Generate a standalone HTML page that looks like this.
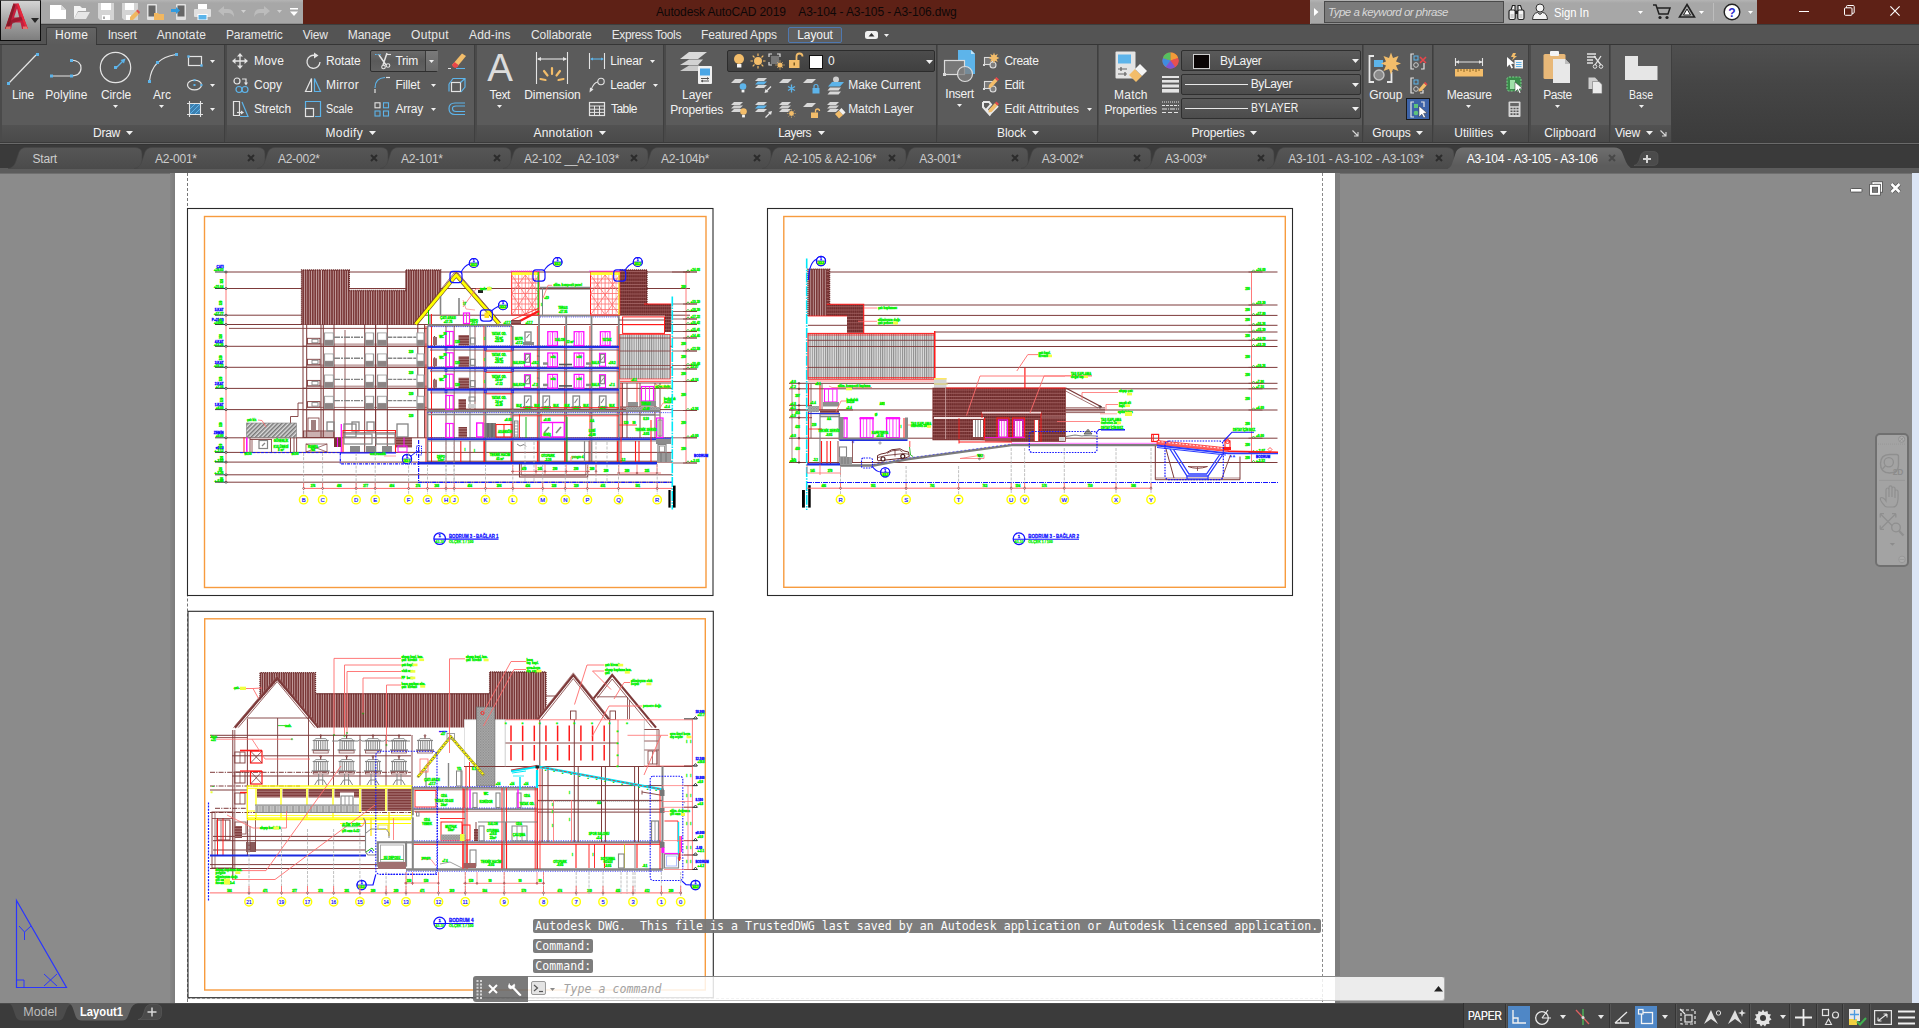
<!DOCTYPE html>
<html><head><meta charset="utf-8"><title>Autodesk AutoCAD 2019 - A3-104 - A3-105 - A3-106.dwg</title>
<style>
html,body{margin:0;padding:0;background:#8b8b8b;}
body{width:1919px;height:1028px;overflow:hidden;position:relative;font-family:"Liberation Sans",sans-serif;}
#app{position:absolute;left:0;top:0;width:1919px;height:1028px;overflow:hidden;}
#app div,#app span,#app svg{position:absolute;white-space:nowrap;}
#app svg{overflow:visible;}
#app svg text{white-space:pre;}
</style></head><body><div id="app">
<div style="left:0px;top:173px;width:1919px;height:831px;background:#8b8b8b;"></div>
<div style="left:0px;top:173px;width:1919px;height:1px;background:#6f6f6f;"></div>
<div style="left:1912px;top:173px;width:7px;height:830px;background:#dbe5f5;"></div>
<div style="left:175px;top:173px;width:1160px;height:830px;background:#ffffff;"></div>
<div style="left:1335px;top:173px;width:5px;height:830px;background:#7e7e7e;"></div>
<div style="left:170px;top:173px;width:5px;height:830px;background:linear-gradient(90deg,#868686,#7c7c7c);"></div>
<div style="left:187px;top:173px;width:0;height:829px;border-left:1px dashed #777;"></div>
<div style="left:1322px;top:173px;width:0;height:829px;border-left:1px dashed #8a8a8a;"></div>
<div style="left:187px;top:998px;width:1136px;height:0;border-top:1px dashed #b0b0b0;"></div>
<svg style="left:1848px;top:181px;" width="56" height="15" viewBox="0 0 56 15"><rect x="2.5" y="7.5" width="11.5" height="3.6" rx=".8" fill="#fff" stroke="#5a5a5a" stroke-width="1"/><rect x="25.2" y="2" width="8" height="8" fill="none" stroke="#5a5a5a" stroke-width="3.4"/><rect x="25.2" y="2" width="8" height="8" fill="none" stroke="#fff" stroke-width="1.6"/><rect x="23" y="4.8" width="8" height="8" fill="#777" stroke="#5a5a5a" stroke-width="3.6"/><rect x="23" y="4.8" width="8" height="8" fill="none" stroke="#fff" stroke-width="2"/><path d="M43.500 3L51.500 11M51.500 3L43.500 11" stroke="#5a5a5a" stroke-width="4.2"/><path d="M43.500 3L51.500 11M51.500 3L43.500 11" stroke="#fff" stroke-width="2.5"/></svg>
<div style="left:1875px;top:433px;width:34px;height:134px;background:#a3a3a3;border:2px solid #707070;box-sizing:border-box;border-radius:5px;"></div>
<svg style="left:1876px;top:434px;" width="31" height="132" viewBox="0 0 31 132"><circle cx="25.700" cy="5.200" r="3.100" fill="#acacac" stroke="#8f8f8f" stroke-width=".9"/><path d="M24 3.500L27.400 6.900M27.400 3.500L24 6.900" stroke="#8f8f8f" stroke-width=".9"/><path d="M2 10.100H30" stroke="#969696" stroke-width=".8" stroke-dasharray="1 1"/><path d="M3 46.400H29" stroke="#969696" stroke-width=".8"/><path d="M13.500 20.500H20.500Q22.500 20.500 22.500 22.500V31Q22.500 39 13.500 39Q4.500 39 4.500 29.800Q4.500 20.500 13.500 20.500Z" fill="none" stroke="#8f8f8f" stroke-width="1.400"/><circle cx="12.800" cy="28.200" r="4.600" fill="none" stroke="#8f8f8f" stroke-width="1.300"/><path d="M9.500 31.500L6.500 35" stroke="#8f8f8f" stroke-width="1.200"/><path d="M8 71Q3.500 66 4.500 64Q6 62.500 9 65.500L10 67V56Q10 54 11.500 54Q13 54 13 56V63V53.500Q13 51.800 14.500 51.800Q16 51.800 16 53.500V63V54.500Q16 53 17.500 53Q19 53 19 54.500V64V57.500Q19 56 20.500 56Q22 56 22 57.500Q22.500 66 21 70Q20 73 17 73H11Q9 73 8 71Z" fill="none" stroke="#8f8f8f" stroke-width="1.200"/><path d="M4.500 80L19.500 95M19.500 80L4.500 95" stroke="#8f8f8f" stroke-width="1.200"/><path d="M4.200 79.700H8M4.200 79.700V83.500M19.800 79.700H16M19.800 79.700V83.500M4.200 95.300H8M4.200 95.300V91.500" stroke="#8f8f8f" stroke-width="1.300" fill="none"/><circle cx="20" cy="93.500" r="4.300" fill="#a3a3a3" stroke="#8f8f8f" stroke-width="1.300"/><path d="M23 96.800L27.500 101.500" stroke="#8f8f8f" stroke-width="2.200"/><path d="M13.800 109H19L16.400 111.800Z" fill="#8c8c8c"/><circle cx="26" cy="125.400" r="3.300" fill="#aaa" stroke="#959595" stroke-width=".9"/><path d="M23.500 125.400H28.500" stroke="#959595" stroke-width=".8"/></svg>
<span style="left:1892.70px;top:468.10px;font:bold 8.5px/8.5px 'Liberation Sans',sans-serif;color:#8c8c8c;letter-spacing:-0.133px;">2D</span>
<svg style="left:12px;top:896px;" width="60" height="96" viewBox="0 0 60 96"><path d="M4.5 4.5V91.500H54.500Z" fill="none" stroke="#2a36ff" stroke-width="1.2"/><path d="M4.500 84H12V91.500" fill="none" stroke="#2a36ff" stroke-width="1"/><path d="M7 30L12.500 36L19 30M12.500 36V44" fill="none" stroke="#2a36ff" stroke-width="1"/><path d="M32 78L45 90M45 78L32 90" fill="none" stroke="#2a36ff" stroke-width="1"/></svg>
<svg style="left:0;top:0;" width="1919" height="1028" viewBox="0 0 1919 1028" font-family="'Liberation Sans',sans-serif" fill="none"><defs>
<pattern id="hv" width="2.4" height="4" patternUnits="userSpaceOnUse"><rect width="2.4" height="4" fill="#cfadad"/><rect width="1.65" height="4" fill="#7a3838"/></pattern>
<pattern id="hd" width="1.9" height="3.2" patternUnits="userSpaceOnUse"><rect width="1.9" height="3.2" fill="#8a4545"/><rect width="1.3" height="3.2" fill="#6e2c2c"/><rect y="2.5" width="1.9" height=".7" fill="#a86a6a"/></pattern>
<pattern id="hg" width="2.2" height="4" patternUnits="userSpaceOnUse"><rect width="2.2" height="4" fill="#dedede"/><rect width="1" height="4" fill="#8c8c8c"/></pattern>
<pattern id="hx" width="3" height="3" patternUnits="userSpaceOnUse" patternTransform="rotate(-45)"><rect width="3" height="3" fill="#dcdcdc"/><rect width="3" height="1.5" fill="#777"/></pattern>
<pattern id="hh" width="4" height="1.6" patternUnits="userSpaceOnUse"><rect width="4" height="1.6" fill="#b78a8a"/><rect width="4" height="1" fill="#7a3434"/></pattern>
<pattern id="hs" width="1.6" height="1.6" patternUnits="userSpaceOnUse"><rect width="1.6" height="1.6" fill="#b0b0b0"/><rect width=".8" height=".8" fill="#868686"/><rect x=".8" y=".8" width=".8" height=".8" fill="#929292"/></pattern>
</defs><rect x="187.5" y="208.5" width="525.5" height="387" fill="#fff" stroke="#2a2a2a" stroke-width="1.1"/>
<rect x="204.5" y="216.5" width="501.5" height="371" fill="none" stroke="#f79b3e" stroke-width="1.4"/>
<path d="M226 272L690 272" stroke="#7d3a3a" stroke-width="1"/>
<path d="M226 288.5L690 288.5" stroke="#7d3a3a" stroke-width="1"/>
<path d="M226 315.2L690 315.2" stroke="#7d3a3a" stroke-width="1"/>
<path d="M226 324.5L690 324.5" stroke="#7d3a3a" stroke-width="1"/>
<path d="M226 346.3L672 346.3" stroke="#7d3a3a" stroke-width="1"/>
<path d="M226 367.3L672 367.3" stroke="#7d3a3a" stroke-width="1"/>
<path d="M226 388.4L672 388.4" stroke="#7d3a3a" stroke-width="1"/>
<path d="M226 409.6L672 409.6" stroke="#7d3a3a" stroke-width="1"/>
<path d="M226 437.8L672 437.8" stroke="#7d3a3a" stroke-width="1"/>
<path d="M226 452.4L672 452.4" stroke="#7d3a3a" stroke-width="1"/>
<path d="M226 462.1L672 462.1" stroke="#7d3a3a" stroke-width="1"/>
<path d="M226 474.8L672 474.8" stroke="#7d3a3a" stroke-width="1"/>
<path d="M226 482.2L672 482.2" stroke="#7d3a3a" stroke-width="1"/>
<path d="M229 328.4L303 328.4" stroke="#7d3a3a" stroke-width="0.9"/>
<path d="M226 272L226 482.2" stroke="#ff6b6b" stroke-width="0.9"/>
<text x="223.5" y="271.4" font-size="3.12" fill="#00f000" font-weight="bold" text-anchor="end"  stroke="#00f000" stroke-width=".35">+24.03</text>
<text x="223.5" y="268.2" font-size="3.12" fill="#1414ff" font-weight="bold" text-anchor="end"  stroke="#1414ff" stroke-width=".35">ÇATI</text>
<path d="M215 272L226 272" stroke="#111" stroke-width="0.8"/>
<circle cx="226" cy="272" r="1" fill="#fff" stroke="#111" stroke-width="0.7"/>
<text x="223.5" y="287.9" font-size="3.12" fill="#00f000" font-weight="bold" text-anchor="end"  stroke="#00f000" stroke-width=".35">+21.64</text>
<path d="M215 288.5L226 288.5" stroke="#111" stroke-width="0.8"/>
<circle cx="226" cy="288.5" r="1" fill="#fff" stroke="#111" stroke-width="0.7"/>
<text x="223.5" y="314.6" font-size="3.12" fill="#00f000" font-weight="bold" text-anchor="end"  stroke="#00f000" stroke-width=".35">+17.77</text>
<text x="223.5" y="311.4" font-size="3.12" fill="#1414ff" font-weight="bold" text-anchor="end"  stroke="#1414ff" stroke-width=".35">5.KAT</text>
<path d="M215 315.2L226 315.2" stroke="#111" stroke-width="0.8"/>
<circle cx="226" cy="315.2" r="1" fill="#fff" stroke="#111" stroke-width="0.7"/>
<text x="223.5" y="323.9" font-size="3.12" fill="#00f000" font-weight="bold" text-anchor="end"  stroke="#00f000" stroke-width=".35">+16.42</text>
<text x="223.5" y="320.7" font-size="3.12" fill="#1414ff" font-weight="bold" text-anchor="end"  stroke="#1414ff" stroke-width=".35">P+21.90</text>
<path d="M215 324.5L226 324.5" stroke="#111" stroke-width="0.8"/>
<circle cx="226" cy="324.5" r="1" fill="#fff" stroke="#111" stroke-width="0.7"/>
<text x="223.5" y="345.7" font-size="3.12" fill="#00f000" font-weight="bold" text-anchor="end"  stroke="#00f000" stroke-width=".35">+13.26</text>
<text x="223.5" y="342.5" font-size="3.12" fill="#1414ff" font-weight="bold" text-anchor="end"  stroke="#1414ff" stroke-width=".35">4.KAT</text>
<path d="M215 346.3L226 346.3" stroke="#111" stroke-width="0.8"/>
<circle cx="226" cy="346.3" r="1" fill="#fff" stroke="#111" stroke-width="0.7"/>
<text x="223.5" y="366.7" font-size="3.12" fill="#00f000" font-weight="bold" text-anchor="end"  stroke="#00f000" stroke-width=".35">+10.22</text>
<text x="223.5" y="363.5" font-size="3.12" fill="#1414ff" font-weight="bold" text-anchor="end"  stroke="#1414ff" stroke-width=".35">3.KAT</text>
<path d="M215 367.3L226 367.3" stroke="#111" stroke-width="0.8"/>
<circle cx="226" cy="367.3" r="1" fill="#fff" stroke="#111" stroke-width="0.7"/>
<text x="223.5" y="387.8" font-size="3.12" fill="#00f000" font-weight="bold" text-anchor="end"  stroke="#00f000" stroke-width=".35">+7.16</text>
<text x="223.5" y="384.6" font-size="3.12" fill="#1414ff" font-weight="bold" text-anchor="end"  stroke="#1414ff" stroke-width=".35">2.KAT</text>
<path d="M215 388.4L226 388.4" stroke="#111" stroke-width="0.8"/>
<circle cx="226" cy="388.4" r="1" fill="#fff" stroke="#111" stroke-width="0.7"/>
<text x="223.5" y="409" font-size="3.12" fill="#00f000" font-weight="bold" text-anchor="end"  stroke="#00f000" stroke-width=".35">+4.09</text>
<text x="223.5" y="405.8" font-size="3.12" fill="#1414ff" font-weight="bold" text-anchor="end"  stroke="#1414ff" stroke-width=".35">1.KAT</text>
<path d="M215 409.6L226 409.6" stroke="#111" stroke-width="0.8"/>
<circle cx="226" cy="409.6" r="1" fill="#fff" stroke="#111" stroke-width="0.7"/>
<text x="223.5" y="437.2" font-size="3.12" fill="#00f000" font-weight="bold" text-anchor="end"  stroke="#00f000" stroke-width=".35">+0.00</text>
<text x="223.5" y="434" font-size="3.12" fill="#1414ff" font-weight="bold" text-anchor="end"  stroke="#1414ff" stroke-width=".35">ZEMİN</text>
<path d="M215 437.8L226 437.8" stroke="#111" stroke-width="0.8"/>
<circle cx="226" cy="437.8" r="1" fill="#fff" stroke="#111" stroke-width="0.7"/>
<text x="223.5" y="451.8" font-size="3.12" fill="#00f000" font-weight="bold" text-anchor="end"  stroke="#00f000" stroke-width=".35">+-2.12</text>
<text x="223.5" y="448.6" font-size="3.12" fill="#1414ff" font-weight="bold" text-anchor="end"  stroke="#1414ff" stroke-width=".35">±0.00</text>
<path d="M215 452.4L226 452.4" stroke="#111" stroke-width="0.8"/>
<circle cx="226" cy="452.4" r="1" fill="#fff" stroke="#111" stroke-width="0.7"/>
<text x="223.5" y="461.5" font-size="3.12" fill="#00f000" font-weight="bold" text-anchor="end"  stroke="#00f000" stroke-width=".35">+-3.52</text>
<path d="M215 462.1L226 462.1" stroke="#111" stroke-width="0.8"/>
<circle cx="226" cy="462.1" r="1" fill="#fff" stroke="#111" stroke-width="0.7"/>
<text x="223.5" y="474.2" font-size="3.12" fill="#00f000" font-weight="bold" text-anchor="end"  stroke="#00f000" stroke-width=".35">+-5.36</text>
<path d="M215 474.8L226 474.8" stroke="#111" stroke-width="0.8"/>
<circle cx="226" cy="474.8" r="1" fill="#fff" stroke="#111" stroke-width="0.7"/>
<text x="223.5" y="481.6" font-size="3.12" fill="#00f000" font-weight="bold" text-anchor="end"  stroke="#00f000" stroke-width=".35">+-6.43</text>
<path d="M215 482.2L226 482.2" stroke="#111" stroke-width="0.8"/>
<circle cx="226" cy="482.2" r="1" fill="#fff" stroke="#111" stroke-width="0.7"/>
<text x="222.5" y="281.25" font-size="2.81" fill="#00f000" font-weight="bold" text-anchor="middle" transform="rotate(-90 222.5 281.2)" stroke="#00f000" stroke-width=".35">320</text>
<text x="222.5" y="302.85" font-size="2.81" fill="#00f000" font-weight="bold" text-anchor="middle" transform="rotate(-90 222.5 302.9)" stroke="#00f000" stroke-width=".35">320</text>
<text x="222.5" y="320.85" font-size="2.81" fill="#00f000" font-weight="bold" text-anchor="middle" transform="rotate(-90 222.5 320.9)" stroke="#00f000" stroke-width=".35">320</text>
<text x="222.5" y="336.4" font-size="2.81" fill="#00f000" font-weight="bold" text-anchor="middle" transform="rotate(-90 222.5 336.4)" stroke="#00f000" stroke-width=".35">320</text>
<text x="222.5" y="357.8" font-size="2.81" fill="#00f000" font-weight="bold" text-anchor="middle" transform="rotate(-90 222.5 357.8)" stroke="#00f000" stroke-width=".35">320</text>
<text x="222.5" y="378.85" font-size="2.81" fill="#00f000" font-weight="bold" text-anchor="middle" transform="rotate(-90 222.5 378.9)" stroke="#00f000" stroke-width=".35">320</text>
<text x="222.5" y="400" font-size="2.81" fill="#00f000" font-weight="bold" text-anchor="middle" transform="rotate(-90 222.5 400.0)" stroke="#00f000" stroke-width=".35">320</text>
<text x="222.5" y="424.7" font-size="2.81" fill="#00f000" font-weight="bold" text-anchor="middle" transform="rotate(-90 222.5 424.7)" stroke="#00f000" stroke-width=".35">320</text>
<text x="222.5" y="446.1" font-size="2.81" fill="#00f000" font-weight="bold" text-anchor="middle" transform="rotate(-90 222.5 446.1)" stroke="#00f000" stroke-width=".35">320</text>
<text x="222.5" y="458.25" font-size="2.81" fill="#00f000" font-weight="bold" text-anchor="middle" transform="rotate(-90 222.5 458.2)" stroke="#00f000" stroke-width=".35">320</text>
<text x="222.5" y="469.45" font-size="2.81" fill="#00f000" font-weight="bold" text-anchor="middle" transform="rotate(-90 222.5 469.5)" stroke="#00f000" stroke-width=".35">320</text>
<text x="222.5" y="479.5" font-size="2.81" fill="#00f000" font-weight="bold" text-anchor="middle" transform="rotate(-90 222.5 479.5)" stroke="#00f000" stroke-width=".35">320</text>
<path d="M686 272L686 463" stroke="#ff6b6b" stroke-width="0.9"/>
<path d="M686 272L688 269.8L690 272" fill="none" stroke="#0a0" stroke-width="0.7" />
<text x="690.5" y="271.2" font-size="3.12" fill="#00f000" font-weight="bold"  stroke="#00f000" stroke-width=".35">+24.03</text>
<path d="M683 272L697 272" stroke="#7d3a3a" stroke-width="0.8"/>
<path d="M672 272L697 272" stroke="#7d3a3a" stroke-width="0.8"/>
<path d="M686 304L688 301.8L690 304" fill="none" stroke="#0a0" stroke-width="0.7" />
<text x="690.5" y="303.2" font-size="3.12" fill="#00f000" font-weight="bold"  stroke="#00f000" stroke-width=".35">+19.39</text>
<path d="M683 304L697 304" stroke="#7d3a3a" stroke-width="0.8"/>
<path d="M672 304L697 304" stroke="#7d3a3a" stroke-width="0.8"/>
<path d="M686 311.5L688 309.3L690 311.5" fill="none" stroke="#0a0" stroke-width="0.7" />
<text x="690.5" y="310.7" font-size="3.12" fill="#00f000" font-weight="bold"  stroke="#00f000" stroke-width=".35">+18.30</text>
<path d="M683 311.5L697 311.5" stroke="#7d3a3a" stroke-width="0.8"/>
<path d="M672 311.5L697 311.5" stroke="#7d3a3a" stroke-width="0.8"/>
<path d="M686 319L688 316.8L690 319" fill="none" stroke="#0a0" stroke-width="0.7" />
<text x="690.5" y="318.2" font-size="3.12" fill="#00f000" font-weight="bold"  stroke="#00f000" stroke-width=".35">+17.22</text>
<path d="M683 319L697 319" stroke="#7d3a3a" stroke-width="0.8"/>
<path d="M672 319L697 319" stroke="#7d3a3a" stroke-width="0.8"/>
<path d="M686 324.5L688 322.3L690 324.5" fill="none" stroke="#0a0" stroke-width="0.7" />
<text x="690.5" y="323.7" font-size="3.12" fill="#00f000" font-weight="bold"  stroke="#00f000" stroke-width=".35">+16.42</text>
<path d="M683 324.5L697 324.5" stroke="#7d3a3a" stroke-width="0.8"/>
<path d="M672 324.5L697 324.5" stroke="#7d3a3a" stroke-width="0.8"/>
<path d="M686 331.5L688 329.3L690 331.5" fill="none" stroke="#0a0" stroke-width="0.7" />
<text x="690.5" y="330.7" font-size="3.12" fill="#00f000" font-weight="bold"  stroke="#00f000" stroke-width=".35">+15.41</text>
<path d="M683 331.5L697 331.5" stroke="#7d3a3a" stroke-width="0.8"/>
<path d="M672 331.5L697 331.5" stroke="#7d3a3a" stroke-width="0.8"/>
<path d="M686 338L688 335.8L690 338" fill="none" stroke="#0a0" stroke-width="0.7" />
<text x="690.5" y="337.2" font-size="3.12" fill="#00f000" font-weight="bold"  stroke="#00f000" stroke-width=".35">+14.46</text>
<path d="M683 338L697 338" stroke="#7d3a3a" stroke-width="0.8"/>
<path d="M672 338L697 338" stroke="#7d3a3a" stroke-width="0.8"/>
<path d="M686 351L688 348.8L690 351" fill="none" stroke="#0a0" stroke-width="0.7" />
<text x="690.5" y="350.2" font-size="3.12" fill="#00f000" font-weight="bold"  stroke="#00f000" stroke-width=".35">+12.58</text>
<path d="M683 351L697 351" stroke="#7d3a3a" stroke-width="0.8"/>
<path d="M672 351L697 351" stroke="#7d3a3a" stroke-width="0.8"/>
<path d="M686 365.5L688 363.3L690 365.5" fill="none" stroke="#0a0" stroke-width="0.7" />
<text x="690.5" y="364.7" font-size="3.12" fill="#00f000" font-weight="bold"  stroke="#00f000" stroke-width=".35">+10.48</text>
<path d="M683 365.5L697 365.5" stroke="#7d3a3a" stroke-width="0.8"/>
<path d="M672 365.5L697 365.5" stroke="#7d3a3a" stroke-width="0.8"/>
<path d="M686 369L688 366.8L690 369" fill="none" stroke="#0a0" stroke-width="0.7" />
<text x="690.5" y="368.2" font-size="3.12" fill="#00f000" font-weight="bold"  stroke="#00f000" stroke-width=".35">+9.97</text>
<path d="M683 369L697 369" stroke="#7d3a3a" stroke-width="0.8"/>
<path d="M672 369L697 369" stroke="#7d3a3a" stroke-width="0.8"/>
<path d="M686 381.5L688 379.3L690 381.5" fill="none" stroke="#0a0" stroke-width="0.7" />
<text x="690.5" y="380.7" font-size="3.12" fill="#00f000" font-weight="bold"  stroke="#00f000" stroke-width=".35">+8.16</text>
<path d="M683 381.5L697 381.5" stroke="#7d3a3a" stroke-width="0.8"/>
<path d="M672 381.5L697 381.5" stroke="#7d3a3a" stroke-width="0.8"/>
<path d="M686 410.5L688 408.3L690 410.5" fill="none" stroke="#0a0" stroke-width="0.7" />
<text x="690.5" y="409.7" font-size="3.12" fill="#00f000" font-weight="bold"  stroke="#00f000" stroke-width=".35">+3.96</text>
<path d="M683 410.5L697 410.5" stroke="#7d3a3a" stroke-width="0.8"/>
<path d="M672 410.5L697 410.5" stroke="#7d3a3a" stroke-width="0.8"/>
<path d="M686 437.8L688 435.6L690 437.8" fill="none" stroke="#0a0" stroke-width="0.7" />
<text x="690.5" y="437" font-size="3.12" fill="#00f000" font-weight="bold"  stroke="#00f000" stroke-width=".35">+0.00</text>
<path d="M683 437.8L697 437.8" stroke="#7d3a3a" stroke-width="0.8"/>
<path d="M672 437.8L697 437.8" stroke="#7d3a3a" stroke-width="0.8"/>
<path d="M686 463L688 460.8L690 463" fill="none" stroke="#0a0" stroke-width="0.7" />
<text x="690.5" y="462.2" font-size="3.12" fill="#00f000" font-weight="bold"  stroke="#00f000" stroke-width=".35">+-3.65</text>
<path d="M683 463L697 463" stroke="#7d3a3a" stroke-width="0.8"/>
<path d="M672 463L697 463" stroke="#7d3a3a" stroke-width="0.8"/>
<text x="683.5" y="288" font-size="2.81" fill="#00f000" font-weight="bold" text-anchor="middle"  stroke="#00f000" stroke-width=".35">290</text>
<text x="683.5" y="344.5" font-size="2.81" fill="#00f000" font-weight="bold" text-anchor="middle"  stroke="#00f000" stroke-width=".35">290</text>
<text x="683.5" y="358.25" font-size="2.81" fill="#00f000" font-weight="bold" text-anchor="middle"  stroke="#00f000" stroke-width=".35">290</text>
<text x="683.5" y="375.25" font-size="2.81" fill="#00f000" font-weight="bold" text-anchor="middle"  stroke="#00f000" stroke-width=".35">290</text>
<text x="683.5" y="396" font-size="2.81" fill="#00f000" font-weight="bold" text-anchor="middle"  stroke="#00f000" stroke-width=".35">290</text>
<text x="683.5" y="424.15" font-size="2.81" fill="#00f000" font-weight="bold" text-anchor="middle"  stroke="#00f000" stroke-width=".35">290</text>
<text x="683.5" y="450.4" font-size="2.81" fill="#00f000" font-weight="bold" text-anchor="middle"  stroke="#00f000" stroke-width=".35">290</text>
<text x="694" y="456.5" font-size="3.12" fill="#1414ff" font-weight="bold"  stroke="#1414ff" stroke-width=".35">BODRUM</text>
<path d="M301.6 270L349.3 270L349.3 290.5L405.7 290.5L405.7 270L440.7 270L440.7 293.7L415.5 324.5L301.6 324.5Z" fill="url(#hv)" />
<path d="M301.6 324.5L301.6 270L349.3 270L349.3 290.5L405.7 290.5L405.7 270L440.7 270L440.7 293" fill="none" stroke="#6a2a2a" stroke-width="1.4" stroke-dasharray="1.2 .8" />
<path d="M321.5 270L321.5 324.5" stroke="#e8d0d0" stroke-width="0.8"/>
<path d="M322.8 270L322.8 324.5" stroke="#6a2a2a" stroke-width="0.8"/>
<path d="M303 324.5L303 438" stroke="#7d3a3a" stroke-width="1"/>
<path d="M306.7 324.5L306.7 438" stroke="#7d3a3a" stroke-width="1"/>
<path d="M321 324.5L321 438" stroke="#7d3a3a" stroke-width="1"/>
<path d="M323.3 324.5L323.3 438" stroke="#7d3a3a" stroke-width="1"/>
<path d="M334 324.5L334 438" stroke="#7d3a3a" stroke-width="1"/>
<path d="M364.7 324.5L364.7 452" stroke="#7d3a3a" stroke-width="1"/>
<path d="M375.6 324.5L375.6 452" stroke="#7d3a3a" stroke-width="1"/>
<path d="M387.3 324.5L387.3 452" stroke="#7d3a3a" stroke-width="1"/>
<path d="M417.8 324.5L417.8 438" stroke="#7d3a3a" stroke-width="1"/>
<path d="M424.6 324.5L424.6 438" stroke="#7d3a3a" stroke-width="1"/>
<path d="M375.6 324.5L375.6 452" stroke="#7d3a3a" stroke-width="1"/>
<path d="M345 330L345 438" stroke="#7d3a3a" stroke-width="0.8"/>
<path d="M303 346.3L427 346.3" stroke="#7d3a3a" stroke-width="1.1"/>
<path d="M306.7 344.1L427 344.1" stroke="#7d3a3a" stroke-width="0.7"/>
<path d="M303 367.3L427 367.3" stroke="#7d3a3a" stroke-width="1.1"/>
<path d="M306.7 365.1L427 365.1" stroke="#7d3a3a" stroke-width="0.7"/>
<path d="M303 388.4L427 388.4" stroke="#7d3a3a" stroke-width="1.1"/>
<path d="M306.7 386.2L427 386.2" stroke="#7d3a3a" stroke-width="0.7"/>
<path d="M303 409.6L427 409.6" stroke="#7d3a3a" stroke-width="1.1"/>
<path d="M306.7 407.4L427 407.4" stroke="#7d3a3a" stroke-width="0.7"/>
<path d="M303 328.4L427 328.4" stroke="#7d3a3a" stroke-width="0.9"/>
<rect x="323.9" y="332.5" width="10.1" height="13.3" fill="#9a9a9a"/>
<rect x="325.5" y="333.8" width="6.9" height="5.5" fill="#fff" stroke="#fff" stroke-width="0.8"/>
<rect x="324.9" y="340.3" width="8.1" height="5" fill="#8c8484"/>
<rect x="364.7" y="332.5" width="9.5" height="13.3" fill="#9a9a9a"/>
<rect x="366.3" y="333.8" width="6.3" height="5.5" fill="#fff" stroke="#fff" stroke-width="0.8"/>
<rect x="365.7" y="340.3" width="7.5" height="5" fill="#8c8484"/>
<rect x="377" y="332.5" width="10.3" height="13.3" fill="#9a9a9a"/>
<rect x="378.6" y="333.8" width="7.1" height="5.5" fill="#fff" stroke="#fff" stroke-width="0.8"/>
<rect x="378" y="340.3" width="8.3" height="5" fill="#8c8484"/>
<rect x="416.4" y="332.5" width="8.2" height="13.3" fill="#9a9a9a"/>
<rect x="418" y="333.8" width="5" height="5.5" fill="#fff" stroke="#fff" stroke-width="0.8"/>
<rect x="417.4" y="340.3" width="6.2" height="5" fill="#8c8484"/>
<path d="M334 337.3L364.7 337.3" stroke="#858585" stroke-width="1.4" stroke-dasharray="6 1 2 1"/>
<path d="M387.3 337.3L416.4 337.3" stroke="#858585" stroke-width="1.4" stroke-dasharray="5 1 3 1"/>
<rect x="307.5" y="338.3" width="12.5" height="5.5" fill="none" stroke="#7d3a3a" stroke-width="0.9"/>
<rect x="312" y="339.3" width="6" height="3.5" fill="none" stroke="#858585" stroke-width="0.9"/>
<text x="411" y="353.3" font-size="2.81" fill="#00f000" font-weight="bold" text-anchor="middle"  stroke="#00f000" stroke-width=".35">320</text>
<rect x="407.5" y="349.8" width="7" height="4.5" fill="none"/>
<rect x="323.9" y="353.5" width="10.1" height="13.3" fill="#9a9a9a"/>
<rect x="325.5" y="354.8" width="6.9" height="5.5" fill="#fff" stroke="#fff" stroke-width="0.8"/>
<rect x="324.9" y="361.3" width="8.1" height="5" fill="#8c8484"/>
<rect x="364.7" y="353.5" width="9.5" height="13.3" fill="#9a9a9a"/>
<rect x="366.3" y="354.8" width="6.3" height="5.5" fill="#fff" stroke="#fff" stroke-width="0.8"/>
<rect x="365.7" y="361.3" width="7.5" height="5" fill="#8c8484"/>
<rect x="377" y="353.5" width="10.3" height="13.3" fill="#9a9a9a"/>
<rect x="378.6" y="354.8" width="7.1" height="5.5" fill="#fff" stroke="#fff" stroke-width="0.8"/>
<rect x="378" y="361.3" width="8.3" height="5" fill="#8c8484"/>
<rect x="416.4" y="353.5" width="8.2" height="13.3" fill="#9a9a9a"/>
<rect x="418" y="354.8" width="5" height="5.5" fill="#fff" stroke="#fff" stroke-width="0.8"/>
<rect x="417.4" y="361.3" width="6.2" height="5" fill="#8c8484"/>
<path d="M334 358.3L364.7 358.3" stroke="#858585" stroke-width="1.4" stroke-dasharray="6 1 2 1"/>
<path d="M387.3 358.3L416.4 358.3" stroke="#858585" stroke-width="1.4" stroke-dasharray="5 1 3 1"/>
<rect x="307.5" y="359.3" width="12.5" height="5.5" fill="none" stroke="#7d3a3a" stroke-width="0.9"/>
<rect x="312" y="360.3" width="6" height="3.5" fill="none" stroke="#858585" stroke-width="0.9"/>
<text x="411" y="374.3" font-size="2.81" fill="#00f000" font-weight="bold" text-anchor="middle"  stroke="#00f000" stroke-width=".35">320</text>
<rect x="407.5" y="370.8" width="7" height="4.5" fill="none"/>
<rect x="323.9" y="374.6" width="10.1" height="13.3" fill="#9a9a9a"/>
<rect x="325.5" y="375.9" width="6.9" height="5.5" fill="#fff" stroke="#fff" stroke-width="0.8"/>
<rect x="324.9" y="382.4" width="8.1" height="5" fill="#8c8484"/>
<rect x="364.7" y="374.6" width="9.5" height="13.3" fill="#9a9a9a"/>
<rect x="366.3" y="375.9" width="6.3" height="5.5" fill="#fff" stroke="#fff" stroke-width="0.8"/>
<rect x="365.7" y="382.4" width="7.5" height="5" fill="#8c8484"/>
<rect x="377" y="374.6" width="10.3" height="13.3" fill="#9a9a9a"/>
<rect x="378.6" y="375.9" width="7.1" height="5.5" fill="#fff" stroke="#fff" stroke-width="0.8"/>
<rect x="378" y="382.4" width="8.3" height="5" fill="#8c8484"/>
<rect x="416.4" y="374.6" width="8.2" height="13.3" fill="#9a9a9a"/>
<rect x="418" y="375.9" width="5" height="5.5" fill="#fff" stroke="#fff" stroke-width="0.8"/>
<rect x="417.4" y="382.4" width="6.2" height="5" fill="#8c8484"/>
<path d="M334 379.4L364.7 379.4" stroke="#858585" stroke-width="1.4" stroke-dasharray="6 1 2 1"/>
<path d="M387.3 379.4L416.4 379.4" stroke="#858585" stroke-width="1.4" stroke-dasharray="5 1 3 1"/>
<rect x="307.5" y="380.4" width="12.5" height="5.5" fill="none" stroke="#7d3a3a" stroke-width="0.9"/>
<rect x="312" y="381.4" width="6" height="3.5" fill="none" stroke="#858585" stroke-width="0.9"/>
<text x="411" y="395.4" font-size="2.81" fill="#00f000" font-weight="bold" text-anchor="middle"  stroke="#00f000" stroke-width=".35">320</text>
<rect x="407.5" y="391.9" width="7" height="4.5" fill="none"/>
<rect x="323.9" y="395.8" width="10.1" height="13.3" fill="#9a9a9a"/>
<rect x="325.5" y="397.1" width="6.9" height="5.5" fill="#fff" stroke="#fff" stroke-width="0.8"/>
<rect x="324.9" y="403.6" width="8.1" height="5" fill="#8c8484"/>
<rect x="364.7" y="395.8" width="9.5" height="13.3" fill="#9a9a9a"/>
<rect x="366.3" y="397.1" width="6.3" height="5.5" fill="#fff" stroke="#fff" stroke-width="0.8"/>
<rect x="365.7" y="403.6" width="7.5" height="5" fill="#8c8484"/>
<rect x="377" y="395.8" width="10.3" height="13.3" fill="#9a9a9a"/>
<rect x="378.6" y="397.1" width="7.1" height="5.5" fill="#fff" stroke="#fff" stroke-width="0.8"/>
<rect x="378" y="403.6" width="8.3" height="5" fill="#8c8484"/>
<rect x="416.4" y="395.8" width="8.2" height="13.3" fill="#9a9a9a"/>
<rect x="418" y="397.1" width="5" height="5.5" fill="#fff" stroke="#fff" stroke-width="0.8"/>
<rect x="417.4" y="403.6" width="6.2" height="5" fill="#8c8484"/>
<path d="M334 400.6L364.7 400.6" stroke="#858585" stroke-width="1.4" stroke-dasharray="6 1 2 1"/>
<path d="M387.3 400.6L416.4 400.6" stroke="#858585" stroke-width="1.4" stroke-dasharray="5 1 3 1"/>
<rect x="307.5" y="401.6" width="12.5" height="5.5" fill="none" stroke="#7d3a3a" stroke-width="0.9"/>
<rect x="312" y="402.6" width="6" height="3.5" fill="none" stroke="#858585" stroke-width="0.9"/>
<text x="411" y="416.6" font-size="2.81" fill="#00f000" font-weight="bold" text-anchor="middle"  stroke="#00f000" stroke-width=".35">320</text>
<rect x="407.5" y="413.1" width="7" height="4.5" fill="none"/>
<path d="M290.5 452L290.5 416.5L298 416.5L298 403L303 403" fill="none" stroke="#7d3a3a" stroke-width="0.9" />
<rect x="303.5" y="431" width="30.5" height="6.5" fill="none" stroke="#7d3a3a" stroke-width="0.9"/>
<path d="M305 431.5L305 437.5" stroke="#7d3a3a" stroke-width="0.8"/>
<path d="M307 431.5L307 437.5" stroke="#7d3a3a" stroke-width="0.8"/>
<path d="M309 431.5L309 437.5" stroke="#7d3a3a" stroke-width="0.8"/>
<path d="M311 431.5L311 437.5" stroke="#7d3a3a" stroke-width="0.8"/>
<path d="M313 431.5L313 437.5" stroke="#7d3a3a" stroke-width="0.8"/>
<path d="M315 431.5L315 437.5" stroke="#7d3a3a" stroke-width="0.8"/>
<path d="M317 431.5L317 437.5" stroke="#7d3a3a" stroke-width="0.8"/>
<path d="M319 431.5L319 437.5" stroke="#7d3a3a" stroke-width="0.8"/>
<path d="M321 431.5L321 437.5" stroke="#7d3a3a" stroke-width="0.8"/>
<path d="M323 431.5L323 437.5" stroke="#7d3a3a" stroke-width="0.8"/>
<path d="M325 431.5L325 437.5" stroke="#7d3a3a" stroke-width="0.8"/>
<path d="M327 431.5L327 437.5" stroke="#7d3a3a" stroke-width="0.8"/>
<path d="M329 431.5L329 437.5" stroke="#7d3a3a" stroke-width="0.8"/>
<path d="M331 431.5L331 437.5" stroke="#7d3a3a" stroke-width="0.8"/>
<path d="M333 431.5L333 437.5" stroke="#7d3a3a" stroke-width="0.8"/>
<rect x="308" y="418" width="11" height="13" fill="none" stroke="#7d3a3a" stroke-width="0.8"/>
<rect x="311" y="420" width="5" height="11" fill="#a08080"/>
<rect x="327" y="422" width="7" height="9" fill="none" stroke="#858585" stroke-width="1.3"/>
<rect x="352" y="422" width="7" height="9" fill="none" stroke="#858585" stroke-width="1.3"/>
<rect x="367" y="422" width="7" height="9" fill="none" stroke="#858585" stroke-width="1.3"/>
<rect x="344" y="424" width="12" height="13" fill="none" stroke="#858585" stroke-width="1.3"/>
<rect x="397" y="424" width="11" height="13" fill="none" stroke="#858585" stroke-width="1.3"/>
<path d="M341.3 424L341.3 452" stroke="#ff10ff" stroke-width="1.3"/>
<path d="M343 452L343 430.5L395.5 430.5L395.5 452" fill="none" stroke="#ff1a1a" stroke-width="1.1" />
<path d="M343 432.8L395.5 432.8" stroke="#7d3a3a" stroke-width="0.8"/>
<rect x="344" y="434" width="28" height="10" fill="none" stroke="#858585" stroke-width="1.2"/>
<rect x="376" y="434" width="19" height="10" fill="none" stroke="#858585" stroke-width="1.2"/>
<rect x="350" y="446" width="10" height="6" fill="#8a8a8a"/>
<rect x="366" y="446" width="10" height="6" fill="#8a8a8a"/>
<rect x="382" y="446" width="10" height="6" fill="#8a8a8a"/>
<rect x="334" y="437.5" width="7" height="9.5" fill="#7a3434"/>
<path d="M337.5 437.5L337.5 447" stroke="#ff10ff" stroke-width="1"/>
<rect x="396" y="437.5" width="16" height="10" fill="url(#hh)"/>
<path d="M404 437.5L404 447" stroke="#ff10ff" stroke-width="1"/>
<rect x="398" y="446" width="9" height="6" fill="none" stroke="#ff10ff" stroke-width="1"/>
<path d="M306 444L327 452" fill="none" stroke="#7d3a3a" stroke-width="0.7" />
<path d="M306 452L327 444" fill="none" stroke="#7d3a3a" stroke-width="0.7" />
<rect x="306" y="444" width="21" height="8" fill="none" stroke="#7d3a3a" stroke-width="0.7"/>
<text x="313" y="448" font-size="2.81" fill="#00f000" font-weight="bold" text-anchor="middle"  stroke="#00f000" stroke-width=".35">RAMPA</text>
<text x="313" y="451" font-size="2.81" fill="#00f000" font-weight="bold" text-anchor="middle"  stroke="#00f000" stroke-width=".35">%8</text>
<rect x="246.3" y="423" width="50.3" height="14.4" fill="url(#hx)"/>
<rect x="246.3" y="423" width="50.3" height="14.4" fill="none" stroke="#858585" stroke-width="0.6"/>
<path d="M244 437.4L244 452" stroke="#ff1a1a" stroke-width="1"/>
<path d="M246.8 437.4L246.8 452" stroke="#ff10ff" stroke-width="1.6"/>
<path d="M250 437.4L250 452" stroke="#7d3a3a" stroke-width="0.9"/>
<path d="M294 437.4L294 452" stroke="#7d3a3a" stroke-width="0.9"/>
<path d="M296.6 437.4L296.6 452" stroke="#7d3a3a" stroke-width="0.9"/>
<path d="M250 439.5L272 439.5" stroke="#7d3a3a" stroke-width="0.9"/>
<path d="M252 439.5L252 452" fill="none" stroke="#7d3a3a" stroke-width="0.8" />
<path d="M271.5 439.5L271.5 452" fill="none" stroke="#7d3a3a" stroke-width="0.8" />
<rect x="259" y="440.5" width="8.5" height="8" fill="none" stroke="#858585" stroke-width="1.2"/>
<path d="M262 446L265 443" fill="none" stroke="#858585" stroke-width="1.2" />
<text x="281" y="442" font-size="2.81" fill="#00f000" font-weight="bold" text-anchor="middle"  stroke="#00f000" stroke-width=".35">GÜVENLİK</text>
<text x="281" y="447.5" font-size="2.91" fill="#00f000" font-weight="bold" text-anchor="middle"  stroke="#00f000" stroke-width=".35">KULÜBESİ</text>
<text x="281" y="451" font-size="2.81" fill="#00f000" font-weight="bold" text-anchor="middle"  stroke="#00f000" stroke-width=".35">8 m²</text>
<text x="247" y="421" font-size="2.81" fill="#00f000" font-weight="bold"  stroke="#00f000" stroke-width=".35">çatı kir.</text>
<path d="M258 420L262 420.5L266 427" fill="none" stroke="#ff6b6b" stroke-width="0.8" />
<path d="M240 452.6L340 452.6" stroke="#1414ff" stroke-width="1" stroke-dasharray="3 1.2"/>
<text x="248" y="455" font-size="2.81" fill="#00f000" font-weight="bold" text-anchor="middle"  stroke="#00f000" stroke-width=".35">±0.00</text>
<text x="295" y="455" font-size="2.81" fill="#00f000" font-weight="bold" text-anchor="middle"  stroke="#00f000" stroke-width=".35">±0.00</text>
<path d="M340.3 452.6L340.3 463.8L418 463.8" fill="none" stroke="#1414ff" stroke-width="1.2" stroke-dasharray="3 1 1 1" />
<path d="M340 452.8L396 452.8" stroke="#1414ff" stroke-width="1.3"/>
<path d="M418.6 440L418.6 482.4L672 482.4" fill="none" stroke="#1414ff" stroke-width="1.2" stroke-dasharray="4 1 1 1" />
<circle cx="407" cy="459" r="4.6" fill="#ffffff" stroke="#1414ff" stroke-width="1.1"/>
<path d="M402.4 459A4.6 4.6 0 0 0 411.6 459Z" fill="#d8ff40"/>
<path d="M402.4 459L411.6 459" stroke="#1414ff" stroke-width="0.8"/>
<circle cx="407" cy="459" r="4.6" fill="none" stroke="#1414ff" stroke-width="1.1"/>
<text x="407" y="458.2" font-size="3.33" fill="#1414ff" font-weight="bold" text-anchor="middle"  stroke="#1414ff" stroke-width=".35">1</text>
<text x="407" y="462.2" font-size="2.81" fill="#00f000" font-weight="bold" text-anchor="middle"  stroke="#00f000" stroke-width=".35">A3-1</text>
<path d="M411 456L416 452L420 451" fill="none" stroke="#1414ff" stroke-width="1" />
<rect x="416.5" y="446" width="5" height="9" fill="none" stroke="#1414ff" stroke-width="1" stroke-dasharray="1.3 1"/>
<text x="378" y="455" font-size="2.81" fill="#00f000" font-weight="bold" text-anchor="middle"  stroke="#00f000" stroke-width=".35">sızdırmazlık</text>
<path d="M384 456L396 456" stroke="#ff6b6b" stroke-width="0.6"/>
<path d="M415.5 324.2L456.3 275L499 323.7" fill="none" stroke="#7a5a20" stroke-width="4.2" />
<path d="M415.5 324.2L456.3 275L499 323.7" fill="none" stroke="#ffff00" stroke-width="2.8" />
<path d="M413 324.5L454 273L458 273L501 323" fill="none" stroke="#7d3a3a" stroke-width="0.7" />
<rect x="478" y="290" width="5" height="3" fill="#222"/>
<path d="M440.5 296L440.5 315" stroke="#858585" stroke-width="1.6"/>
<path d="M459 298L459 315" stroke="#858585" stroke-width="1.6"/>
<path d="M430 316L430 326" stroke="#858585" stroke-width="1.3"/>
<path d="M428.5 310L428.5 324" stroke="#0c0" stroke-width="1"/>
<path d="M431.5 314L431.5 462" stroke="#ff1a1a" stroke-width="1"/>
<rect x="463.5" y="313" width="6" height="10.5" fill="none" stroke="#ff10ff" stroke-width="1.2"/>
<path d="M466.5 313L466.5 323.5" stroke="#ff10ff" stroke-width="0.8"/>
<path d="M427.5 325.3L512 325.3" stroke="#858585" stroke-width="2.2"/>
<path d="M427.5 326.6L512 326.6" stroke="#1414ff" stroke-width="0.8" stroke-dasharray="1 1.2"/>
<path d="M540 315.8L619 315.8" stroke="#858585" stroke-width="1.6"/>
<path d="M540 317L619 317" stroke="#1414ff" stroke-width="0.7" stroke-dasharray="1 1.2"/>
<path d="M427.5 326L427.5 463" stroke="#858585" stroke-width="1.8"/>
<path d="M425.9 326L425.9 463" stroke="#ff1a1a" stroke-width="0.8"/>
<path d="M485.5 326L485.5 463" stroke="#858585" stroke-width="1.8"/>
<path d="M483.9 326L483.9 463" stroke="#ff1a1a" stroke-width="0.8"/>
<path d="M512.7 326L512.7 463" stroke="#858585" stroke-width="1.8"/>
<path d="M511.1 326L511.1 463" stroke="#ff1a1a" stroke-width="0.8"/>
<path d="M539 316L539 463" stroke="#858585" stroke-width="1.8"/>
<path d="M537.4 326L537.4 463" stroke="#ff1a1a" stroke-width="0.8"/>
<path d="M566.2 316L566.2 463" stroke="#858585" stroke-width="1.8"/>
<path d="M564.6 326L564.6 463" stroke="#ff1a1a" stroke-width="0.8"/>
<path d="M591.5 316L591.5 463" stroke="#858585" stroke-width="1.8"/>
<path d="M589.9 326L589.9 463" stroke="#ff1a1a" stroke-width="0.8"/>
<path d="M618.8 316L618.8 463" stroke="#858585" stroke-width="1.8"/>
<path d="M617.2 326L617.2 463" stroke="#ff1a1a" stroke-width="0.8"/>
<path d="M446 326L446 463" stroke="#7d3a3a" stroke-width="0.8"/>
<path d="M454.2 326L454.2 463" stroke="#7d3a3a" stroke-width="0.8"/>
<path d="M475 326L475 411" stroke="#7d3a3a" stroke-width="0.8"/>
<path d="M470 326L470 438" stroke="#858585" stroke-width="1"/>
<path d="M427.5 347L619 347" stroke="#2030e0" stroke-width="1.9"/>
<path d="M427.5 345.7L619 345.7" stroke="#1414ff" stroke-width="0.6" stroke-dasharray="1.2 1"/>
<path d="M430 349.2L619 349.2" stroke="#6a70c0" stroke-width="0.8"/>
<path d="M430 350.3L619 350.3" stroke="#7d3a3a" stroke-width="0.6"/>
<rect x="445" y="347.9" width="2" height="2.2" fill="none" stroke="#1414ff" stroke-width="0.6"/>
<rect x="484.5" y="347.9" width="2" height="2.2" fill="none" stroke="#1414ff" stroke-width="0.6"/>
<rect x="511.7" y="347.9" width="2" height="2.2" fill="none" stroke="#1414ff" stroke-width="0.6"/>
<path d="M486 351.1L512 351.1" stroke="#ff1a1a" stroke-width="0.9"/>
<path d="M427.5 368.3L619 368.3" stroke="#2030e0" stroke-width="1.9"/>
<path d="M427.5 367L619 367" stroke="#1414ff" stroke-width="0.6" stroke-dasharray="1.2 1"/>
<path d="M430 370.5L619 370.5" stroke="#6a70c0" stroke-width="0.8"/>
<path d="M430 371.6L619 371.6" stroke="#7d3a3a" stroke-width="0.6"/>
<rect x="445" y="369.2" width="2" height="2.2" fill="none" stroke="#1414ff" stroke-width="0.6"/>
<rect x="484.5" y="369.2" width="2" height="2.2" fill="none" stroke="#1414ff" stroke-width="0.6"/>
<rect x="511.7" y="369.2" width="2" height="2.2" fill="none" stroke="#1414ff" stroke-width="0.6"/>
<path d="M486 372.4L512 372.4" stroke="#ff1a1a" stroke-width="0.9"/>
<path d="M427.5 389.7L619 389.7" stroke="#2030e0" stroke-width="1.9"/>
<path d="M427.5 388.4L619 388.4" stroke="#1414ff" stroke-width="0.6" stroke-dasharray="1.2 1"/>
<path d="M430 391.9L619 391.9" stroke="#6a70c0" stroke-width="0.8"/>
<path d="M430 393L619 393" stroke="#7d3a3a" stroke-width="0.6"/>
<rect x="445" y="390.6" width="2" height="2.2" fill="none" stroke="#1414ff" stroke-width="0.6"/>
<rect x="484.5" y="390.6" width="2" height="2.2" fill="none" stroke="#1414ff" stroke-width="0.6"/>
<rect x="511.7" y="390.6" width="2" height="2.2" fill="none" stroke="#1414ff" stroke-width="0.6"/>
<path d="M486 393.8L512 393.8" stroke="#ff1a1a" stroke-width="0.9"/>
<path d="M427.5 411L619 411" stroke="#858585" stroke-width="2.6"/>
<path d="M427.5 412.6L672 412.6" stroke="#1414ff" stroke-width="0.7" stroke-dasharray="1.2 1"/>
<path d="M427.5 414.5L655 414.5" stroke="#858585" stroke-width="1.6"/>
<path d="M427.5 409L619 409" stroke="#7d3a3a" stroke-width="0.8"/>
<path d="M427.5 439.3L671 439.3" stroke="#2030e0" stroke-width="1.9"/>
<path d="M427.5 437.7L671 437.7" stroke="#1414ff" stroke-width="0.6" stroke-dasharray="1.2 1"/>
<path d="M427.5 441L660 441" stroke="#858585" stroke-width="1.2"/>
<path d="M419 463.3L657 463.3" stroke="#1a2ae0" stroke-width="2.6"/>
<path d="M427 461.2L672 461.2" stroke="#7d3a3a" stroke-width="0.9"/>
<rect x="445.8" y="331.5" width="7.4" height="14" fill="none" stroke="#ff10ff" stroke-width="1.2"/>
<path d="M449.5 331.5L449.5 345.5" stroke="#ff10ff" stroke-width="0.9"/>
<rect x="458.5" y="335" width="10.5" height="10.5" fill="url(#hh)"/>
<rect x="470.5" y="338" width="4.5" height="6" fill="none" stroke="#858585" stroke-width="1.2"/>
<path d="M434.5 336L434.5 346" stroke="#7d3a3a" stroke-width="1.2"/>
<rect x="433" y="337" width="4" height="8" fill="#9a6a6a"/>
<text x="441.5" y="338" font-size="2.81" fill="#00f000" font-weight="bold" text-anchor="middle"  stroke="#00f000" stroke-width=".35">WC</text>
<text x="455" y="343" font-size="2.81" fill="#00f000" font-weight="bold"  stroke="#00f000" stroke-width=".35">120</text>
<text x="443.5" y="335" font-size="2.81" fill="#00f000" font-weight="bold"  stroke="#00f000" stroke-width=".35">90</text>
<text x="499" y="335" font-size="2.81" fill="#00f000" font-weight="bold" text-anchor="middle"  stroke="#00f000" stroke-width=".35">YATAK OD.</text>
<text x="499" y="338.5" font-size="2.81" fill="#00f000" font-weight="bold" text-anchor="middle"  stroke="#00f000" stroke-width=".35">24 m²</text>
<text x="499" y="342" font-size="2.81" fill="#00f000" font-weight="bold" text-anchor="middle"  stroke="#00f000" stroke-width=".35">+13.30</text>
<text x="484" y="340" font-size="3.12" fill="#00f000" font-weight="bold"  stroke="#00f000" stroke-width=".35">I</text>
<rect x="445.8" y="352.8" width="7.4" height="14" fill="none" stroke="#ff10ff" stroke-width="1.2"/>
<path d="M449.5 352.8L449.5 366.8" stroke="#ff10ff" stroke-width="0.9"/>
<rect x="458.5" y="356.3" width="10.5" height="10.5" fill="url(#hh)"/>
<rect x="470.5" y="359.3" width="4.5" height="6" fill="none" stroke="#858585" stroke-width="1.2"/>
<path d="M434.5 357.3L434.5 367.3" stroke="#7d3a3a" stroke-width="1.2"/>
<rect x="433" y="358.3" width="4" height="8" fill="#9a6a6a"/>
<text x="441.5" y="359.3" font-size="2.81" fill="#00f000" font-weight="bold" text-anchor="middle"  stroke="#00f000" stroke-width=".35">WC</text>
<text x="455" y="364.3" font-size="2.81" fill="#00f000" font-weight="bold"  stroke="#00f000" stroke-width=".35">120</text>
<text x="443.5" y="356.3" font-size="2.81" fill="#00f000" font-weight="bold"  stroke="#00f000" stroke-width=".35">90</text>
<text x="499" y="356.3" font-size="2.81" fill="#00f000" font-weight="bold" text-anchor="middle"  stroke="#00f000" stroke-width=".35">YATAK OD.</text>
<text x="499" y="359.8" font-size="2.81" fill="#00f000" font-weight="bold" text-anchor="middle"  stroke="#00f000" stroke-width=".35">24 m²</text>
<text x="499" y="363.3" font-size="2.81" fill="#00f000" font-weight="bold" text-anchor="middle"  stroke="#00f000" stroke-width=".35">+10.22</text>
<text x="484" y="361.3" font-size="3.12" fill="#00f000" font-weight="bold"  stroke="#00f000" stroke-width=".35">I</text>
<rect x="445.8" y="374.2" width="7.4" height="14" fill="none" stroke="#ff10ff" stroke-width="1.2"/>
<path d="M449.5 374.2L449.5 388.2" stroke="#ff10ff" stroke-width="0.9"/>
<rect x="458.5" y="377.7" width="10.5" height="10.5" fill="url(#hh)"/>
<rect x="470.5" y="380.7" width="4.5" height="6" fill="none" stroke="#858585" stroke-width="1.2"/>
<path d="M434.5 378.7L434.5 388.7" stroke="#7d3a3a" stroke-width="1.2"/>
<rect x="433" y="379.7" width="4" height="8" fill="#9a6a6a"/>
<text x="441.5" y="380.7" font-size="2.81" fill="#00f000" font-weight="bold" text-anchor="middle"  stroke="#00f000" stroke-width=".35">WC</text>
<text x="455" y="385.7" font-size="2.81" fill="#00f000" font-weight="bold"  stroke="#00f000" stroke-width=".35">120</text>
<text x="443.5" y="377.7" font-size="2.81" fill="#00f000" font-weight="bold"  stroke="#00f000" stroke-width=".35">90</text>
<text x="499" y="377.7" font-size="2.81" fill="#00f000" font-weight="bold" text-anchor="middle"  stroke="#00f000" stroke-width=".35">YATAK OD.</text>
<text x="499" y="381.2" font-size="2.81" fill="#00f000" font-weight="bold" text-anchor="middle"  stroke="#00f000" stroke-width=".35">24 m²</text>
<text x="499" y="384.7" font-size="2.81" fill="#00f000" font-weight="bold" text-anchor="middle"  stroke="#00f000" stroke-width=".35">+7.12</text>
<text x="484" y="382.7" font-size="3.12" fill="#00f000" font-weight="bold"  stroke="#00f000" stroke-width=".35">I</text>
<rect x="547.8" y="331.7" width="9.6" height="13.8" fill="none" stroke="#ff10ff" stroke-width="1.3"/>
<path d="M552.6 331.7L552.6 345.5" stroke="#ff10ff" stroke-width="0.9"/>
<path d="M550.2 333L550.2 344.5" stroke="#ff10ff" stroke-width="0.6"/>
<path d="M555 333L555 344.5" stroke="#ff10ff" stroke-width="0.6"/>
<rect x="574.2" y="331.7" width="9.6" height="13.8" fill="none" stroke="#ff10ff" stroke-width="1.3"/>
<path d="M579 331.7L579 345.5" stroke="#ff10ff" stroke-width="0.9"/>
<path d="M576.6 333L576.6 344.5" stroke="#ff10ff" stroke-width="0.6"/>
<path d="M581.4 333L581.4 344.5" stroke="#ff10ff" stroke-width="0.6"/>
<rect x="600.4" y="331.7" width="9.6" height="13.8" fill="none" stroke="#ff10ff" stroke-width="1.3"/>
<path d="M605.2 331.7L605.2 345.5" stroke="#ff10ff" stroke-width="0.9"/>
<path d="M602.8 333L602.8 344.5" stroke="#ff10ff" stroke-width="0.6"/>
<path d="M607.6 333L607.6 344.5" stroke="#ff10ff" stroke-width="0.6"/>
<rect x="525" y="332" width="6" height="10" fill="none" stroke="#858585" stroke-width="1.3"/>
<path d="M526.5 338L529.5 334" fill="none" stroke="#858585" stroke-width="1.1" />
<rect x="523" y="342" width="11" height="3" fill="#8a8a8a"/>
<text x="519" y="340" font-size="2.81" fill="#00f000" font-weight="bold" text-anchor="middle"  stroke="#00f000" stroke-width=".35">MUTF.</text>
<text x="519" y="343.5" font-size="2.81" fill="#00f000" font-weight="bold" text-anchor="middle"  stroke="#00f000" stroke-width=".35">+17.3</text>
<text x="560" y="340.5" font-size="2.81" fill="#00f000" font-weight="bold" text-anchor="middle"  stroke="#00f000" stroke-width=".35">SALON</text>
<text x="607" y="340.5" font-size="2.81" fill="#00f000" font-weight="bold" text-anchor="middle"  stroke="#00f000" stroke-width=".35">YATAK</text>
<text x="570" y="343" font-size="2.81" fill="#00f000" font-weight="bold" text-anchor="middle"  stroke="#00f000" stroke-width=".35">22 m²</text>
<rect x="547.8" y="353" width="9.6" height="13.8" fill="none" stroke="#ff10ff" stroke-width="1.3"/>
<path d="M552.6 353L552.6 366.8" stroke="#ff10ff" stroke-width="0.9"/>
<path d="M550.2 354.3L550.2 365.8" stroke="#ff10ff" stroke-width="0.6"/>
<path d="M555 354.3L555 365.8" stroke="#ff10ff" stroke-width="0.6"/>
<rect x="574.2" y="353" width="9.6" height="13.8" fill="none" stroke="#ff10ff" stroke-width="1.3"/>
<path d="M579 353L579 366.8" stroke="#ff10ff" stroke-width="0.9"/>
<path d="M576.6 354.3L576.6 365.8" stroke="#ff10ff" stroke-width="0.6"/>
<path d="M581.4 354.3L581.4 365.8" stroke="#ff10ff" stroke-width="0.6"/>
<rect x="524.5" y="353.3" width="6" height="13" fill="none" stroke="#ff10ff" stroke-width="1.1"/>
<rect x="525.5" y="354.3" width="4" height="8" fill="none" stroke="#858585" stroke-width="1.2"/>
<path d="M526.1 360.3L528.9 356.3" fill="none" stroke="#858585" stroke-width="1" />
<rect x="599.5" y="353.3" width="6" height="13" fill="none" stroke="#ff10ff" stroke-width="1.1"/>
<rect x="600.5" y="354.3" width="4" height="8" fill="none" stroke="#858585" stroke-width="1.2"/>
<path d="M601.1 360.3L603.9 356.3" fill="none" stroke="#858585" stroke-width="1" />
<rect x="543" y="362.3" width="5" height="2.5" fill="#8a8a8a"/>
<text x="537" y="357.3" font-size="3.12" fill="#555" >o-</text>
<rect x="586" y="362.3" width="5" height="2.5" fill="#8a8a8a"/>
<text x="580" y="357.3" font-size="3.12" fill="#555" >o-</text>
<rect x="559" y="363.7" width="13" height="1.6" fill="#555"/>
<text x="519" y="364.3" font-size="2.81" fill="#00f000" font-weight="bold" text-anchor="middle"  stroke="#00f000" stroke-width=".35">BALKON</text>
<text x="535" y="364.3" font-size="2.81" fill="#00f000" font-weight="bold" text-anchor="middle"  stroke="#00f000" stroke-width=".35">+10.2</text>
<text x="596" y="364.3" font-size="2.81" fill="#00f000" font-weight="bold" text-anchor="middle"  stroke="#00f000" stroke-width=".35">BALK.</text>
<text x="612" y="364.3" font-size="2.81" fill="#00f000" font-weight="bold" text-anchor="middle"  stroke="#00f000" stroke-width=".35">+10.2</text>
<text x="553" y="358.3" font-size="2.81" fill="#00f000" font-weight="bold" text-anchor="middle"  stroke="#00f000" stroke-width=".35">oda</text>
<text x="579" y="358.3" font-size="2.81" fill="#00f000" font-weight="bold" text-anchor="middle"  stroke="#00f000" stroke-width=".35">oda</text>
<rect x="547.8" y="374.4" width="9.6" height="13.8" fill="none" stroke="#ff10ff" stroke-width="1.3"/>
<path d="M552.6 374.4L552.6 388.2" stroke="#ff10ff" stroke-width="0.9"/>
<path d="M550.2 375.7L550.2 387.2" stroke="#ff10ff" stroke-width="0.6"/>
<path d="M555 375.7L555 387.2" stroke="#ff10ff" stroke-width="0.6"/>
<rect x="574.2" y="374.4" width="9.6" height="13.8" fill="none" stroke="#ff10ff" stroke-width="1.3"/>
<path d="M579 374.4L579 388.2" stroke="#ff10ff" stroke-width="0.9"/>
<path d="M576.6 375.7L576.6 387.2" stroke="#ff10ff" stroke-width="0.6"/>
<path d="M581.4 375.7L581.4 387.2" stroke="#ff10ff" stroke-width="0.6"/>
<rect x="524.5" y="374.7" width="6" height="13" fill="none" stroke="#ff10ff" stroke-width="1.1"/>
<rect x="525.5" y="375.7" width="4" height="8" fill="none" stroke="#858585" stroke-width="1.2"/>
<path d="M526.1 381.7L528.9 377.7" fill="none" stroke="#858585" stroke-width="1" />
<rect x="599.5" y="374.7" width="6" height="13" fill="none" stroke="#ff10ff" stroke-width="1.1"/>
<rect x="600.5" y="375.7" width="4" height="8" fill="none" stroke="#858585" stroke-width="1.2"/>
<path d="M601.1 381.7L603.9 377.7" fill="none" stroke="#858585" stroke-width="1" />
<rect x="543" y="383.7" width="5" height="2.5" fill="#8a8a8a"/>
<text x="537" y="378.7" font-size="3.12" fill="#555" >o-</text>
<rect x="586" y="383.7" width="5" height="2.5" fill="#8a8a8a"/>
<text x="580" y="378.7" font-size="3.12" fill="#555" >o-</text>
<rect x="559" y="385.1" width="13" height="1.6" fill="#555"/>
<text x="519" y="385.7" font-size="2.81" fill="#00f000" font-weight="bold" text-anchor="middle"  stroke="#00f000" stroke-width=".35">BALKON</text>
<text x="535" y="385.7" font-size="2.81" fill="#00f000" font-weight="bold" text-anchor="middle"  stroke="#00f000" stroke-width=".35">+7.1</text>
<text x="596" y="385.7" font-size="2.81" fill="#00f000" font-weight="bold" text-anchor="middle"  stroke="#00f000" stroke-width=".35">BALK.</text>
<text x="612" y="385.7" font-size="2.81" fill="#00f000" font-weight="bold" text-anchor="middle"  stroke="#00f000" stroke-width=".35">+7.1</text>
<text x="553" y="379.7" font-size="2.81" fill="#00f000" font-weight="bold" text-anchor="middle"  stroke="#00f000" stroke-width=".35">oda</text>
<text x="579" y="379.7" font-size="2.81" fill="#00f000" font-weight="bold" text-anchor="middle"  stroke="#00f000" stroke-width=".35">oda</text>
<rect x="524.5" y="396" width="6.5" height="12" fill="none" stroke="#858585" stroke-width="1.3"/>
<path d="M526.1 403L529.1 398.5" fill="none" stroke="#858585" stroke-width="1.1" />
<rect x="523" y="406" width="9.5" height="2.5" fill="#8f8f8f"/>
<text x="527.5" y="409" font-size="2.81" fill="#00f000" font-weight="bold" text-anchor="middle"  stroke="#00f000" stroke-width=".35">+3.4</text>
<rect x="543" y="396" width="6.5" height="12" fill="none" stroke="#858585" stroke-width="1.3"/>
<path d="M544.6 403L547.6 398.5" fill="none" stroke="#858585" stroke-width="1.1" />
<rect x="541.5" y="406" width="9.5" height="2.5" fill="#8f8f8f"/>
<text x="546" y="409" font-size="2.81" fill="#00f000" font-weight="bold" text-anchor="middle"  stroke="#00f000" stroke-width=".35">+3.4</text>
<rect x="573" y="396" width="6.5" height="12" fill="none" stroke="#858585" stroke-width="1.3"/>
<path d="M574.6 403L577.6 398.5" fill="none" stroke="#858585" stroke-width="1.1" />
<rect x="571.5" y="406" width="9.5" height="2.5" fill="#8f8f8f"/>
<text x="576" y="409" font-size="2.81" fill="#00f000" font-weight="bold" text-anchor="middle"  stroke="#00f000" stroke-width=".35">+3.4</text>
<rect x="599.5" y="396" width="6.5" height="12" fill="none" stroke="#858585" stroke-width="1.3"/>
<path d="M601.1 403L604.1 398.5" fill="none" stroke="#858585" stroke-width="1.1" />
<rect x="598" y="406" width="9.5" height="2.5" fill="#8f8f8f"/>
<text x="602.5" y="409" font-size="2.81" fill="#00f000" font-weight="bold" text-anchor="middle"  stroke="#00f000" stroke-width=".35">+3.4</text>
<text x="519" y="406.5" font-size="2.81" fill="#00f000" font-weight="bold" text-anchor="middle"  stroke="#00f000" stroke-width=".35">BLK</text>
<text x="537" y="406.5" font-size="2.81" fill="#00f000" font-weight="bold" text-anchor="middle"  stroke="#00f000" stroke-width=".35">BLK</text>
<text x="556" y="406.5" font-size="2.81" fill="#00f000" font-weight="bold" text-anchor="middle"  stroke="#00f000" stroke-width=".35">BLK</text>
<text x="567" y="406.5" font-size="2.81" fill="#00f000" font-weight="bold" text-anchor="middle"  stroke="#00f000" stroke-width=".35">BLK</text>
<text x="586" y="406.5" font-size="2.81" fill="#00f000" font-weight="bold" text-anchor="middle"  stroke="#00f000" stroke-width=".35">BLK</text>
<text x="612" y="406.5" font-size="2.81" fill="#00f000" font-weight="bold" text-anchor="middle"  stroke="#00f000" stroke-width=".35">BLK</text>
<rect x="445.8" y="395.5" width="7.4" height="14" fill="none" stroke="#ff10ff" stroke-width="1.2"/>
<path d="M449.5 395.5L449.5 409.5" stroke="#ff10ff" stroke-width="0.9"/>
<rect x="458.5" y="399" width="7.5" height="10" fill="url(#hh)"/>
<rect x="469" y="397" width="6" height="4" fill="none" stroke="#858585" stroke-width="1"/>
<rect x="468" y="404" width="8" height="4" fill="#cfcfcf"/>
<text x="499" y="399" font-size="2.81" fill="#00f000" font-weight="bold" text-anchor="middle"  stroke="#00f000" stroke-width=".35">YATAK OD.</text>
<text x="499" y="402.5" font-size="2.81" fill="#00f000" font-weight="bold" text-anchor="middle"  stroke="#00f000" stroke-width=".35">24 m²</text>
<text x="499" y="406" font-size="2.81" fill="#00f000" font-weight="bold" text-anchor="middle"  stroke="#00f000" stroke-width=".35">+3.40</text>
<path d="M520 407.5L619 407.5" stroke="#ff1a1a" stroke-width="0.8"/>
<rect x="445.8" y="423.5" width="7.4" height="14" fill="none" stroke="#ff10ff" stroke-width="1.2"/>
<path d="M449.5 423.5L449.5 437.5" stroke="#ff10ff" stroke-width="0.9"/>
<rect x="458.5" y="427" width="8.5" height="10.5" fill="url(#hh)"/>
<rect x="476.7" y="423" width="6.3" height="14" fill="none" stroke="#ff10ff" stroke-width="1.4"/>
<rect x="484.5" y="423" width="11.5" height="14" fill="#7c7c7c"/>
<path d="M488 423L488 437" stroke="#555" stroke-width="0.8"/>
<path d="M492 423L492 437" stroke="#555" stroke-width="0.8"/>
<rect x="496" y="424.5" width="16" height="12.5" fill="none" stroke="#ff1a1a" stroke-width="1.1"/>
<path d="M504 424.5L504 437" stroke="#ff1a1a" stroke-width="1"/>
<text x="505" y="433" font-size="2.81" fill="#00f000" font-weight="bold" text-anchor="middle"  stroke="#00f000" stroke-width=".35">ASANSÖR</text>
<rect x="514.5" y="421" width="3.5" height="16" fill="none" stroke="#858585" stroke-width="1"/>
<path d="M514.5 435L518 435" stroke="#858585" stroke-width="0.7"/>
<path d="M514.5 432L518 432" stroke="#858585" stroke-width="0.7"/>
<path d="M514.5 429L518 429" stroke="#858585" stroke-width="0.7"/>
<path d="M514.5 426L518 426" stroke="#858585" stroke-width="0.7"/>
<path d="M514.5 423L518 423" stroke="#858585" stroke-width="0.7"/>
<rect x="541" y="422.5" width="23.3" height="14.5" fill="none" stroke="#ff10ff" stroke-width="1.4"/>
<path d="M552.6 422.5L552.6 437" stroke="#ff10ff" stroke-width="1"/>
<path d="M544 433L549 427" fill="none" stroke="#858585" stroke-width="1.6" />
<path d="M556 433L561 427" fill="none" stroke="#858585" stroke-width="1.6" />
<text x="547" y="435.5" font-size="2.81" fill="#00f000" font-weight="bold" text-anchor="middle"  stroke="#00f000" stroke-width=".35">GİRİŞ</text>
<text x="508" y="421" font-size="2.81" fill="#00f000" font-weight="bold" text-anchor="middle"  stroke="#00f000" stroke-width=".35">+0.05</text>
<text x="547" y="421" font-size="2.81" fill="#00f000" font-weight="bold" text-anchor="middle"  stroke="#00f000" stroke-width=".35">+0.05</text>
<text x="592" y="422" font-size="3.12" fill="#00f000" font-weight="bold" text-anchor="middle"  stroke="#00f000" stroke-width=".35">AA</text>
<text x="592" y="432" font-size="2.81" fill="#00f000" font-weight="bold" text-anchor="middle"  stroke="#00f000" stroke-width=".35">LOBİ</text>
<text x="592" y="435.5" font-size="2.81" fill="#00f000" font-weight="bold" text-anchor="middle"  stroke="#00f000" stroke-width=".35">+0.00</text>
<path d="M526 417L526 438" stroke="#0a0" stroke-width="0.9"/>
<path d="M567 417L567 462" stroke="#0a0" stroke-width="0.9"/>
<path d="M513 415.8L619 415.8" stroke="#ff1a1a" stroke-width="0.8"/>
<path d="M519.5 414L519.5 438" stroke="#ff1a1a" stroke-width="0.9"/>
<path d="M541 414L541 422" stroke="#ff1a1a" stroke-width="0.9"/>
<path d="M460.8 441L460.8 462" stroke="#ff1a1a" stroke-width="1.1"/>
<path d="M484.3 441L484.3 462" stroke="#ff1a1a" stroke-width="1.1"/>
<path d="M511.5 441L511.5 462" stroke="#ff1a1a" stroke-width="1.1"/>
<path d="M537.8 441L537.8 462" stroke="#ff1a1a" stroke-width="1.1"/>
<path d="M565 441L565 462" stroke="#ff1a1a" stroke-width="1.1"/>
<path d="M617.6 441L617.6 462" stroke="#ff1a1a" stroke-width="1.1"/>
<path d="M470 441L470 462" stroke="#7d3a3a" stroke-width="0.9"/>
<path d="M584.5 441L584.5 462" stroke="#858585" stroke-width="1.2"/>
<path d="M589 441L589 462" stroke="#7d3a3a" stroke-width="0.8"/>
<path d="M446 442L446 482" stroke="#aaa" stroke-width="0.7" stroke-dasharray="3 1.5"/>
<path d="M454 442L454 482" stroke="#aaa" stroke-width="0.7" stroke-dasharray="3 1.5"/>
<path d="M525 442L525 482" stroke="#aaa" stroke-width="0.7" stroke-dasharray="3 1.5"/>
<path d="M534 442L534 482" stroke="#aaa" stroke-width="0.7" stroke-dasharray="3 1.5"/>
<path d="M596 442L596 482" stroke="#aaa" stroke-width="0.7" stroke-dasharray="3 1.5"/>
<path d="M607 442L607 482" stroke="#aaa" stroke-width="0.7" stroke-dasharray="3 1.5"/>
<text x="441" y="458" font-size="2.81" fill="#00f000" font-weight="bold" text-anchor="middle"  stroke="#00f000" stroke-width=".35">DEPO</text>
<text x="441" y="461" font-size="2.81" fill="#00f000" font-weight="bold" text-anchor="middle"  stroke="#00f000" stroke-width=".35">12m²</text>
<text x="500" y="456" font-size="2.81" fill="#00f000" font-weight="bold" text-anchor="middle"  stroke="#00f000" stroke-width=".35">TEKNİK HACİM</text>
<text x="500" y="460" font-size="2.81" fill="#00f000" font-weight="bold" text-anchor="middle"  stroke="#00f000" stroke-width=".35">45 m²</text>
<text x="548" y="457" font-size="2.81" fill="#00f000" font-weight="bold" text-anchor="middle"  stroke="#00f000" stroke-width=".35">OTOPARK</text>
<text x="548" y="461" font-size="2.81" fill="#00f000" font-weight="bold" text-anchor="middle"  stroke="#00f000" stroke-width=".35">-3.20</text>
<text x="578" y="457.5" font-size="2.81" fill="#00f000" font-weight="bold" text-anchor="middle"  stroke="#00f000" stroke-width=".35">yangın d.</text>
<path d="M571 462L571 457L576 457" fill="none" stroke="#ff6b6b" stroke-width="0.7" />
<text x="623" y="460.5" font-size="2.81" fill="#00f000" font-weight="bold" text-anchor="middle"  stroke="#00f000" stroke-width=".35">-3.2</text>
<text x="464.5" y="451" font-size="3.12" fill="#00f000" font-weight="bold"  stroke="#00f000" stroke-width=".35">I</text>
<text x="474" y="452" font-size="3.12" fill="#00f000" font-weight="bold"  stroke="#00f000" stroke-width=".35">I</text>
<path d="M517 444L520 446L524 444.5L526 446.5" fill="none" stroke="#858585" stroke-width="1" />
<path d="M519.5 464L519.5 477L587.6 477L587.6 464" fill="none" stroke="#7d3a3a" stroke-width="1.1" />
<path d="M521.3 464L521.3 475.2L585.8 475.2L585.8 464" fill="none" stroke="#7d3a3a" stroke-width="0.7" />
<path d="M511 471.4L590 471.4" stroke="#ff6b6b" stroke-width="0.8"/>
<path d="M617 473L661 473" stroke="#ff6b6b" stroke-width="0.8"/>
<path d="M512.7 464L512.7 474" stroke="#ff6b6b" stroke-width="0.8"/>
<circle cx="512.7" cy="471.4" r="0.8" fill="none" stroke="#7d3a3a" stroke-width="0.6"/>
<path d="M536 464L536 474" stroke="#ff6b6b" stroke-width="0.8"/>
<circle cx="536" cy="471.4" r="0.8" fill="none" stroke="#7d3a3a" stroke-width="0.6"/>
<path d="M545 464L545 474" stroke="#ff6b6b" stroke-width="0.8"/>
<circle cx="545" cy="471.4" r="0.8" fill="none" stroke="#7d3a3a" stroke-width="0.6"/>
<path d="M566.2 464L566.2 474" stroke="#ff6b6b" stroke-width="0.8"/>
<circle cx="566.2" cy="471.4" r="0.8" fill="none" stroke="#7d3a3a" stroke-width="0.6"/>
<path d="M587.6 464L587.6 474" stroke="#ff6b6b" stroke-width="0.8"/>
<circle cx="587.6" cy="471.4" r="0.8" fill="none" stroke="#7d3a3a" stroke-width="0.6"/>
<path d="M596 464L596 474" stroke="#ff6b6b" stroke-width="0.8"/>
<circle cx="596" cy="471.4" r="0.8" fill="none" stroke="#7d3a3a" stroke-width="0.6"/>
<path d="M618.8 464L618.8 474" stroke="#ff6b6b" stroke-width="0.8"/>
<circle cx="618.8" cy="473" r="0.8" fill="none" stroke="#7d3a3a" stroke-width="0.6"/>
<path d="M637 464L637 474" stroke="#ff6b6b" stroke-width="0.8"/>
<circle cx="637" cy="473" r="0.8" fill="none" stroke="#7d3a3a" stroke-width="0.6"/>
<path d="M657 464L657 474" stroke="#ff6b6b" stroke-width="0.8"/>
<circle cx="657" cy="473" r="0.8" fill="none" stroke="#7d3a3a" stroke-width="0.6"/>
<text x="524" y="470.3" font-size="2.81" fill="#00f000" font-weight="bold" text-anchor="middle"  stroke="#00f000" stroke-width=".35">470</text>
<text x="540" y="470.3" font-size="2.81" fill="#00f000" font-weight="bold" text-anchor="middle"  stroke="#00f000" stroke-width=".35">245</text>
<text x="555" y="470.3" font-size="2.81" fill="#00f000" font-weight="bold" text-anchor="middle"  stroke="#00f000" stroke-width=".35">290</text>
<text x="576" y="470.3" font-size="2.81" fill="#00f000" font-weight="bold" text-anchor="middle"  stroke="#00f000" stroke-width=".35">290</text>
<text x="592" y="470.3" font-size="2.81" fill="#00f000" font-weight="bold" text-anchor="middle"  stroke="#00f000" stroke-width=".35">380</text>
<text x="606" y="472" font-size="2.81" fill="#00f000" font-weight="bold" text-anchor="middle"  stroke="#00f000" stroke-width=".35">380</text>
<text x="627" y="472" font-size="2.81" fill="#00f000" font-weight="bold" text-anchor="middle"  stroke="#00f000" stroke-width=".35">380</text>
<text x="647" y="472" font-size="2.81" fill="#00f000" font-weight="bold" text-anchor="middle"  stroke="#00f000" stroke-width=".35">335</text>
<path d="M619.7 270L647 270L647 304L671.3 304L671.3 332L665 332L665 315L619.7 315Z" fill="url(#hd)" />
<path d="M619.7 270L647 270L647 304" fill="none" stroke="#6a2a2a" stroke-width="1.3" stroke-dasharray="1.2 .8" />
<path d="M644 304L671.3 304" fill="none" stroke="#ff1a1a" stroke-width="1" />
<rect x="622.6" y="316.9" width="41.9" height="7.7" fill="none" stroke="#ff1a1a" stroke-width="1"/>
<rect x="622.6" y="324.6" width="41.9" height="8.8" fill="none" stroke="#ff1a1a" stroke-width="1"/>
<path d="M619 320L664 320" stroke="#7d3a3a" stroke-width="0.9"/>
<rect x="619.7" y="334.4" width="50.6" height="44.6" fill="url(#hg)"/>
<rect x="619.7" y="334.4" width="50.6" height="44.6" fill="none" stroke="#ff1a1a" stroke-width="0.7"/>
<path d="M619.7 338L670.3 338" stroke="#7d3a3a" stroke-width="0.8"/>
<path d="M619.7 351L670.3 351" stroke="#7d3a3a" stroke-width="0.8"/>
<path d="M619.7 365.5L670.3 365.5" stroke="#7d3a3a" stroke-width="0.8"/>
<path d="M619.7 369L670.3 369" stroke="#7d3a3a" stroke-width="0.8"/>
<path d="M620 381.3L671 381.3" stroke="#ff1a1a" stroke-width="0.9"/>
<path d="M620 383L671 383" stroke="#7d3a3a" stroke-width="0.9"/>
<path d="M622.5 383L622.5 438" stroke="#7d3a3a" stroke-width="0.9"/>
<path d="M627 383L627 438" stroke="#7d3a3a" stroke-width="0.9"/>
<path d="M640 383L640 438" stroke="#7d3a3a" stroke-width="0.9"/>
<path d="M655 383L655 438" stroke="#7d3a3a" stroke-width="0.9"/>
<path d="M660 383L660 438" stroke="#7d3a3a" stroke-width="0.9"/>
<path d="M621 383L621 463" stroke="#ff1a1a" stroke-width="1"/>
<path d="M637 383L637 410" stroke="#ff1a1a" stroke-width="0.8"/>
<path d="M651 420L651 462" stroke="#ff1a1a" stroke-width="1"/>
<path d="M635.5 441L635.5 462" stroke="#ff1a1a" stroke-width="1.1"/>
<path d="M639 441L639 462" stroke="#ff1a1a" stroke-width="1.1"/>
<rect x="641.5" y="386.5" width="12" height="14.5" fill="none" stroke="#ff10ff" stroke-width="1.1"/>
<path d="M645.5 386.5L645.5 401" stroke="#ff10ff" stroke-width="0.8"/>
<path d="M649.5 386.5L649.5 401" stroke="#ff10ff" stroke-width="0.8"/>
<rect x="640.5" y="401" width="15.5" height="5" fill="#909090"/>
<rect x="628" y="402" width="10" height="5" fill="#909090"/>
<path d="M620 407.5L657 407.5" stroke="url(#hh)" stroke-width="2"/>
<rect x="626" y="407" width="34" height="4.5" fill="url(#hs)"/>
<rect x="656.5" y="418" width="6.5" height="19.5" fill="none" stroke="#ff10ff" stroke-width="1.2"/>
<rect x="658" y="420" width="4" height="16" fill="none" stroke="#858585" stroke-width="0.9"/>
<path d="M619 411L660 411" stroke="#858585" stroke-width="2"/>
<path d="M640 415L660 415" stroke="#858585" stroke-width="1.3"/>
<text x="634" y="381" font-size="2.81" fill="#00f000" font-weight="bold" text-anchor="middle"  stroke="#00f000" stroke-width=".35">+8.1</text>
<rect x="655" y="385" width="16" height="3" fill="#e8ff50"/>
<text x="655.5" y="387.6" font-size="2.81" fill="#00f000" font-weight="bold"  stroke="#00f000" stroke-width=".35">alüm. doğr.</text>
<path d="M671 388L660 388L656 384" fill="none" stroke="#ff6b6b" stroke-width="0.7" />
<path d="M671 403L663 403L660 408" fill="none" stroke="#ff6b6b" stroke-width="0.7" />
<text x="664" y="400" font-size="2.81" fill="#00f000" font-weight="bold"  stroke="#00f000" stroke-width=".35">korkuluk</text>
<text x="664" y="402.6" font-size="2.81" fill="#00f000" font-weight="bold"  stroke="#00f000" stroke-width=".35">h=110</text>
<text x="667" y="408" font-size="2.81" fill="#00f000" font-weight="bold" text-anchor="middle"  stroke="#00f000" stroke-width=".35">+3.4</text>
<text x="646" y="405" font-size="2.81" fill="#00f000" font-weight="bold" text-anchor="middle"  stroke="#00f000" stroke-width=".35">TERAS</text>
<text x="646" y="409.5" font-size="2.81" fill="#00f000" font-weight="bold" text-anchor="middle"  stroke="#00f000" stroke-width=".35">+3.40</text>
<text x="646" y="430.5" font-size="2.81" fill="#00f000" font-weight="bold" text-anchor="middle"  stroke="#00f000" stroke-width=".35">TEKNİK SERVİS</text>
<text x="646" y="435" font-size="2.81" fill="#00f000" font-weight="bold" text-anchor="middle"  stroke="#00f000" stroke-width=".35">-0.05</text>
<text x="646" y="420" font-size="2.81" fill="#00f000" font-weight="bold" text-anchor="middle"  stroke="#00f000" stroke-width=".35">8.10</text>
<text x="626" y="424" font-size="2.81" fill="#00f000" font-weight="bold" text-anchor="middle"  stroke="#00f000" stroke-width=".35">120</text>
<text x="634" y="424" font-size="2.81" fill="#00f000" font-weight="bold" text-anchor="middle"  stroke="#00f000" stroke-width=".35">90</text>
<path d="M619 425L637 425" stroke="#ff1a1a" stroke-width="0.8"/>
<rect x="656" y="439" width="15" height="5" fill="#8c8c8c"/>
<rect x="658" y="444.5" width="8" height="13.5" fill="none" stroke="#858585" stroke-width="1.2"/>
<rect x="659.5" y="446" width="5" height="6" fill="none" stroke="#858585" stroke-width="0.8"/>
<rect x="657" y="453" width="14" height="9" fill="#9a9a9a"/>
<path d="M661 453L661 462" stroke="#666" stroke-width="0.7"/>
<path d="M666 453L666 462" stroke="#666" stroke-width="0.7"/>
<rect x="511.7" y="272" width="27.3" height="43" fill="none" stroke="#ff1a1a" stroke-width="1"/>
<rect x="511.7" y="272.3" width="27.3" height="2.7" fill="#ffff30"/>
<path d="M510.7 271.2L540 271.2" stroke="#ff10ff" stroke-width="1.2" stroke-dasharray="1 1"/>
<path d="M511.7 279L539 279" stroke="#ff6b6b" stroke-width="0.8"/>
<path d="M511.7 283L539 283" stroke="#ff6b6b" stroke-width="0.8"/>
<path d="M511.7 288L539 288" stroke="#ff6b6b" stroke-width="0.8"/>
<path d="M511.7 293.5L539 293.5" stroke="#ff6b6b" stroke-width="0.8"/>
<path d="M511.7 299L539 299" stroke="#ff6b6b" stroke-width="0.8"/>
<path d="M511.7 304L539 304" stroke="#ff6b6b" stroke-width="0.8"/>
<path d="M511.7 309.5L539 309.5" stroke="#ff6b6b" stroke-width="0.8"/>
<path d="M515.11 275L515.11 315" stroke="#ff6b6b" stroke-width="0.5"/>
<path d="M518.52 275L518.52 315" stroke="#ff6b6b" stroke-width="0.8"/>
<path d="M521.94 275L521.94 315" stroke="#ff6b6b" stroke-width="0.5"/>
<path d="M525.35 275L525.35 315" stroke="#ff6b6b" stroke-width="0.8"/>
<path d="M528.76 275L528.76 315" stroke="#ff6b6b" stroke-width="0.5"/>
<path d="M532.17 275L532.17 315" stroke="#ff6b6b" stroke-width="0.8"/>
<path d="M535.59 275L535.59 315" stroke="#ff6b6b" stroke-width="0.5"/>
<path d="M511.7 275L539 315" fill="none" stroke="#ff6b6b" stroke-width="0.8" />
<path d="M539 275L511.7 315" fill="none" stroke="#ff6b6b" stroke-width="0.8" />
<path d="M511.7 293.5L525.35 275L539 293.5L525.35 315L511.7 293.5" fill="none" stroke="#ff6b6b" stroke-width="0.8" />
<path d="M538.2 272L538.2 315" stroke="#0c0" stroke-width="1.2"/>
<rect x="590.5" y="272" width="29.2" height="43" fill="none" stroke="#ff1a1a" stroke-width="1"/>
<rect x="590.5" y="272.3" width="29.2" height="2.7" fill="#ffff30"/>
<path d="M589.5 271.2L620.7 271.2" stroke="#ff10ff" stroke-width="1.2" stroke-dasharray="1 1"/>
<path d="M590.5 279L619.7 279" stroke="#ff6b6b" stroke-width="0.8"/>
<path d="M590.5 283L619.7 283" stroke="#ff6b6b" stroke-width="0.8"/>
<path d="M590.5 288L619.7 288" stroke="#ff6b6b" stroke-width="0.8"/>
<path d="M590.5 293.5L619.7 293.5" stroke="#ff6b6b" stroke-width="0.8"/>
<path d="M590.5 299L619.7 299" stroke="#ff6b6b" stroke-width="0.8"/>
<path d="M590.5 304L619.7 304" stroke="#ff6b6b" stroke-width="0.8"/>
<path d="M590.5 309.5L619.7 309.5" stroke="#ff6b6b" stroke-width="0.8"/>
<path d="M594.15 275L594.15 315" stroke="#ff6b6b" stroke-width="0.5"/>
<path d="M597.8 275L597.8 315" stroke="#ff6b6b" stroke-width="0.8"/>
<path d="M601.45 275L601.45 315" stroke="#ff6b6b" stroke-width="0.5"/>
<path d="M605.1 275L605.1 315" stroke="#ff6b6b" stroke-width="0.8"/>
<path d="M608.75 275L608.75 315" stroke="#ff6b6b" stroke-width="0.5"/>
<path d="M612.4 275L612.4 315" stroke="#ff6b6b" stroke-width="0.8"/>
<path d="M616.05 275L616.05 315" stroke="#ff6b6b" stroke-width="0.5"/>
<path d="M590.5 275L619.7 315" fill="none" stroke="#ff6b6b" stroke-width="0.8" />
<path d="M619.7 275L590.5 315" fill="none" stroke="#ff6b6b" stroke-width="0.8" />
<path d="M590.5 293.5L605.1 275L619.7 293.5L605.1 315L590.5 293.5" fill="none" stroke="#ff6b6b" stroke-width="0.8" />
<path d="M618.9 272L618.9 315" stroke="#e8e820" stroke-width="1.2"/>
<path d="M512 323.5L520 321L539 311" fill="none" stroke="#ff1a1a" stroke-width="2.4" />
<path d="M512 320L539 308" fill="none" stroke="#ff1a1a" stroke-width="0.8" />
<rect x="511" y="320" width="10" height="4.5" fill="url(#hh)"/>
<path d="M540 287.3L590.5 287.3" stroke="#858585" stroke-width="1.2"/>
<path d="M540 289.3L590.5 289.3" stroke="#858585" stroke-width="0.8"/>
<path d="M542.5 287L542.5 316" stroke="#858585" stroke-width="1"/>
<text x="553.5" y="286" font-size="2.81" fill="#00f000" font-weight="bold"  stroke="#00f000" stroke-width=".35">alüm. kompozit panel</text>
<path d="M552 285.3L548 285.3L543 298" fill="none" stroke="#ff6b6b" stroke-width="0.8" />
<text x="546.5" y="298.5" font-size="2.81" fill="#00f000" font-weight="bold" text-anchor="middle"  stroke="#00f000" stroke-width=".35">+19</text>
<text x="541" y="306" font-size="3.33" fill="#00f000" font-weight="bold"  stroke="#00f000" stroke-width=".35">I</text>
<text x="563" y="309" font-size="2.81" fill="#00f000" font-weight="bold" text-anchor="middle"  stroke="#00f000" stroke-width=".35">TERAS</text>
<text x="563" y="313" font-size="2.81" fill="#00f000" font-weight="bold" text-anchor="middle"  stroke="#00f000" stroke-width=".35">+17.95</text>
<text x="448" y="319" font-size="2.81" fill="#00f000" font-weight="bold" text-anchor="middle"  stroke="#00f000" stroke-width=".35">ÇATI ARASI</text>
<text x="448" y="322.5" font-size="2.81" fill="#00f000" font-weight="bold" text-anchor="middle"  stroke="#00f000" stroke-width=".35">+17.75</text>
<text x="474" y="321.5" font-size="2.81" fill="#00f000" font-weight="bold" text-anchor="middle"  stroke="#00f000" stroke-width=".35">DEPO</text>
<text x="474" y="324.5" font-size="2.81" fill="#00f000" font-weight="bold" text-anchor="middle"  stroke="#00f000" stroke-width=".35">+17.7</text>
<text x="507" y="324.3" font-size="2.81" fill="#00f000" font-weight="bold" text-anchor="middle"  stroke="#00f000" stroke-width=".35">+17.7</text>
<text x="529" y="324" font-size="2.81" fill="#00f000" font-weight="bold" text-anchor="middle"  stroke="#00f000" stroke-width=".35">+17.7</text>
<rect x="450" y="271.4" width="12" height="11.2" fill="none" stroke="#1414ff" stroke-width="1.2" rx="3"/>
<path d="M461 272.5Q464 266 469.3 264" fill="none" stroke="#1414ff" stroke-width="1.1"/>
<circle cx="473.8" cy="263" r="4.5" fill="#ffffff" stroke="#1414ff" stroke-width="1.1"/>
<path d="M469.3 263A4.5 4.5 0 0 0 478.3 263Z" fill="#d8ff40"/>
<path d="M469.3 263L478.3 263" stroke="#1414ff" stroke-width="0.8"/>
<circle cx="473.8" cy="263" r="4.5" fill="none" stroke="#1414ff" stroke-width="1.1"/>
<text x="473.8" y="262.2" font-size="3.33" fill="#1414ff" font-weight="bold" text-anchor="middle"  stroke="#1414ff" stroke-width=".35">1</text>
<text x="473.8" y="266.2" font-size="2.81" fill="#00f000" font-weight="bold" text-anchor="middle"  stroke="#00f000" stroke-width=".35">A3-1</text>
<rect x="533" y="269.9" width="12" height="11.2" fill="none" stroke="#1414ff" stroke-width="1.2" rx="3"/>
<path d="M544 271Q547 265 553 263" fill="none" stroke="#1414ff" stroke-width="1.1"/>
<circle cx="557.5" cy="262" r="4.5" fill="#ffffff" stroke="#1414ff" stroke-width="1.1"/>
<path d="M553 262A4.5 4.5 0 0 0 562 262Z" fill="#d8ff40"/>
<path d="M553 262L562 262" stroke="#1414ff" stroke-width="0.8"/>
<circle cx="557.5" cy="262" r="4.5" fill="none" stroke="#1414ff" stroke-width="1.1"/>
<text x="557.5" y="261.2" font-size="3.33" fill="#1414ff" font-weight="bold" text-anchor="middle"  stroke="#1414ff" stroke-width=".35">1</text>
<text x="557.5" y="265.2" font-size="2.81" fill="#00f000" font-weight="bold" text-anchor="middle"  stroke="#00f000" stroke-width=".35">A3-1</text>
<rect x="613.7" y="269.9" width="12" height="11.2" fill="none" stroke="#1414ff" stroke-width="1.2" rx="3"/>
<path d="M624.7 271Q627.7 265 633.3 263" fill="none" stroke="#1414ff" stroke-width="1.1"/>
<circle cx="637.8" cy="262" r="4.5" fill="#ffffff" stroke="#1414ff" stroke-width="1.1"/>
<path d="M633.3 262A4.5 4.5 0 0 0 642.3 262Z" fill="#d8ff40"/>
<path d="M633.3 262L642.3 262" stroke="#1414ff" stroke-width="0.8"/>
<circle cx="637.8" cy="262" r="4.5" fill="none" stroke="#1414ff" stroke-width="1.1"/>
<text x="637.8" y="261.2" font-size="3.33" fill="#1414ff" font-weight="bold" text-anchor="middle"  stroke="#1414ff" stroke-width=".35">1</text>
<text x="637.8" y="265.2" font-size="2.81" fill="#00f000" font-weight="bold" text-anchor="middle"  stroke="#00f000" stroke-width=".35">A3-1</text>
<rect x="480.4" y="309.9" width="12" height="11.2" fill="none" stroke="#1414ff" stroke-width="1.2" rx="3"/>
<path d="M491.4 311Q494.4 308.2 498.5 306.2" fill="none" stroke="#1414ff" stroke-width="1.1"/>
<circle cx="503" cy="305.2" r="4.5" fill="#ffffff" stroke="#1414ff" stroke-width="1.1"/>
<path d="M498.5 305.2A4.5 4.5 0 0 0 507.5 305.2Z" fill="#d8ff40"/>
<path d="M498.5 305.2L507.5 305.2" stroke="#1414ff" stroke-width="0.8"/>
<circle cx="503" cy="305.2" r="4.5" fill="none" stroke="#1414ff" stroke-width="1.1"/>
<text x="503" y="304.4" font-size="3.33" fill="#1414ff" font-weight="bold" text-anchor="middle"  stroke="#1414ff" stroke-width=".35">1</text>
<text x="503" y="308.4" font-size="2.81" fill="#00f000" font-weight="bold" text-anchor="middle"  stroke="#00f000" stroke-width=".35">A3-1</text>
<rect x="484.5" y="312.5" width="4.5" height="5.5" fill="#ffe020"/>
<text x="480" y="289.5" font-size="2.81" fill="#00f000" font-weight="bold"  stroke="#00f000" stroke-width=".35">mah. 27°</text>
<rect x="487" y="287" width="4.5" height="3.4" fill="#f0ff40"/>
<path d="M479.5 288.8L476 288.8L468 300L463 307" fill="none" stroke="#ff6b6b" stroke-width="0.8" />
<text x="463" y="305" font-size="2.81" fill="#00f000" font-weight="bold"  stroke="#00f000" stroke-width=".35">17</text>
<path d="M463 300L466 309L475 310" fill="none" stroke="#ff6b6b" stroke-width="0.6" />
<path d="M672.3 296.4L672.3 509.5" stroke="#00e8f8" stroke-width="1.6" stroke-dasharray="10 1.2 1.5 1.2"/>
<rect x="668.4" y="490" width="2.2" height="17.6" fill="#000"/>
<rect x="673" y="485.6" width="2.6" height="22" fill="#000"/>
<path d="M303 488.4L672 488.4" stroke="#ff6b6b" stroke-width="1"/>
<path d="M303.6 453L303.6 494" stroke="#b0b0b0" stroke-width="0.8" stroke-dasharray="3 1.2"/>
<path d="M303.6 483L303.6 490" stroke="#ff6b6b" stroke-width="0.9"/>
<circle cx="303.6" cy="488.4" r="0.9" fill="#fff" stroke="#7d3a3a" stroke-width="0.7"/>
<circle cx="303.6" cy="499.7" r="4.2" fill="#fffff0" stroke="#ffff00" stroke-width="1.4"/>
<text x="303.6" y="501.8" font-size="5.8" fill="#1414ff" text-anchor="middle" stroke="#1414ff" stroke-width=".2">B</text>
<path d="M322.6 453L322.6 494" stroke="#b0b0b0" stroke-width="0.8" stroke-dasharray="3 1.2"/>
<path d="M322.6 483L322.6 490" stroke="#ff6b6b" stroke-width="0.9"/>
<circle cx="322.6" cy="488.4" r="0.9" fill="#fff" stroke="#7d3a3a" stroke-width="0.7"/>
<circle cx="322.6" cy="499.7" r="4.2" fill="#fffff0" stroke="#ffff00" stroke-width="1.4"/>
<text x="322.6" y="501.8" font-size="5.8" fill="#1414ff" text-anchor="middle" stroke="#1414ff" stroke-width=".2">C</text>
<path d="M356.1 453L356.1 494" stroke="#b0b0b0" stroke-width="0.8" stroke-dasharray="3 1.2"/>
<path d="M356.1 483L356.1 490" stroke="#ff6b6b" stroke-width="0.9"/>
<circle cx="356.1" cy="488.4" r="0.9" fill="#fff" stroke="#7d3a3a" stroke-width="0.7"/>
<circle cx="356.1" cy="499.7" r="4.2" fill="#fffff0" stroke="#ffff00" stroke-width="1.4"/>
<text x="356.1" y="501.8" font-size="5.8" fill="#1414ff" text-anchor="middle" stroke="#1414ff" stroke-width=".2">D</text>
<path d="M375.2 453L375.2 494" stroke="#b0b0b0" stroke-width="0.8" stroke-dasharray="3 1.2"/>
<path d="M375.2 483L375.2 490" stroke="#ff6b6b" stroke-width="0.9"/>
<circle cx="375.2" cy="488.4" r="0.9" fill="#fff" stroke="#7d3a3a" stroke-width="0.7"/>
<circle cx="375.2" cy="499.7" r="4.2" fill="#fffff0" stroke="#ffff00" stroke-width="1.4"/>
<text x="375.2" y="501.8" font-size="5.8" fill="#1414ff" text-anchor="middle" stroke="#1414ff" stroke-width=".2">E</text>
<path d="M408.6 453L408.6 494" stroke="#b0b0b0" stroke-width="0.8" stroke-dasharray="3 1.2"/>
<path d="M408.6 483L408.6 490" stroke="#ff6b6b" stroke-width="0.9"/>
<circle cx="408.6" cy="488.4" r="0.9" fill="#fff" stroke="#7d3a3a" stroke-width="0.7"/>
<circle cx="408.6" cy="499.7" r="4.2" fill="#fffff0" stroke="#ffff00" stroke-width="1.4"/>
<text x="408.6" y="501.8" font-size="5.8" fill="#1414ff" text-anchor="middle" stroke="#1414ff" stroke-width=".2">F</text>
<path d="M427.5 464L427.5 494" stroke="#b0b0b0" stroke-width="0.8" stroke-dasharray="3 1.2"/>
<path d="M427.5 483L427.5 490" stroke="#ff6b6b" stroke-width="0.9"/>
<circle cx="427.5" cy="488.4" r="0.9" fill="#fff" stroke="#7d3a3a" stroke-width="0.7"/>
<circle cx="427.5" cy="499.7" r="4.2" fill="#fffff0" stroke="#ffff00" stroke-width="1.4"/>
<text x="427.5" y="501.8" font-size="5.8" fill="#1414ff" text-anchor="middle" stroke="#1414ff" stroke-width=".2">G</text>
<path d="M446 464L446 494" stroke="#b0b0b0" stroke-width="0.8" stroke-dasharray="3 1.2"/>
<path d="M446 483L446 490" stroke="#ff6b6b" stroke-width="0.9"/>
<circle cx="446" cy="488.4" r="0.9" fill="#fff" stroke="#7d3a3a" stroke-width="0.7"/>
<circle cx="446" cy="499.7" r="4.2" fill="#fffff0" stroke="#ffff00" stroke-width="1.4"/>
<text x="446" y="501.8" font-size="5.8" fill="#1414ff" text-anchor="middle" stroke="#1414ff" stroke-width=".2">H</text>
<path d="M454.2 464L454.2 494" stroke="#b0b0b0" stroke-width="0.8" stroke-dasharray="3 1.2"/>
<path d="M454.2 483L454.2 490" stroke="#ff6b6b" stroke-width="0.9"/>
<circle cx="454.2" cy="488.4" r="0.9" fill="#fff" stroke="#7d3a3a" stroke-width="0.7"/>
<circle cx="454.2" cy="499.7" r="4.2" fill="#fffff0" stroke="#ffff00" stroke-width="1.4"/>
<text x="454.2" y="501.8" font-size="5.8" fill="#1414ff" text-anchor="middle" stroke="#1414ff" stroke-width=".2">J</text>
<path d="M485.5 464L485.5 494" stroke="#b0b0b0" stroke-width="0.8" stroke-dasharray="3 1.2"/>
<path d="M485.5 483L485.5 490" stroke="#ff6b6b" stroke-width="0.9"/>
<circle cx="485.5" cy="488.4" r="0.9" fill="#fff" stroke="#7d3a3a" stroke-width="0.7"/>
<circle cx="485.5" cy="499.7" r="4.2" fill="#fffff0" stroke="#ffff00" stroke-width="1.4"/>
<text x="485.5" y="501.8" font-size="5.8" fill="#1414ff" text-anchor="middle" stroke="#1414ff" stroke-width=".2">K</text>
<path d="M512.8 464L512.8 494" stroke="#b0b0b0" stroke-width="0.8" stroke-dasharray="3 1.2"/>
<path d="M512.8 483L512.8 490" stroke="#ff6b6b" stroke-width="0.9"/>
<circle cx="512.8" cy="488.4" r="0.9" fill="#fff" stroke="#7d3a3a" stroke-width="0.7"/>
<circle cx="512.8" cy="499.7" r="4.2" fill="#fffff0" stroke="#ffff00" stroke-width="1.4"/>
<text x="512.8" y="501.8" font-size="5.8" fill="#1414ff" text-anchor="middle" stroke="#1414ff" stroke-width=".2">L</text>
<path d="M542.7 464L542.7 494" stroke="#b0b0b0" stroke-width="0.8" stroke-dasharray="3 1.2"/>
<path d="M542.7 483L542.7 490" stroke="#ff6b6b" stroke-width="0.9"/>
<circle cx="542.7" cy="488.4" r="0.9" fill="#fff" stroke="#7d3a3a" stroke-width="0.7"/>
<circle cx="542.7" cy="499.7" r="4.2" fill="#fffff0" stroke="#ffff00" stroke-width="1.4"/>
<text x="542.7" y="501.8" font-size="5.8" fill="#1414ff" text-anchor="middle" stroke="#1414ff" stroke-width=".2">M</text>
<path d="M565.3 464L565.3 494" stroke="#b0b0b0" stroke-width="0.8" stroke-dasharray="3 1.2"/>
<path d="M565.3 483L565.3 490" stroke="#ff6b6b" stroke-width="0.9"/>
<circle cx="565.3" cy="488.4" r="0.9" fill="#fff" stroke="#7d3a3a" stroke-width="0.7"/>
<circle cx="565.3" cy="499.7" r="4.2" fill="#fffff0" stroke="#ffff00" stroke-width="1.4"/>
<text x="565.3" y="501.8" font-size="5.8" fill="#1414ff" text-anchor="middle" stroke="#1414ff" stroke-width=".2">N</text>
<path d="M587.4 464L587.4 494" stroke="#b0b0b0" stroke-width="0.8" stroke-dasharray="3 1.2"/>
<path d="M587.4 483L587.4 490" stroke="#ff6b6b" stroke-width="0.9"/>
<circle cx="587.4" cy="488.4" r="0.9" fill="#fff" stroke="#7d3a3a" stroke-width="0.7"/>
<circle cx="587.4" cy="499.7" r="4.2" fill="#fffff0" stroke="#ffff00" stroke-width="1.4"/>
<text x="587.4" y="501.8" font-size="5.8" fill="#1414ff" text-anchor="middle" stroke="#1414ff" stroke-width=".2">P</text>
<path d="M618.5 464L618.5 494" stroke="#b0b0b0" stroke-width="0.8" stroke-dasharray="3 1.2"/>
<path d="M618.5 483L618.5 490" stroke="#ff6b6b" stroke-width="0.9"/>
<circle cx="618.5" cy="488.4" r="0.9" fill="#fff" stroke="#7d3a3a" stroke-width="0.7"/>
<circle cx="618.5" cy="499.7" r="4.2" fill="#fffff0" stroke="#ffff00" stroke-width="1.4"/>
<text x="618.5" y="501.8" font-size="5.8" fill="#1414ff" text-anchor="middle" stroke="#1414ff" stroke-width=".2">Q</text>
<path d="M657.2 464L657.2 494" stroke="#b0b0b0" stroke-width="0.8" stroke-dasharray="3 1.2"/>
<path d="M657.2 483L657.2 490" stroke="#ff6b6b" stroke-width="0.9"/>
<circle cx="657.2" cy="488.4" r="0.9" fill="#fff" stroke="#7d3a3a" stroke-width="0.7"/>
<circle cx="657.2" cy="499.7" r="4.2" fill="#fffff0" stroke="#ffff00" stroke-width="1.4"/>
<text x="657.2" y="501.8" font-size="5.8" fill="#1414ff" text-anchor="middle" stroke="#1414ff" stroke-width=".2">R</text>
<text x="313.1" y="487.3" font-size="2.81" fill="#00f000" font-weight="bold" text-anchor="middle"  stroke="#00f000" stroke-width=".35">276</text>
<text x="339.35" y="487.3" font-size="2.81" fill="#00f000" font-weight="bold" text-anchor="middle"  stroke="#00f000" stroke-width=".35">486</text>
<text x="365.65" y="487.3" font-size="2.81" fill="#00f000" font-weight="bold" text-anchor="middle"  stroke="#00f000" stroke-width=".35">277</text>
<text x="391.9" y="487.3" font-size="2.81" fill="#00f000" font-weight="bold" text-anchor="middle"  stroke="#00f000" stroke-width=".35">484</text>
<text x="418.05" y="487.3" font-size="2.81" fill="#00f000" font-weight="bold" text-anchor="middle"  stroke="#00f000" stroke-width=".35">274</text>
<text x="436.75" y="487.3" font-size="2.81" fill="#00f000" font-weight="bold" text-anchor="middle"  stroke="#00f000" stroke-width=".35">268</text>
<text x="469.85" y="487.3" font-size="2.81" fill="#00f000" font-weight="bold" text-anchor="middle"  stroke="#00f000" stroke-width=".35">454</text>
<text x="499.15" y="487.3" font-size="2.81" fill="#00f000" font-weight="bold" text-anchor="middle"  stroke="#00f000" stroke-width=".35">396</text>
<text x="527.75" y="487.3" font-size="2.81" fill="#00f000" font-weight="bold" text-anchor="middle"  stroke="#00f000" stroke-width=".35">434</text>
<text x="554" y="487.3" font-size="2.81" fill="#00f000" font-weight="bold" text-anchor="middle"  stroke="#00f000" stroke-width=".35">328</text>
<text x="576.35" y="487.3" font-size="2.81" fill="#00f000" font-weight="bold" text-anchor="middle"  stroke="#00f000" stroke-width=".35">320</text>
<text x="602.95" y="487.3" font-size="2.81" fill="#00f000" font-weight="bold" text-anchor="middle"  stroke="#00f000" stroke-width=".35">451</text>
<text x="637.85" y="487.3" font-size="2.81" fill="#00f000" font-weight="bold" text-anchor="middle"  stroke="#00f000" stroke-width=".35">561</text>
<circle cx="439.7" cy="538.6" r="5.8" fill="#fff" stroke="#1414ff" stroke-width="1.3"/>
<path d="M433.9 539.1L498.5 539.1" stroke="#1414ff" stroke-width="1.1"/>
<text x="439.7" y="537.4" font-size="4.2" fill="#1414ff" font-weight="bold" text-anchor="middle"  stroke="#1414ff" stroke-width=".35">1</text>
<text x="439.7" y="542.8" font-size="3.33" fill="#00f000" font-weight="bold" text-anchor="middle" stroke="#00f000" stroke-width=".2">A3-10</text>
<text x="448.9" y="537.6" font-size="5.4" fill="#1414ff" font-weight="bold" stroke="#1414ff" stroke-width=".3" textLength="49.6" lengthAdjust="spacingAndGlyphs">BODRUM 3 - BAĞLAR 1</text>
<text x="448.9" y="543" font-size="3.6" fill="#00f000" font-weight="bold" stroke="#00f000" stroke-width=".25">ÖLÇEK 1 / 100</text>
<rect x="767.5" y="208.5" width="525" height="387" fill="#fff" stroke="#2a2a2a" stroke-width="1.1"/>
<rect x="783.8" y="216.5" width="501.5" height="370.8" fill="none" stroke="#f79b3e" stroke-width="1.4"/>
<path d="M830 272L1277.5 272" stroke="#7d3a3a" stroke-width="1"/>
<path d="M864 305L1277.5 305" stroke="#7d3a3a" stroke-width="1"/>
<path d="M830 315.4L1277.5 315.4" stroke="#7d3a3a" stroke-width="1"/>
<path d="M808 325.3L1277.5 325.3" stroke="#7d3a3a" stroke-width="1"/>
<path d="M935 332L1277.5 332" stroke="#7d3a3a" stroke-width="1"/>
<path d="M935 340.3L1277.5 340.3" stroke="#7d3a3a" stroke-width="1"/>
<path d="M935 346.5L1277.5 346.5" stroke="#7d3a3a" stroke-width="1"/>
<path d="M935 367.4L1277.5 367.4" stroke="#7d3a3a" stroke-width="1"/>
<path d="M789 383.3L1277.5 383.3" stroke="#7d3a3a" stroke-width="1"/>
<path d="M789 388.8L1277.5 388.8" stroke="#7d3a3a" stroke-width="1"/>
<path d="M789 410L1277.5 410" stroke="#7d3a3a" stroke-width="1"/>
<path d="M789 438.2L1277.5 438.2" stroke="#7d3a3a" stroke-width="1"/>
<path d="M789 462.5L1277.5 462.5" stroke="#7d3a3a" stroke-width="1"/>
<path d="M789 405.4L812 405.4" stroke="#7d3a3a" stroke-width="0.9"/>
<path d="M789 417.7L812 417.7" stroke="#7d3a3a" stroke-width="0.9"/>
<path d="M789 409.9L853 409.9" stroke="#7d3a3a" stroke-width="0.9"/>
<path d="M1251.5 272L1251.5 462.5" stroke="#ff6b6b" stroke-width="0.9"/>
<path d="M1251.5 272L1253.5 269.8L1255.5 272" fill="none" stroke="#0a0" stroke-width="0.7" />
<text x="1256" y="271.2" font-size="3.12" fill="#00f000" font-weight="bold"  stroke="#00f000" stroke-width=".35">+24.09</text>
<path d="M1248.5 272L1262.5 272" stroke="#7d3a3a" stroke-width="0.8"/>
<path d="M1251.5 305L1253.5 302.8L1255.5 305" fill="none" stroke="#0a0" stroke-width="0.7" />
<text x="1256" y="304.2" font-size="3.12" fill="#00f000" font-weight="bold"  stroke="#00f000" stroke-width=".35">+19.30</text>
<path d="M1248.5 305L1262.5 305" stroke="#7d3a3a" stroke-width="0.8"/>
<path d="M1251.5 315.4L1253.5 313.2L1255.5 315.4" fill="none" stroke="#0a0" stroke-width="0.7" />
<text x="1256" y="314.6" font-size="3.12" fill="#00f000" font-weight="bold"  stroke="#00f000" stroke-width=".35">+17.80</text>
<path d="M1248.5 315.4L1262.5 315.4" stroke="#7d3a3a" stroke-width="0.8"/>
<path d="M1251.5 325.3L1253.5 323.1L1255.5 325.3" fill="none" stroke="#0a0" stroke-width="0.7" />
<text x="1256" y="324.5" font-size="3.12" fill="#00f000" font-weight="bold"  stroke="#00f000" stroke-width=".35">+16.36</text>
<path d="M1248.5 325.3L1262.5 325.3" stroke="#7d3a3a" stroke-width="0.8"/>
<path d="M1251.5 332L1253.5 329.8L1255.5 332" fill="none" stroke="#0a0" stroke-width="0.7" />
<text x="1256" y="331.2" font-size="3.12" fill="#00f000" font-weight="bold"  stroke="#00f000" stroke-width=".35">+15.39</text>
<path d="M1248.5 332L1262.5 332" stroke="#7d3a3a" stroke-width="0.8"/>
<path d="M1251.5 340.3L1253.5 338.1L1255.5 340.3" fill="none" stroke="#0a0" stroke-width="0.7" />
<text x="1256" y="339.5" font-size="3.12" fill="#00f000" font-weight="bold"  stroke="#00f000" stroke-width=".35">+14.19</text>
<path d="M1248.5 340.3L1262.5 340.3" stroke="#7d3a3a" stroke-width="0.8"/>
<path d="M1251.5 346.5L1253.5 344.3L1255.5 346.5" fill="none" stroke="#0a0" stroke-width="0.7" />
<text x="1256" y="345.7" font-size="3.12" fill="#00f000" font-weight="bold"  stroke="#00f000" stroke-width=".35">+13.29</text>
<path d="M1248.5 346.5L1262.5 346.5" stroke="#7d3a3a" stroke-width="0.8"/>
<path d="M1251.5 367.4L1253.5 365.2L1255.5 367.4" fill="none" stroke="#0a0" stroke-width="0.7" />
<text x="1256" y="366.6" font-size="3.12" fill="#00f000" font-weight="bold"  stroke="#00f000" stroke-width=".35">+10.26</text>
<path d="M1248.5 367.4L1262.5 367.4" stroke="#7d3a3a" stroke-width="0.8"/>
<path d="M1251.5 383.3L1253.5 381.1L1255.5 383.3" fill="none" stroke="#0a0" stroke-width="0.7" />
<text x="1256" y="382.5" font-size="3.12" fill="#00f000" font-weight="bold"  stroke="#00f000" stroke-width=".35">+7.96</text>
<path d="M1248.5 383.3L1262.5 383.3" stroke="#7d3a3a" stroke-width="0.8"/>
<path d="M1251.5 388.8L1253.5 386.6L1255.5 388.8" fill="none" stroke="#0a0" stroke-width="0.7" />
<text x="1256" y="388" font-size="3.12" fill="#00f000" font-weight="bold"  stroke="#00f000" stroke-width=".35">+7.16</text>
<path d="M1248.5 388.8L1262.5 388.8" stroke="#7d3a3a" stroke-width="0.8"/>
<path d="M1251.5 410L1253.5 407.8L1255.5 410" fill="none" stroke="#0a0" stroke-width="0.7" />
<text x="1256" y="409.2" font-size="3.12" fill="#00f000" font-weight="bold"  stroke="#00f000" stroke-width=".35">+4.09</text>
<path d="M1248.5 410L1262.5 410" stroke="#7d3a3a" stroke-width="0.8"/>
<path d="M1251.5 438.2L1253.5 436L1255.5 438.2" fill="none" stroke="#0a0" stroke-width="0.7" />
<text x="1256" y="437.4" font-size="3.12" fill="#00f000" font-weight="bold"  stroke="#00f000" stroke-width=".35">+0.00</text>
<path d="M1248.5 438.2L1262.5 438.2" stroke="#7d3a3a" stroke-width="0.8"/>
<path d="M1251.5 452.5L1253.5 450.3L1255.5 452.5" fill="none" stroke="#0a0" stroke-width="0.7" />
<text x="1256" y="451.7" font-size="3.12" fill="#00f000" font-weight="bold"  stroke="#00f000" stroke-width=".35">+-2.07</text>
<path d="M1248.5 452.5L1262.5 452.5" stroke="#7d3a3a" stroke-width="0.8"/>
<path d="M1251.5 462.5L1253.5 460.3L1255.5 462.5" fill="none" stroke="#0a0" stroke-width="0.7" />
<text x="1256" y="461.7" font-size="3.12" fill="#00f000" font-weight="bold"  stroke="#00f000" stroke-width=".35">+-3.52</text>
<path d="M1248.5 462.5L1262.5 462.5" stroke="#7d3a3a" stroke-width="0.8"/>
<text x="1247.5" y="289.5" font-size="2.81" fill="#00f000" font-weight="bold" text-anchor="middle"  stroke="#00f000" stroke-width=".35">290</text>
<text x="1247.5" y="311.2" font-size="2.81" fill="#00f000" font-weight="bold" text-anchor="middle"  stroke="#00f000" stroke-width=".35">290</text>
<text x="1247.5" y="321.35" font-size="2.81" fill="#00f000" font-weight="bold" text-anchor="middle"  stroke="#00f000" stroke-width=".35">290</text>
<text x="1247.5" y="337.15" font-size="2.81" fill="#00f000" font-weight="bold" text-anchor="middle"  stroke="#00f000" stroke-width=".35">290</text>
<text x="1247.5" y="357.95" font-size="2.81" fill="#00f000" font-weight="bold" text-anchor="middle"  stroke="#00f000" stroke-width=".35">290</text>
<text x="1247.5" y="376.35" font-size="2.81" fill="#00f000" font-weight="bold" text-anchor="middle"  stroke="#00f000" stroke-width=".35">290</text>
<text x="1247.5" y="400.4" font-size="2.81" fill="#00f000" font-weight="bold" text-anchor="middle"  stroke="#00f000" stroke-width=".35">290</text>
<text x="1247.5" y="425.1" font-size="2.81" fill="#00f000" font-weight="bold" text-anchor="middle"  stroke="#00f000" stroke-width=".35">290</text>
<text x="1247.5" y="446.35" font-size="2.81" fill="#00f000" font-weight="bold" text-anchor="middle"  stroke="#00f000" stroke-width=".35">290</text>
<text x="1247.5" y="458.5" font-size="2.81" fill="#00f000" font-weight="bold" text-anchor="middle"  stroke="#00f000" stroke-width=".35">290</text>
<text x="1256" y="457.8" font-size="3.12" fill="#1414ff" font-weight="bold"  stroke="#1414ff" stroke-width=".35">BODRUM</text>
<path d="M1268 449.5L1270 447.5L1272 449.5L1270 451.5Z" fill="none" stroke="#ff1a1a" stroke-width="0.7" />
<path d="M799 383L799 462.5" stroke="#ff6b6b" stroke-width="0.9"/>
<path d="M792 383L792 462.5" stroke="#7d3a3a" stroke-width="0.6"/>
<text x="793" y="382.5" font-size="2.81" fill="#00f000" font-weight="bold" text-anchor="middle"  stroke="#00f000" stroke-width=".35">+8.0</text>
<circle cx="799" cy="383.3" r="0.8" fill="none" stroke="#111" stroke-width="0.6"/>
<text x="793" y="388" font-size="2.81" fill="#00f000" font-weight="bold" text-anchor="middle"  stroke="#00f000" stroke-width=".35">+7.2</text>
<circle cx="799" cy="388.8" r="0.8" fill="none" stroke="#111" stroke-width="0.6"/>
<text x="793" y="404.6" font-size="2.81" fill="#00f000" font-weight="bold" text-anchor="middle"  stroke="#00f000" stroke-width=".35">+4.8</text>
<circle cx="799" cy="405.4" r="0.8" fill="none" stroke="#111" stroke-width="0.6"/>
<text x="793" y="409.1" font-size="2.81" fill="#00f000" font-weight="bold" text-anchor="middle"  stroke="#00f000" stroke-width=".35">+4.1</text>
<circle cx="799" cy="409.9" r="0.8" fill="none" stroke="#111" stroke-width="0.6"/>
<text x="793" y="416.9" font-size="2.81" fill="#00f000" font-weight="bold" text-anchor="middle"  stroke="#00f000" stroke-width=".35">+3.0</text>
<circle cx="799" cy="417.7" r="0.8" fill="none" stroke="#111" stroke-width="0.6"/>
<text x="793" y="437.4" font-size="2.81" fill="#00f000" font-weight="bold" text-anchor="middle"  stroke="#00f000" stroke-width=".35">+0.0</text>
<circle cx="799" cy="438.2" r="0.8" fill="none" stroke="#111" stroke-width="0.6"/>
<text x="793" y="461.7" font-size="2.81" fill="#00f000" font-weight="bold" text-anchor="middle"  stroke="#00f000" stroke-width=".35">+-3.5</text>
<circle cx="799" cy="462.5" r="0.8" fill="none" stroke="#111" stroke-width="0.6"/>
<text x="797.5" y="397" font-size="2.81" fill="#00f000" font-weight="bold" text-anchor="middle"  stroke="#00f000" stroke-width=".35">397</text>
<text x="797.5" y="414" font-size="2.81" fill="#00f000" font-weight="bold" text-anchor="middle"  stroke="#00f000" stroke-width=".35">414</text>
<text x="797.5" y="428" font-size="2.81" fill="#00f000" font-weight="bold" text-anchor="middle"  stroke="#00f000" stroke-width=".35">428</text>
<text x="797.5" y="450" font-size="2.81" fill="#00f000" font-weight="bold" text-anchor="middle"  stroke="#00f000" stroke-width=".35">450</text>
<path d="M806.7 258.5L806.7 510" stroke="#00e8f8" stroke-width="1.6" stroke-dasharray="10 1.2 1.5 1.2"/>
<rect x="802" y="490" width="2.9" height="17.6" fill="#000"/>
<rect x="808.2" y="485.2" width="2.5" height="22.4" fill="#000"/>
<path d="M808 269.2L829.6 269.2L829.6 304.2L863.7 304.2L863.7 333L847 333L847 316L808 316Z" fill="url(#hd)" />
<rect x="808" y="269.2" width="18.7" height="46.8" fill="url(#hv)"/>
<path d="M808 316L808 269.2L829.6 269.2L829.6 304.2" fill="none" stroke="#6a2a2a" stroke-width="1.3" stroke-dasharray="1.2 .8" />
<path d="M826.7 304.2L863.7 304.2L863.7 333" fill="none" stroke="#ff1a1a" stroke-width="1.1" />
<path d="M808 316L847 316" stroke="#ff1a1a" stroke-width="0.8"/>
<circle cx="821" cy="261" r="4.6" fill="#ffffff" stroke="#1414ff" stroke-width="1.1"/>
<path d="M816.4 261A4.6 4.6 0 0 0 825.6 261Z" fill="#d8ff40"/>
<path d="M816.4 261L825.6 261" stroke="#1414ff" stroke-width="0.8"/>
<circle cx="821" cy="261" r="4.6" fill="none" stroke="#1414ff" stroke-width="1.1"/>
<text x="821" y="260.2" font-size="3.33" fill="#1414ff" font-weight="bold" text-anchor="middle"  stroke="#1414ff" stroke-width=".35">1</text>
<text x="821" y="264.2" font-size="2.81" fill="#00f000" font-weight="bold" text-anchor="middle"  stroke="#00f000" stroke-width=".35">A3-1</text>
<path d="M817 259Q809 262 808.5 280" fill="none" stroke="#1414ff" stroke-width="1.2"/>
<text x="878" y="309" font-size="2.81" fill="#00f000" font-weight="bold"  stroke="#00f000" stroke-width=".35">çatı kaplaması</text>
<path d="M864 308L877 308" stroke="#ff6b6b" stroke-width="0.8"/>
<text x="878" y="321" font-size="2.81" fill="#00f000" font-weight="bold"  stroke="#00f000" stroke-width=".35">alüminyum doğr.</text>
<text x="878" y="324" font-size="2.81" fill="#00f000" font-weight="bold"  stroke="#00f000" stroke-width=".35">çatı penceresi</text>
<rect x="893" y="321.5" width="5" height="3" fill="#f0ff40"/>
<path d="M858 321.3L877 321.3" stroke="#ff6b6b" stroke-width="0.8"/>
<rect x="808" y="333.4" width="126.7" height="45.8" fill="url(#hg)"/>
<rect x="808" y="333.4" width="126.7" height="45.8" fill="none" stroke="#ff1a1a" stroke-width="1"/>
<path d="M808 340.3L934.7 340.3" stroke="#7d3a3a" stroke-width="0.9"/>
<path d="M808 346.5L934.7 346.5" stroke="#7d3a3a" stroke-width="0.9"/>
<path d="M808 367.4L934.7 367.4" stroke="#7d3a3a" stroke-width="0.9"/>
<path d="M808 335L934.7 335" stroke="#ff1a1a" stroke-width="0.7"/>
<path d="M808 377.5L934.7 377.5" stroke="#ff1a1a" stroke-width="0.7"/>
<path d="M934.7 331L934.7 379" stroke="#ff1a1a" stroke-width="1.4"/>
<path d="M808 381L935 381" stroke="#ff6b6b" stroke-width="0.8"/>
<rect x="934" y="378" width="12.5" height="12" fill="#d4d4d4"/>
<rect x="934" y="378" width="12.5" height="1.5" fill="#ffe860"/>
<path d="M934 384L948 384" stroke="#e0d060" stroke-width="1"/>
<rect x="934" y="416" width="12" height="3" fill="#d0d0d0"/>
<path d="M808.5 384L808.5 464" stroke="#ff1a1a" stroke-width="1.2"/>
<path d="M820 384L820 410" stroke="#ff1a1a" stroke-width="1.1"/>
<path d="M811 384L811 438" stroke="#7d3a3a" stroke-width="0.8"/>
<path d="M822 384L822 410" stroke="#7d3a3a" stroke-width="0.8"/>
<rect x="824.5" y="388.8" width="12.5" height="13.2" fill="none" stroke="#ff10ff" stroke-width="1.1"/>
<path d="M828.5 388.8L828.5 402" stroke="#ff10ff" stroke-width="0.8"/>
<path d="M832.7 388.8L832.7 402" stroke="#ff10ff" stroke-width="0.8"/>
<rect x="823" y="402" width="16" height="4.5" fill="#8f8f8f"/>
<rect x="808" y="406" width="11" height="6" fill="url(#hs)"/>
<rect x="820" y="410" width="19" height="4.5" fill="url(#hh)"/>
<path d="M808 413.5L840 413.5" stroke="#2030e0" stroke-width="1.2"/>
<path d="M820 416.5L840 416.5" stroke="#858585" stroke-width="1.6"/>
<path d="M839.3 414L839.3 440" stroke="#858585" stroke-width="1.6"/>
<path d="M820 414L820 464" stroke="#858585" stroke-width="1.2"/>
<path d="M829 386L832 387.5L872 387.5" fill="none" stroke="#ff6b6b" stroke-width="0.7" />
<rect x="838" y="385" width="34" height="4.5" fill="none"/>
<text x="838" y="386.6" font-size="2.81" fill="#00f000" font-weight="bold"  stroke="#00f000" stroke-width=".35">alüm. kompozit kaplama</text>
<rect x="846" y="388" width="6" height="2.3" fill="#f0ff40"/>
<path d="M836 412L841 401L846 401" fill="none" stroke="#ff6b6b" stroke-width="0.8" />
<text x="846.5" y="400.5" font-size="2.81" fill="#00f000" font-weight="bold"  stroke="#00f000" stroke-width=".35">korkuluk</text>
<text x="846.5" y="403.3" font-size="2.81" fill="#00f000" font-weight="bold"  stroke="#00f000" stroke-width=".35">h=110</text>
<text x="849" y="409" font-size="2.81" fill="#00f000" font-weight="bold" text-anchor="middle"  stroke="#00f000" stroke-width=".35">+3.4</text>
<text x="813" y="404" font-size="2.81" fill="#00f000" font-weight="bold" text-anchor="middle"  stroke="#00f000" stroke-width=".35">+3.4</text>
<text x="818" y="384.5" font-size="2.81" fill="#00f000" font-weight="bold" text-anchor="middle"  stroke="#00f000" stroke-width=".35">+8.1</text>
<text x="829" y="420" font-size="2.91" fill="#00f000" font-weight="bold" text-anchor="middle"  stroke="#00f000" stroke-width=".35">AA</text>
<text x="829" y="432" font-size="2.81" fill="#00f000" font-weight="bold" text-anchor="middle"  stroke="#00f000" stroke-width=".35">TEKNİK SERVİS</text>
<text x="829" y="436" font-size="2.81" fill="#00f000" font-weight="bold" text-anchor="middle"  stroke="#00f000" stroke-width=".35">-0.05</text>
<text x="814" y="426" font-size="2.81" fill="#00f000" font-weight="bold" text-anchor="middle"  stroke="#00f000" stroke-width=".35">210</text>
<path d="M808.5 429L822 429" stroke="#ff1a1a" stroke-width="0.8"/>
<rect x="841.3" y="417.7" width="5.7" height="20" fill="none" stroke="#ff10ff" stroke-width="1.3"/>
<path d="M844.15 417.7L844.15 437.7" stroke="#ff10ff" stroke-width="0.9"/>
<path d="M840.3 418.5L848 418.5" stroke="#ff10ff" stroke-width="1.6"/>
<rect x="860.4" y="417.7" width="12.6" height="20" fill="none" stroke="#ff10ff" stroke-width="1.3"/>
<path d="M866.7 417.7L866.7 437.7" stroke="#ff10ff" stroke-width="0.9"/>
<path d="M859.4 418.5L874 418.5" stroke="#ff10ff" stroke-width="1.6"/>
<path d="M863.4 419L863.4 437" stroke="#ff10ff" stroke-width="0.6"/>
<path d="M870 419L870 437" stroke="#ff10ff" stroke-width="0.6"/>
<rect x="886.6" y="417.7" width="12.7" height="20" fill="none" stroke="#ff10ff" stroke-width="1.3"/>
<path d="M892.95 417.7L892.95 437.7" stroke="#ff10ff" stroke-width="0.9"/>
<path d="M885.6 418.5L900.3 418.5" stroke="#ff10ff" stroke-width="1.6"/>
<path d="M889.6 419L889.6 437" stroke="#ff10ff" stroke-width="0.6"/>
<path d="M896.3 419L896.3 437" stroke="#ff10ff" stroke-width="0.6"/>
<rect x="840" y="417" width="3.5" height="21" fill="#8a8a8a"/>
<path d="M904 418L904 438" stroke="#ff1a1a" stroke-width="1"/>
<rect x="905" y="417.5" width="3" height="20.5" fill="#8a8a8a"/>
<text x="900.5" y="428" font-size="3.12" fill="#00f000" font-weight="bold"  stroke="#00f000" stroke-width=".35">I</text>
<rect x="881" y="402" width="4" height="2.6" fill="#f0ff40"/>
<text x="879.5" y="404.5" font-size="2.81" fill="#00f000" font-weight="bold"  stroke="#00f000" stroke-width=".35">A01</text>
<text x="876" y="415.5" font-size="3.33" fill="#00f000" font-weight="bold" text-anchor="middle"  stroke="#00f000" stroke-width=".35">Ø</text>
<text x="911" y="424.5" font-size="2.81" fill="#00f000" font-weight="bold"  stroke="#00f000" stroke-width=".35">TAŞ KAPLAMA</text>
<text x="911" y="427.3" font-size="2.81" fill="#00f000" font-weight="bold"  stroke="#00f000" stroke-width=".35">traverten 3cm</text>
<rect x="927" y="425.2" width="4" height="2.6" fill="#f0ff40"/>
<path d="M908 425L911 425" stroke="#ff6b6b" stroke-width="0.7"/>
<text x="880" y="434" font-size="2.81" fill="#00f000" font-weight="bold" text-anchor="middle"  stroke="#00f000" stroke-width=".35">KAFETERYA</text>
<text x="880" y="437" font-size="2.81" fill="#00f000" font-weight="bold" text-anchor="middle"  stroke="#00f000" stroke-width=".35">+0.05</text>
<path d="M839.4 440L907.5 440" stroke="#2030e0" stroke-width="2"/>
<path d="M839 438.6L907.5 438.6" stroke="#858585" stroke-width="1.6"/>
<circle cx="853" cy="442" r="0.9" fill="none" stroke="#1414ff" stroke-width="0.6"/>
<circle cx="880" cy="443" r="1.1" fill="none" stroke="#858585" stroke-width="0.8"/>
<path d="M821.5 441L821.5 464" stroke="#ff1a1a" stroke-width="1.1"/>
<path d="M827 441L827 464" stroke="#ff1a1a" stroke-width="1.1"/>
<path d="M830.5 441L830.5 464" stroke="#ff1a1a" stroke-width="1.1"/>
<path d="M838 441L838 464" stroke="#7d3a3a" stroke-width="0.9"/>
<path d="M852.5 441L852.5 462" stroke="#7d3a3a" stroke-width="0.8"/>
<rect x="839.5" y="447" width="7" height="10" fill="none" stroke="#858585" stroke-width="1.1"/>
<rect x="839" y="457" width="13" height="7" fill="#9a9a9a"/>
<path d="M842 457L842 464" stroke="#666" stroke-width="0.6"/>
<path d="M845 457L845 464" stroke="#666" stroke-width="0.6"/>
<path d="M848 457L848 464" stroke="#666" stroke-width="0.6"/>
<text x="793" y="461" font-size="2.81" fill="#00f000" font-weight="bold" text-anchor="middle"  stroke="#00f000" stroke-width=".35">-3.2</text>
<text x="815.5" y="461" font-size="2.81" fill="#00f000" font-weight="bold" text-anchor="middle"  stroke="#00f000" stroke-width=".35">-3.2</text>
<path d="M807 464.3L840 464.3" stroke="#1a2ae0" stroke-width="2.2"/>
<path d="M840 464.3L873.4 464.3L909 457.8L1011.6 444L1157 444L1157 446.3L1011.8 446.3L909 460.2L873.6 466.7L840 466.7Z" fill="#7c7c7c" stroke="none" stroke-width="0" />
<path d="M873.4 464.3L909 457.8L1011.6 444" fill="none" stroke="#1414ff" stroke-width="0.5" stroke-dasharray="2 2" />
<path d="M1011 443.3L1157 443.3" stroke="#ff10ff" stroke-width="0.6"/>
<path d="M877.5 460L877.5 455.5L881 454L886 453L891.5 449.8L900 448.8L904 451L908.5 452L909.3 456.5L905 458L878 460.8Z" fill="#fff" stroke="#6a2a2a" stroke-width="1" />
<path d="M878 457.5L886 455.5L904 453.5L909 454.3" fill="none" stroke="#6a2a2a" stroke-width="0.8" />
<path d="M887 453.3L892 450.8L899.5 450L902.5 452" fill="none" stroke="#6a2a2a" stroke-width="0.8" />
<path d="M895 450.3L895 456.5" stroke="#6a2a2a" stroke-width="0.8"/>
<circle cx="883" cy="459" r="2" fill="#fff" stroke="#4a1a1a" stroke-width="1.2"/>
<circle cx="902.8" cy="456.3" r="2" fill="#fff" stroke="#4a1a1a" stroke-width="1.2"/>
<path d="M909.5 447L910.5 455L913 456.5" fill="none" stroke="#0a0" stroke-width="0.8" />
<path d="M909.8 441L909.8 447" stroke="#ff1a1a" stroke-width="0.8"/>
<rect x="861.5" y="458" width="11" height="10" fill="none" stroke="#1414ff" stroke-width="1.1" stroke-dasharray="1.6 1.1" rx="2"/>
<path d="M872 466Q876 472 881 472" fill="none" stroke="#1414ff" stroke-width="1.1"/>
<circle cx="885.2" cy="472.3" r="4.6" fill="#ffffff" stroke="#1414ff" stroke-width="1.1"/>
<path d="M880.6 472.3A4.6 4.6 0 0 0 889.8 472.3Z" fill="#d8ff40"/>
<path d="M880.6 472.3L889.8 472.3" stroke="#1414ff" stroke-width="0.8"/>
<circle cx="885.2" cy="472.3" r="4.6" fill="none" stroke="#1414ff" stroke-width="1.1"/>
<text x="885.2" y="471.5" font-size="3.33" fill="#1414ff" font-weight="bold" text-anchor="middle"  stroke="#1414ff" stroke-width=".35">1</text>
<text x="885.2" y="475.5" font-size="2.81" fill="#00f000" font-weight="bold" text-anchor="middle"  stroke="#00f000" stroke-width=".35">A3-1</text>
<path d="M960 458.5L984 454.8L984 458.5L960 458.5" fill="none" stroke="#ff6b6b" stroke-width="0.7" />
<text x="980" y="457" font-size="2.81" fill="#00f000" font-weight="bold" text-anchor="middle"  stroke="#00f000" stroke-width=".35">%12</text>
<circle cx="979.5" cy="455.5" r="0.9" fill="none" stroke="#333" stroke-width="0.5"/>
<circle cx="979.5" cy="459" r="0.9" fill="none" stroke="#333" stroke-width="0.5"/>
<path d="M932.8 388L1065.7 388L1065.7 442L1011 442L980 440L932.8 440Z" fill="url(#hd)" />
<rect x="932.8" y="388" width="132.9" height="52" fill="none" stroke="#8a3a3a" stroke-width="0.6"/>
<path d="M946 388L1065.7 388" stroke="#ff1a1a" stroke-width="1"/>
<path d="M945.6 388L945.6 439" stroke="#c8a0a0" stroke-width="0.9"/>
<path d="M934 418L984 418" stroke="#f4e4e4" stroke-width="1.8"/>
<path d="M959 418L959 439" stroke="#ff1a1a" stroke-width="0.8"/>
<path d="M982 418L982 412.6L1041 412.6L1041 442" fill="none" stroke="#ff1a1a" stroke-width="0.9" />
<path d="M982 412.6L1041 412.6" stroke="#f0d8d8" stroke-width="1.6"/>
<rect x="973" y="420" width="10" height="17" fill="#fff"/>
<path d="M975.5 420L975.5 437" stroke="#858585" stroke-width="0.9"/>
<path d="M978 420L978 437" stroke="#858585" stroke-width="0.9"/>
<path d="M980.5 420L980.5 437" stroke="#858585" stroke-width="0.9"/>
<path d="M984.5 418L984.5 440" stroke="#ff1a1a" stroke-width="1.4"/>
<rect x="997" y="418" width="12" height="19.5" fill="none" stroke="#ff1a1a" stroke-width="1.1"/>
<rect x="998.5" y="420" width="9" height="17" fill="none" stroke="#ff10ff" stroke-width="1.1"/>
<rect x="999.5" y="421" width="7" height="15.5" fill="#fff"/>
<path d="M1001.6 421L1001.6 436.5" stroke="#ff10ff" stroke-width="0.7"/>
<path d="M1004.2 421L1004.2 436.5" stroke="#ff10ff" stroke-width="0.7"/>
<rect x="1012.5" y="418" width="12" height="19.5" fill="none" stroke="#ff1a1a" stroke-width="1.1"/>
<rect x="1014" y="420" width="9" height="17" fill="none" stroke="#ff10ff" stroke-width="1.1"/>
<rect x="1015" y="421" width="7" height="15.5" fill="#fff"/>
<path d="M1017.1 421L1017.1 436.5" stroke="#ff10ff" stroke-width="0.7"/>
<path d="M1019.7 421L1019.7 436.5" stroke="#ff10ff" stroke-width="0.7"/>
<rect x="1034.5" y="420" width="4" height="21" fill="#fff"/>
<path d="M1034.5 420L1034.5 441" stroke="#ff1a1a" stroke-width="0.7"/>
<path d="M1038.5 420L1038.5 441" stroke="#ff1a1a" stroke-width="0.7"/>
<rect x="985" y="437.5" width="26" height="4" fill="#a05050"/>
<path d="M959 442L1012 442" stroke="#ff1a1a" stroke-width="1.2"/>
<path d="M959 440L959 443.5" stroke="#ff1a1a" stroke-width="1"/>
<path d="M985 437.6L1025 437.6" stroke="#ff10ff" stroke-width="0.8"/>
<rect x="1059" y="437" width="6" height="4" fill="#ddd"/>
<path d="M1041 417L1066 417" stroke="#c09090" stroke-width="0.7"/>
<path d="M919 317L915 317L908 326" fill="none" stroke="#ff6b6b" stroke-width="0.01" />
<path d="M1038 354.6L1027.8 354.6L1016.8 371" fill="none" stroke="#ff6b6b" stroke-width="0.9" />
<text x="1038.5" y="354" font-size="2.81" fill="#00f000" font-weight="bold"  stroke="#00f000" stroke-width=".35">çatı kapl.</text>
<rect x="1047" y="354.6" width="5" height="2.6" fill="#f0ff40"/>
<text x="1038.5" y="357" font-size="2.81" fill="#00f000" font-weight="bold"  stroke="#00f000" stroke-width=".35">kiremit</text>
<path d="M1024.9 367.6L1024.9 388" stroke="#ff1a1a" stroke-width="1.2"/>
<path d="M966.5 415.5L980 376L1065 376" fill="none" stroke="#ff6b6b" stroke-width="0.9" />
<path d="M1030 413L1044 376L1092 376" fill="none" stroke="#ff6b6b" stroke-width="0.9" />
<path d="M1065 375.5L1092 375.5" stroke="#ff6b6b" stroke-width="0.6"/>
<text x="1071" y="375" font-size="2.81" fill="#00f000" font-weight="bold"  stroke="#00f000" stroke-width=".35">TAŞ KAPLAMA</text>
<rect x="1083" y="375.6" width="5" height="2.4" fill="#f0ff40"/>
<text x="1071" y="378" font-size="2.81" fill="#00f000" font-weight="bold"  stroke="#00f000" stroke-width=".35">doğal taş</text>
<path d="M1065.7 388L1101.7 407" fill="none" stroke="#7d3a3a" stroke-width="1.4" />
<path d="M1065.7 391L1098 408" fill="none" stroke="#7d3a3a" stroke-width="0.7" />
<circle cx="1100" cy="407" r="1.1" fill="none" stroke="#222" stroke-width="0.8"/>
<path d="M1066 407.8L1105 407.8" stroke="#7d3a3a" stroke-width="0.8"/>
<path d="M1066 409.3L1105 409.3" stroke="#7d3a3a" stroke-width="0.8"/>
<path d="M1066 411L1105 411" stroke="#7d3a3a" stroke-width="0.8"/>
<path d="M1066 412.6L1105 412.6" stroke="#7d3a3a" stroke-width="0.8"/>
<path d="M1082 399L1082 392.5L1118 392.5" fill="none" stroke="#ff6b6b" stroke-width="0.8" />
<text x="1119" y="392" font-size="2.81" fill="#00f000" font-weight="bold"  stroke="#00f000" stroke-width=".35">ahşap çatı</text>
<rect x="1127" y="392.8" width="5" height="2.6" fill="#f0ff40"/>
<path d="M1106 410.5L1106 404.5L1118 404.5" fill="none" stroke="#ff6b6b" stroke-width="0.8" />
<text x="1119" y="403.7" font-size="2.81" fill="#00f000" font-weight="bold"  stroke="#00f000" stroke-width=".35">saçak alt</text>
<text x="1119" y="406.5" font-size="2.81" fill="#00f000" font-weight="bold"  stroke="#00f000" stroke-width=".35">kapl.</text>
<rect x="1125" y="404.4" width="5" height="2.6" fill="#f0ff40"/>
<text x="1118" y="413" font-size="2.81" fill="#00f000" font-weight="bold"  stroke="#00f000" stroke-width=".35">aydınlatma</text>
<rect x="1125" y="411.8" width="7" height="4.2" fill="#f0ff40"/>
<path d="M1100 413.8L1117 413.8" stroke="#ff6b6b" stroke-width="0.6"/>
<path d="M1057 421.5L1100 421.5" fill="none" stroke="#ff6b6b" stroke-width="0.8" />
<text x="1101" y="420.5" font-size="2.81" fill="#00f000" font-weight="bold"  stroke="#00f000" stroke-width=".35">TAŞ KAPLAMA</text>
<text x="1101" y="423.5" font-size="2.81" fill="#00f000" font-weight="bold"  stroke="#00f000" stroke-width=".35">traverten 3cm</text>
<rect x="1117" y="421.5" width="4" height="2.7" fill="#f0ff40"/>
<rect x="1029.3" y="431.5" width="67.7" height="21" fill="none" stroke="#1414ff" stroke-width="1.2" stroke-dasharray="1.6 1.2" rx="3"/>
<path d="M1096 433L1099 429.5L1125 429.5" fill="none" stroke="#1414ff" stroke-width="1.1" />
<text x="1101" y="428.7" font-size="2.81" fill="#00f000" font-weight="bold"  stroke="#00f000" stroke-width=".35">DETAY İÇİN BKZ.</text>
<path d="M1101 430.4L1125 430.4" stroke="#1414ff" stroke-width="0.6"/>
<rect x="1060" y="437.5" width="4" height="3.5" fill="#cfcfcf"/>
<path d="M1066 436.5L1075 435L1082 436L1085 435.5L1096 436" fill="none" stroke="#858585" stroke-width="1.2" />
<path d="M1084 434L1086.5 431L1089.5 431L1092 434Z" fill="#999" stroke="#555" stroke-width="0.9" />
<circle cx="1088" cy="430.5" r="1" fill="none" stroke="#555" stroke-width="0.8"/>
<rect x="1151.7" y="434.4" width="6.9" height="7.1" fill="none" stroke="#ff1a1a" stroke-width="1.2"/>
<path d="M1153.5 434.4L1153.5 441" stroke="#ff1a1a" stroke-width="0.8"/>
<path d="M1157 440.5L1228 448L1228 451.5L1157 444.5Z" fill="#ff6060" stroke="#ff3030" stroke-width="0.8" />
<path d="M1158 441.5L1228 449" fill="none" stroke="#fff" stroke-width="0.9" stroke-dasharray="2 1.5" />
<path d="M1157 445.5L1228 453.3L1278 453.3" fill="none" stroke="#2a3aff" stroke-width="1.8" />
<path d="M1157 447.5L1226 455" fill="none" stroke="#2a3aff" stroke-width="1" />
<path d="M1228 451.3L1278 452.2" fill="none" stroke="#ff1a1a" stroke-width="1.6" />
<rect x="1225" y="441" width="5" height="6.5" fill="none" stroke="#ff1a1a" stroke-width="1.1"/>
<circle cx="1227.5" cy="441.5" r="2" fill="none" stroke="#ff1a1a" stroke-width="1"/>
<rect x="1223" y="447" width="8" height="3" fill="#ff1a1a"/>
<text x="1229" y="457" font-size="3.4" fill="#2a3aff" font-weight="bold"  stroke="#2a3aff" stroke-width=".35">▲▲</text>
<path d="M1155.3 446L1155.3 479.7L1240 479.7L1240 456.5" fill="none" stroke="#7d3a3a" stroke-width="1" />
<path d="M1155.3 478L1240 478" stroke="#7d3a3a" stroke-width="0.6"/>
<path d="M1166 449L1174 478" fill="none" stroke="#7d3a3a" stroke-width="1" />
<path d="M1230.5 455L1222 478" fill="none" stroke="#7d3a3a" stroke-width="0.9" />
<rect x="1165" y="441" width="58.3" height="38.7" fill="none" stroke="#1414ff" stroke-width="1.2" stroke-dasharray="1.6 1.2" rx="4"/>
<path d="M1170 449L1187 476L1208 476L1222.4 455" fill="none" stroke="#2a3aff" stroke-width="1.3" />
<path d="M1173.5 449.5L1189 474L1206.5 474L1219.5 455" fill="none" stroke="#2a3aff" stroke-width="1.3" />
<path d="M1187 476L1187 479L1208 479L1208 476" fill="none" stroke="#2a3aff" stroke-width="1.2" />
<path d="M1188 466.500Q1197.500 470 1207.500 466.500" fill="none" stroke="#7d3a3a" stroke-width="1"/>
<path d="M1188 466.5L1207.5 466.5" stroke="#7d3a3a" stroke-width="0.7"/>
<path d="M1197.5 467L1197.5 471" stroke="#7d3a3a" stroke-width="0.8"/>
<path d="M1223.3 441.5L1232 432.2L1254 432.2" fill="none" stroke="#1414ff" stroke-width="1.1" />
<text x="1233" y="431.3" font-size="2.81" fill="#00f000" font-weight="bold"  stroke="#00f000" stroke-width=".35">DETAY İÇİN BKZ.</text>
<path d="M807 482.5L1278 482.5" stroke="#1414ff" stroke-width="1.1" stroke-dasharray="5 1 1 1"/>
<path d="M807 488.2L1151.7 488.2" stroke="#ff6b6b" stroke-width="1"/>
<path d="M807 464.5L807 473L840.5 473" fill="none" stroke="#ff6b6b" stroke-width="0.8" />
<path d="M820 464.5L820 475" stroke="#ff6b6b" stroke-width="0.8"/>
<path d="M840.5 466L840.5 475" stroke="#ff6b6b" stroke-width="0.8"/>
<text x="812.5" y="472" font-size="2.81" fill="#00f000" font-weight="bold" text-anchor="middle"  stroke="#00f000" stroke-width=".35">145</text>
<text x="830" y="472" font-size="2.81" fill="#00f000" font-weight="bold" text-anchor="middle"  stroke="#00f000" stroke-width=".35">270</text>
<path d="M840.5 466L840.5 494" stroke="#b0b0b0" stroke-width="0.8" stroke-dasharray="3 1.2"/>
<path d="M840.5 483L840.5 490" stroke="#ff6b6b" stroke-width="0.9"/>
<circle cx="840.5" cy="488.2" r="0.9" fill="#fff" stroke="#7d3a3a" stroke-width="0.7"/>
<circle cx="840.5" cy="499.5" r="4.2" fill="#fffff0" stroke="#ffff00" stroke-width="1.4"/>
<text x="840.5" y="501.6" font-size="5.8" fill="#1414ff" text-anchor="middle" stroke="#1414ff" stroke-width=".2">R</text>
<path d="M906.1 466L906.1 494" stroke="#b0b0b0" stroke-width="0.8" stroke-dasharray="3 1.2"/>
<path d="M906.1 483L906.1 490" stroke="#ff6b6b" stroke-width="0.9"/>
<circle cx="906.1" cy="488.2" r="0.9" fill="#fff" stroke="#7d3a3a" stroke-width="0.7"/>
<circle cx="906.1" cy="499.5" r="4.2" fill="#fffff0" stroke="#ffff00" stroke-width="1.4"/>
<text x="906.1" y="501.6" font-size="5.8" fill="#1414ff" text-anchor="middle" stroke="#1414ff" stroke-width=".2">S</text>
<path d="M958.6 466L958.6 494" stroke="#b0b0b0" stroke-width="0.8" stroke-dasharray="3 1.2"/>
<path d="M958.6 483L958.6 490" stroke="#ff6b6b" stroke-width="0.9"/>
<circle cx="958.6" cy="488.2" r="0.9" fill="#fff" stroke="#7d3a3a" stroke-width="0.7"/>
<circle cx="958.6" cy="499.5" r="4.2" fill="#fffff0" stroke="#ffff00" stroke-width="1.4"/>
<text x="958.6" y="501.6" font-size="5.8" fill="#1414ff" text-anchor="middle" stroke="#1414ff" stroke-width=".2">T</text>
<path d="M1011.2 448L1011.2 494" stroke="#b0b0b0" stroke-width="0.8" stroke-dasharray="3 1.2"/>
<path d="M1011.2 483L1011.2 490" stroke="#ff6b6b" stroke-width="0.9"/>
<circle cx="1011.2" cy="488.2" r="0.9" fill="#fff" stroke="#7d3a3a" stroke-width="0.7"/>
<circle cx="1011.2" cy="499.5" r="4.2" fill="#fffff0" stroke="#ffff00" stroke-width="1.4"/>
<text x="1011.2" y="501.6" font-size="5.8" fill="#1414ff" text-anchor="middle" stroke="#1414ff" stroke-width=".2">U</text>
<path d="M1024.6 448L1024.6 494" stroke="#b0b0b0" stroke-width="0.8" stroke-dasharray="3 1.2"/>
<path d="M1024.6 483L1024.6 490" stroke="#ff6b6b" stroke-width="0.9"/>
<circle cx="1024.6" cy="488.2" r="0.9" fill="#fff" stroke="#7d3a3a" stroke-width="0.7"/>
<circle cx="1024.6" cy="499.5" r="4.2" fill="#fffff0" stroke="#ffff00" stroke-width="1.4"/>
<text x="1024.6" y="501.6" font-size="5.8" fill="#1414ff" text-anchor="middle" stroke="#1414ff" stroke-width=".2">V</text>
<path d="M1064.3 448L1064.3 494" stroke="#b0b0b0" stroke-width="0.8" stroke-dasharray="3 1.2"/>
<path d="M1064.3 483L1064.3 490" stroke="#ff6b6b" stroke-width="0.9"/>
<circle cx="1064.3" cy="488.2" r="0.9" fill="#fff" stroke="#7d3a3a" stroke-width="0.7"/>
<circle cx="1064.3" cy="499.5" r="4.2" fill="#fffff0" stroke="#ffff00" stroke-width="1.4"/>
<text x="1064.3" y="501.6" font-size="5.8" fill="#1414ff" text-anchor="middle" stroke="#1414ff" stroke-width=".2">W</text>
<path d="M1116 448L1116 494" stroke="#b0b0b0" stroke-width="0.8" stroke-dasharray="3 1.2"/>
<path d="M1116 483L1116 490" stroke="#ff6b6b" stroke-width="0.9"/>
<circle cx="1116" cy="488.2" r="0.9" fill="#fff" stroke="#7d3a3a" stroke-width="0.7"/>
<circle cx="1116" cy="499.5" r="4.2" fill="#fffff0" stroke="#ffff00" stroke-width="1.4"/>
<text x="1116" y="501.6" font-size="5.8" fill="#1414ff" text-anchor="middle" stroke="#1414ff" stroke-width=".2">X</text>
<path d="M1151 448L1151 494" stroke="#b0b0b0" stroke-width="0.8" stroke-dasharray="3 1.2"/>
<path d="M1151 483L1151 490" stroke="#ff6b6b" stroke-width="0.9"/>
<circle cx="1151" cy="488.2" r="0.9" fill="#fff" stroke="#7d3a3a" stroke-width="0.7"/>
<circle cx="1151" cy="499.5" r="4.2" fill="#fffff0" stroke="#ffff00" stroke-width="1.4"/>
<text x="1151" y="501.6" font-size="5.8" fill="#1414ff" text-anchor="middle" stroke="#1414ff" stroke-width=".2">Y</text>
<text x="823.75" y="487.2" font-size="2.81" fill="#00f000" font-weight="bold" text-anchor="middle"  stroke="#00f000" stroke-width=".35">486</text>
<text x="873.3" y="487.2" font-size="2.81" fill="#00f000" font-weight="bold" text-anchor="middle"  stroke="#00f000" stroke-width=".35">951</text>
<text x="932.35" y="487.2" font-size="2.81" fill="#00f000" font-weight="bold" text-anchor="middle"  stroke="#00f000" stroke-width=".35">761</text>
<text x="984.9" y="487.2" font-size="2.81" fill="#00f000" font-weight="bold" text-anchor="middle"  stroke="#00f000" stroke-width=".35">763</text>
<text x="1017.9" y="487.2" font-size="2.81" fill="#00f000" font-weight="bold" text-anchor="middle"  stroke="#00f000" stroke-width=".35">194</text>
<text x="1044.45" y="487.2" font-size="2.81" fill="#00f000" font-weight="bold" text-anchor="middle"  stroke="#00f000" stroke-width=".35">576</text>
<text x="1090.15" y="487.2" font-size="2.81" fill="#00f000" font-weight="bold" text-anchor="middle"  stroke="#00f000" stroke-width=".35">750</text>
<text x="1133.5" y="487.2" font-size="2.81" fill="#00f000" font-weight="bold" text-anchor="middle"  stroke="#00f000" stroke-width=".35">508</text>
<circle cx="1019" cy="538.7" r="5.8" fill="#fff" stroke="#1414ff" stroke-width="1.3"/>
<path d="M1013.2 539.2L1079 539.2" stroke="#1414ff" stroke-width="1.1"/>
<text x="1019" y="537.5" font-size="4.2" fill="#1414ff" font-weight="bold" text-anchor="middle"  stroke="#1414ff" stroke-width=".35">1</text>
<text x="1019" y="542.9" font-size="3.33" fill="#00f000" font-weight="bold" text-anchor="middle" stroke="#00f000" stroke-width=".2">A3-10</text>
<text x="1028.2" y="537.7" font-size="5.4" fill="#1414ff" font-weight="bold" stroke="#1414ff" stroke-width=".3" textLength="50.8" lengthAdjust="spacingAndGlyphs">BODRUM 3 - BAĞLAR 2</text>
<text x="1028.2" y="543.1" font-size="3.6" fill="#00f000" font-weight="bold" stroke="#00f000" stroke-width=".25">ÖLÇEK 1 / 100</text>
<rect x="188" y="611.3" width="525.3" height="386.4" fill="#fff" stroke="#2a2a2a" stroke-width="1.1"/>
<rect x="204.7" y="618.8" width="500.6" height="371.2" fill="none" stroke="#f79b3e" stroke-width="1.4"/>
<path d="M210 735.3L411 735.3" stroke="#7d3a3a" stroke-width="1"/>
<path d="M232 755.8L411 755.8" stroke="#7d3a3a" stroke-width="1"/>
<path d="M210 772.3L411 772.3" stroke="#7d3a3a" stroke-width="1" stroke-dasharray="5 1.2 1.2 1.2"/>
<path d="M232 776L411 776" stroke="#7d3a3a" stroke-width="1"/>
<path d="M210 786L300 786" stroke="#7d3a3a" stroke-width="1" stroke-dasharray="5 1.2 1.2 1.2"/>
<path d="M210 790L247 790" stroke="#7d3a3a" stroke-width="1"/>
<path d="M215 808.3L247 808.3" stroke="#7d3a3a" stroke-width="1" stroke-dasharray="5 1.2 1.2 1.2"/>
<path d="M210 812.5L411 812.5" stroke="#7d3a3a" stroke-width="1" stroke-dasharray="5 1.2 1.2 1.2"/>
<path d="M213 836.4L366 836.4" stroke="#7d3a3a" stroke-width="1"/>
<path d="M213 840.7L366 840.7" stroke="#7d3a3a" stroke-width="1"/>
<path d="M213 850L366 850" stroke="#7d3a3a" stroke-width="1"/>
<path d="M210 864.6L406 864.6" stroke="#7d3a3a" stroke-width="1"/>
<path d="M210 868.5L378 868.5" stroke="#7d3a3a" stroke-width="1"/>
<path d="M210 737.5L247 737.5" stroke="#7d3a3a" stroke-width="0.8"/>
<path d="M260 672.7L315.5 672.7L315.5 693.5L489.6 693.5L489.6 672L546 672L546 708L537.3 719.8L464.3 719.8L464.3 727.6L318.4 727.6L277.2 680.5L260 700Z" fill="url(#hv)" />
<path d="M260 698L260 672.7L315.5 672.7L315.5 693.5" fill="none" stroke="#6a2a2a" stroke-width="1.3" stroke-dasharray="1.2 .8" />
<path d="M489.6 693.5L489.6 672L546 672L546 706" fill="none" stroke="#6a2a2a" stroke-width="1.3" stroke-dasharray="1.2 .8" />
<path d="M315.5 693.8L489.6 693.8" stroke="#6a2a2a" stroke-width="1"/>
<rect x="236" y="727" width="82" height="2" fill="#fff"/>
<path d="M234.8 727.6L277.2 678L318.4 727.6" fill="none" stroke="#7d3a3a" stroke-width="2.4" />
<path d="M238.2 727.6L277.2 681.6L315 727.6" fill="none" stroke="#7d3a3a" stroke-width="0.8" />
<path d="M233.2 728.1L277.2 675.8L320 728.1" fill="none" stroke="#9a6060" stroke-width="0.7" />
<rect x="464.3" y="719.8" width="41.7" height="46.7" fill="#fff"/>
<rect x="464.3" y="719.8" width="41.7" height="46.7" fill="none" stroke="#ccc" stroke-width="0.6"/>
<rect x="476.4" y="707" width="18.5" height="79" fill="url(#hs)"/>
<rect x="476.4" y="707" width="18.5" height="79" fill="none" stroke="#6e6e6e" stroke-width="0.7"/>
<circle cx="482.5" cy="713" r="1.6" fill="none" stroke="#ff1a1a" stroke-width="0.9"/>
<path d="M537.3 719.8L573.3 675L593.7 698.4L612.2 675L656 727.6V719.8Z" fill="#fff"/>
<path d="M537.3 719.8L573.3 675L609.3 719.8" fill="none" stroke="#7d3a3a" stroke-width="2.2" />
<path d="M540.7 719.8L573.3 678.6L605.9 719.8" fill="none" stroke="#7d3a3a" stroke-width="0.8" />
<path d="M535.7 720.3L573.3 672.8L610.9 720.3" fill="none" stroke="#9a6060" stroke-width="0.7" />
<path d="M593.7 698.4L612.2 675L656 727.6" fill="none" stroke="#7d3a3a" stroke-width="2.2" />
<path d="M597 698.4L612.2 679L652 727.6" fill="none" stroke="#7d3a3a" stroke-width="0.8" />
<path d="M546 696L556 696" stroke="#7d3a3a" stroke-width="0.9"/>
<path d="M597 696.8L627 696.8" stroke="#7d3a3a" stroke-width="0.8"/>
<path d="M627.5 697L627.5 719" stroke="#7d3a3a" stroke-width="0.8"/>
<path d="M629.5 700L629.5 719" stroke="#7d3a3a" stroke-width="0.8"/>
<rect x="570.5" y="711" width="5.5" height="8.8" fill="none" stroke="#7d3a3a" stroke-width="0.9"/>
<rect x="610" y="711" width="5.5" height="8.8" fill="none" stroke="#7d3a3a" stroke-width="0.9"/>
<rect x="505.2" y="719.8" width="139.1" height="46.7" fill="#fff"/>
<path d="M505.2 719.8L692.4 719.8" stroke="#ff6b6b" stroke-width="0.8"/>
<path d="M464 766.5L692.4 766.5" stroke="#7d3a3a" stroke-width="1"/>
<path d="M505.2 743L618 743" stroke="#7d3a3a" stroke-width="0.9"/>
<path d="M539.8 719.8L539.8 766.5" stroke="#7d3a3a" stroke-width="1"/>
<path d="M574.3 719.8L574.3 766.5" stroke="#7d3a3a" stroke-width="1"/>
<path d="M609.7 719.8L609.7 766.5" stroke="#7d3a3a" stroke-width="1"/>
<path d="M618 719.8L618 766.5" stroke="#ff6b6b" stroke-width="0.9"/>
<path d="M505.2 719.8L505.2 766.5" stroke="#bbb" stroke-width="0.7"/>
<path d="M644.3 719.8L644.3 766.5" stroke="#bbb" stroke-width="0.7"/>
<path d="M511 725.6L511 741.2" stroke="#ff1a1a" stroke-width="1.5"/>
<path d="M511 745L511 760.6" stroke="#ff1a1a" stroke-width="1.5"/>
<path d="M522.65 725.6L522.65 741.2" stroke="#ff1a1a" stroke-width="1.5"/>
<path d="M522.65 745L522.65 760.6" stroke="#ff1a1a" stroke-width="1.5"/>
<path d="M534.3 725.6L534.3 741.2" stroke="#ff1a1a" stroke-width="1.5"/>
<path d="M534.3 745L534.3 760.6" stroke="#ff1a1a" stroke-width="1.5"/>
<path d="M545.95 725.6L545.95 741.2" stroke="#ff1a1a" stroke-width="1.5"/>
<path d="M545.95 745L545.95 760.6" stroke="#ff1a1a" stroke-width="1.5"/>
<path d="M557.6 725.6L557.6 741.2" stroke="#ff1a1a" stroke-width="1.5"/>
<path d="M557.6 745L557.6 760.6" stroke="#ff1a1a" stroke-width="1.5"/>
<path d="M569.25 725.6L569.25 741.2" stroke="#ff1a1a" stroke-width="1.5"/>
<path d="M569.25 745L569.25 760.6" stroke="#ff1a1a" stroke-width="1.5"/>
<path d="M580.9 725.6L580.9 741.2" stroke="#ff1a1a" stroke-width="1.5"/>
<path d="M580.9 745L580.9 760.6" stroke="#ff1a1a" stroke-width="1.5"/>
<path d="M592.55 725.6L592.55 741.2" stroke="#ff1a1a" stroke-width="1.5"/>
<path d="M592.55 745L592.55 760.6" stroke="#ff1a1a" stroke-width="1.5"/>
<path d="M604.2 725.6L604.2 741.2" stroke="#ff1a1a" stroke-width="1.5"/>
<path d="M604.2 745L604.2 760.6" stroke="#ff1a1a" stroke-width="1.5"/>
<text x="505.8" y="723.5" font-size="2.81" fill="#00f000" font-weight="bold" text-anchor="middle"  stroke="#00f000" stroke-width=".35">■</text>
<text x="522.7" y="723.5" font-size="2.81" fill="#00f000" font-weight="bold" text-anchor="middle"  stroke="#00f000" stroke-width=".35">■</text>
<text x="539.8" y="723.5" font-size="2.81" fill="#00f000" font-weight="bold" text-anchor="middle"  stroke="#00f000" stroke-width=".35">■</text>
<text x="557" y="723.5" font-size="2.81" fill="#00f000" font-weight="bold" text-anchor="middle"  stroke="#00f000" stroke-width=".35">■</text>
<text x="574.3" y="723.5" font-size="2.81" fill="#00f000" font-weight="bold" text-anchor="middle"  stroke="#00f000" stroke-width=".35">■</text>
<text x="592" y="723.5" font-size="2.81" fill="#00f000" font-weight="bold" text-anchor="middle"  stroke="#00f000" stroke-width=".35">■</text>
<text x="609.7" y="723.5" font-size="2.81" fill="#00f000" font-weight="bold" text-anchor="middle"  stroke="#00f000" stroke-width=".35">■</text>
<text x="627" y="723.5" font-size="2.81" fill="#00f000" font-weight="bold" text-anchor="middle"  stroke="#00f000" stroke-width=".35">■</text>
<text x="617.5" y="731.5" font-size="2.81" fill="#00f000" font-weight="bold" text-anchor="middle"  stroke="#00f000" stroke-width=".35">■</text>
<text x="617.5" y="743.7" font-size="2.81" fill="#00f000" font-weight="bold" text-anchor="middle"  stroke="#00f000" stroke-width=".35">■</text>
<text x="617.5" y="755.5" font-size="2.81" fill="#00f000" font-weight="bold" text-anchor="middle"  stroke="#00f000" stroke-width=".35">■</text>
<text x="617.5" y="767" font-size="2.81" fill="#00f000" font-weight="bold" text-anchor="middle"  stroke="#00f000" stroke-width=".35">■</text>
<path d="M644.3 729.5L659 729.5L659 766" fill="none" stroke="#7d3a3a" stroke-width="0.9" />
<path d="M644.3 741L659 741" fill="none" stroke="#7d3a3a" stroke-width="0.8" />
<path d="M644.3 750L659 750" fill="none" stroke="#7d3a3a" stroke-width="0.8" />
<rect x="648" y="751" width="9" height="13" fill="none" stroke="#7d3a3a" stroke-width="0.8"/>
<path d="M652.5 751L652.5 764" stroke="#7d3a3a" stroke-width="0.7"/>
<path d="M657 729.5L657 766" stroke="#7d3a3a" stroke-width="0.7"/>
<path d="M232.8 730L232.8 880" stroke="#7d3a3a" stroke-width="1"/>
<path d="M234.8 730L234.8 868" stroke="#7d3a3a" stroke-width="0.8"/>
<path d="M247.4 719L247.4 855" stroke="#7d3a3a" stroke-width="1"/>
<path d="M277.6 718L277.6 786" stroke="#7d3a3a" stroke-width="0.9"/>
<path d="M308.5 717L308.5 786" stroke="#7d3a3a" stroke-width="0.9"/>
<path d="M247 718L308.5 718" stroke="#7d3a3a" stroke-width="0.9"/>
<rect x="234.8" y="752" width="10.2" height="11" fill="none" stroke="#7d3a3a" stroke-width="0.9"/>
<path d="M240 752L240 763" stroke="#7d3a3a" stroke-width="0.7"/>
<rect x="234.8" y="772" width="10.2" height="11" fill="none" stroke="#7d3a3a" stroke-width="0.9"/>
<path d="M240 772L240 783" stroke="#7d3a3a" stroke-width="0.7"/>
<rect x="234.8" y="793" width="10.2" height="11" fill="none" stroke="#7d3a3a" stroke-width="0.9"/>
<path d="M240 793L240 804" stroke="#7d3a3a" stroke-width="0.7"/>
<rect x="250.5" y="751" width="11.5" height="12" fill="none" stroke="#ff1a1a" stroke-width="1.2"/>
<path d="M250.5 751L262 763" fill="none" stroke="#7d3a3a" stroke-width="0.8" />
<path d="M262 751L250.5 763" fill="none" stroke="#7d3a3a" stroke-width="0.8" />
<path d="M240 750.5L262 750.5" stroke="#ff1a1a" stroke-width="1.6"/>
<rect x="250.5" y="771.5" width="11.5" height="12.5" fill="none" stroke="#ff1a1a" stroke-width="1.2"/>
<path d="M250.5 771.5L262 784" fill="none" stroke="#7d3a3a" stroke-width="0.8" />
<path d="M262 771.5L250.5 784" fill="none" stroke="#7d3a3a" stroke-width="0.8" />
<path d="M240 771L262 771" stroke="#ff1a1a" stroke-width="1.2"/>
<path d="M240 792.5L247 792.5" stroke="#ff1a1a" stroke-width="1.4"/>
<path d="M311.7 750L329.7 750" fill="none" stroke="#858585" stroke-width="1.4" />
<path d="M314.1 741L314.1 750" stroke="#858585" stroke-width="1"/>
<path d="M316.3 741L316.3 750" stroke="#858585" stroke-width="1"/>
<path d="M318.5 741L318.5 750" stroke="#858585" stroke-width="1"/>
<path d="M320.7 741L320.7 750" stroke="#858585" stroke-width="1"/>
<path d="M322.9 741L322.9 750" stroke="#858585" stroke-width="1"/>
<path d="M325.1 741L325.1 750" stroke="#858585" stroke-width="1"/>
<path d="M327.3 741L327.3 750" stroke="#858585" stroke-width="1"/>
<path d="M312.7 740.5L328.7 740.5" fill="none" stroke="#858585" stroke-width="1.2" />
<path d="M314.2 740.5L315.7 738.5L325.7 738.5L327.2 740.5" fill="none" stroke="#858585" stroke-width="0.8" />
<path d="M320.7 735.5L320.7 738.5" stroke="#7d3a3a" stroke-width="1.1"/>
<circle cx="320.7" cy="735.5" r="0.8" fill="none" stroke="#7d3a3a" stroke-width="0.8"/>
<rect x="313.2" y="750.8" width="15" height="2.2" fill="none" stroke="#7d3a3a" stroke-width="0.7"/>
<path d="M337.6 750L355.6 750" fill="none" stroke="#858585" stroke-width="1.4" />
<path d="M340 741L340 750" stroke="#858585" stroke-width="1"/>
<path d="M342.2 741L342.2 750" stroke="#858585" stroke-width="1"/>
<path d="M344.4 741L344.4 750" stroke="#858585" stroke-width="1"/>
<path d="M346.6 741L346.6 750" stroke="#858585" stroke-width="1"/>
<path d="M348.8 741L348.8 750" stroke="#858585" stroke-width="1"/>
<path d="M351 741L351 750" stroke="#858585" stroke-width="1"/>
<path d="M353.2 741L353.2 750" stroke="#858585" stroke-width="1"/>
<path d="M338.6 740.5L354.6 740.5" fill="none" stroke="#858585" stroke-width="1.2" />
<path d="M340.1 740.5L341.6 738.5L351.6 738.5L353.1 740.5" fill="none" stroke="#858585" stroke-width="0.8" />
<path d="M346.6 735.5L346.6 738.5" stroke="#7d3a3a" stroke-width="1.1"/>
<circle cx="346.6" cy="735.5" r="0.8" fill="none" stroke="#7d3a3a" stroke-width="0.8"/>
<rect x="339.1" y="750.8" width="15" height="2.2" fill="none" stroke="#7d3a3a" stroke-width="0.7"/>
<path d="M364 750L382 750" fill="none" stroke="#858585" stroke-width="1.4" />
<path d="M366.4 741L366.4 750" stroke="#858585" stroke-width="1"/>
<path d="M368.6 741L368.6 750" stroke="#858585" stroke-width="1"/>
<path d="M370.8 741L370.8 750" stroke="#858585" stroke-width="1"/>
<path d="M373 741L373 750" stroke="#858585" stroke-width="1"/>
<path d="M375.2 741L375.2 750" stroke="#858585" stroke-width="1"/>
<path d="M377.4 741L377.4 750" stroke="#858585" stroke-width="1"/>
<path d="M379.6 741L379.6 750" stroke="#858585" stroke-width="1"/>
<path d="M365 740.5L381 740.5" fill="none" stroke="#858585" stroke-width="1.2" />
<path d="M366.5 740.5L368 738.5L378 738.5L379.5 740.5" fill="none" stroke="#858585" stroke-width="0.8" />
<path d="M373 735.5L373 738.5" stroke="#7d3a3a" stroke-width="1.1"/>
<circle cx="373" cy="735.5" r="0.8" fill="none" stroke="#7d3a3a" stroke-width="0.8"/>
<rect x="365.5" y="750.8" width="15" height="2.2" fill="none" stroke="#7d3a3a" stroke-width="0.7"/>
<path d="M390 750L408 750" fill="none" stroke="#858585" stroke-width="1.4" />
<path d="M392.4 741L392.4 750" stroke="#858585" stroke-width="1"/>
<path d="M394.6 741L394.6 750" stroke="#858585" stroke-width="1"/>
<path d="M396.8 741L396.8 750" stroke="#858585" stroke-width="1"/>
<path d="M399 741L399 750" stroke="#858585" stroke-width="1"/>
<path d="M401.2 741L401.2 750" stroke="#858585" stroke-width="1"/>
<path d="M403.4 741L403.4 750" stroke="#858585" stroke-width="1"/>
<path d="M405.6 741L405.6 750" stroke="#858585" stroke-width="1"/>
<path d="M391 740.5L407 740.5" fill="none" stroke="#858585" stroke-width="1.2" />
<path d="M392.5 740.5L394 738.5L404 738.5L405.5 740.5" fill="none" stroke="#858585" stroke-width="0.8" />
<path d="M399 735.5L399 738.5" stroke="#7d3a3a" stroke-width="1.1"/>
<circle cx="399" cy="735.5" r="0.8" fill="none" stroke="#7d3a3a" stroke-width="0.8"/>
<rect x="391.5" y="750.8" width="15" height="2.2" fill="none" stroke="#7d3a3a" stroke-width="0.7"/>
<path d="M416 750L434 750" fill="none" stroke="#858585" stroke-width="1.4" />
<path d="M418.4 741L418.4 750" stroke="#858585" stroke-width="1"/>
<path d="M420.6 741L420.6 750" stroke="#858585" stroke-width="1"/>
<path d="M422.8 741L422.8 750" stroke="#858585" stroke-width="1"/>
<path d="M425 741L425 750" stroke="#858585" stroke-width="1"/>
<path d="M427.2 741L427.2 750" stroke="#858585" stroke-width="1"/>
<path d="M429.4 741L429.4 750" stroke="#858585" stroke-width="1"/>
<path d="M431.6 741L431.6 750" stroke="#858585" stroke-width="1"/>
<path d="M417 740.5L433 740.5" fill="none" stroke="#858585" stroke-width="1.2" />
<path d="M418.5 740.5L420 738.5L430 738.5L431.5 740.5" fill="none" stroke="#858585" stroke-width="0.8" />
<path d="M425 735.5L425 738.5" stroke="#7d3a3a" stroke-width="1.1"/>
<circle cx="425" cy="735.5" r="0.8" fill="none" stroke="#7d3a3a" stroke-width="0.8"/>
<rect x="417.5" y="750.8" width="15" height="2.2" fill="none" stroke="#7d3a3a" stroke-width="0.7"/>
<path d="M311.7 771L329.7 771" fill="none" stroke="#858585" stroke-width="1.4" />
<path d="M314.1 762L314.1 771" stroke="#858585" stroke-width="1"/>
<path d="M316.3 762L316.3 771" stroke="#858585" stroke-width="1"/>
<path d="M318.5 762L318.5 771" stroke="#858585" stroke-width="1"/>
<path d="M320.7 762L320.7 771" stroke="#858585" stroke-width="1"/>
<path d="M322.9 762L322.9 771" stroke="#858585" stroke-width="1"/>
<path d="M325.1 762L325.1 771" stroke="#858585" stroke-width="1"/>
<path d="M327.3 762L327.3 771" stroke="#858585" stroke-width="1"/>
<path d="M312.7 761.5L328.7 761.5" fill="none" stroke="#858585" stroke-width="1.2" />
<path d="M314.2 761.5L315.7 759.5L325.7 759.5L327.2 761.5" fill="none" stroke="#858585" stroke-width="0.8" />
<path d="M320.7 756.5L320.7 759.5" stroke="#7d3a3a" stroke-width="1.1"/>
<circle cx="320.7" cy="756.5" r="0.8" fill="none" stroke="#7d3a3a" stroke-width="0.8"/>
<rect x="313.2" y="771.8" width="15" height="2.2" fill="none" stroke="#7d3a3a" stroke-width="0.7"/>
<path d="M337.6 771L355.6 771" fill="none" stroke="#858585" stroke-width="1.4" />
<path d="M340 762L340 771" stroke="#858585" stroke-width="1"/>
<path d="M342.2 762L342.2 771" stroke="#858585" stroke-width="1"/>
<path d="M344.4 762L344.4 771" stroke="#858585" stroke-width="1"/>
<path d="M346.6 762L346.6 771" stroke="#858585" stroke-width="1"/>
<path d="M348.8 762L348.8 771" stroke="#858585" stroke-width="1"/>
<path d="M351 762L351 771" stroke="#858585" stroke-width="1"/>
<path d="M353.2 762L353.2 771" stroke="#858585" stroke-width="1"/>
<path d="M338.6 761.5L354.6 761.5" fill="none" stroke="#858585" stroke-width="1.2" />
<path d="M340.1 761.5L341.6 759.5L351.6 759.5L353.1 761.5" fill="none" stroke="#858585" stroke-width="0.8" />
<path d="M346.6 756.5L346.6 759.5" stroke="#7d3a3a" stroke-width="1.1"/>
<circle cx="346.6" cy="756.5" r="0.8" fill="none" stroke="#7d3a3a" stroke-width="0.8"/>
<rect x="339.1" y="771.8" width="15" height="2.2" fill="none" stroke="#7d3a3a" stroke-width="0.7"/>
<path d="M364 771L382 771" fill="none" stroke="#858585" stroke-width="1.4" />
<path d="M366.4 762L366.4 771" stroke="#858585" stroke-width="1"/>
<path d="M368.6 762L368.6 771" stroke="#858585" stroke-width="1"/>
<path d="M370.8 762L370.8 771" stroke="#858585" stroke-width="1"/>
<path d="M373 762L373 771" stroke="#858585" stroke-width="1"/>
<path d="M375.2 762L375.2 771" stroke="#858585" stroke-width="1"/>
<path d="M377.4 762L377.4 771" stroke="#858585" stroke-width="1"/>
<path d="M379.6 762L379.6 771" stroke="#858585" stroke-width="1"/>
<path d="M365 761.5L381 761.5" fill="none" stroke="#858585" stroke-width="1.2" />
<path d="M366.5 761.5L368 759.5L378 759.5L379.5 761.5" fill="none" stroke="#858585" stroke-width="0.8" />
<path d="M373 756.5L373 759.5" stroke="#7d3a3a" stroke-width="1.1"/>
<circle cx="373" cy="756.5" r="0.8" fill="none" stroke="#7d3a3a" stroke-width="0.8"/>
<rect x="365.5" y="771.8" width="15" height="2.2" fill="none" stroke="#7d3a3a" stroke-width="0.7"/>
<path d="M390 771L408 771" fill="none" stroke="#858585" stroke-width="1.4" />
<path d="M392.4 762L392.4 771" stroke="#858585" stroke-width="1"/>
<path d="M394.6 762L394.6 771" stroke="#858585" stroke-width="1"/>
<path d="M396.8 762L396.8 771" stroke="#858585" stroke-width="1"/>
<path d="M399 762L399 771" stroke="#858585" stroke-width="1"/>
<path d="M401.2 762L401.2 771" stroke="#858585" stroke-width="1"/>
<path d="M403.4 762L403.4 771" stroke="#858585" stroke-width="1"/>
<path d="M405.6 762L405.6 771" stroke="#858585" stroke-width="1"/>
<path d="M391 761.5L407 761.5" fill="none" stroke="#858585" stroke-width="1.2" />
<path d="M392.5 761.5L394 759.5L404 759.5L405.5 761.5" fill="none" stroke="#858585" stroke-width="0.8" />
<path d="M399 756.5L399 759.5" stroke="#7d3a3a" stroke-width="1.1"/>
<circle cx="399" cy="756.5" r="0.8" fill="none" stroke="#7d3a3a" stroke-width="0.8"/>
<rect x="391.5" y="771.8" width="15" height="2.2" fill="none" stroke="#7d3a3a" stroke-width="0.7"/>
<path d="M314.7 785L317.7 780L323.7 780L326.7 785" fill="none" stroke="#858585" stroke-width="1" />
<path d="M318.7 774L318.7 785" stroke="#858585" stroke-width="1"/>
<path d="M322.7 774L322.7 785" stroke="#858585" stroke-width="1"/>
<path d="M340.6 785L343.6 780L349.6 780L352.6 785" fill="none" stroke="#858585" stroke-width="1" />
<path d="M344.6 774L344.6 785" stroke="#858585" stroke-width="1"/>
<path d="M348.6 774L348.6 785" stroke="#858585" stroke-width="1"/>
<path d="M367 785L370 780L376 780L379 785" fill="none" stroke="#858585" stroke-width="1" />
<path d="M371 774L371 785" stroke="#858585" stroke-width="1"/>
<path d="M375 774L375 785" stroke="#858585" stroke-width="1"/>
<path d="M393 785L396 780L402 780L405 785" fill="none" stroke="#858585" stroke-width="1" />
<path d="M397 774L397 785" stroke="#858585" stroke-width="1"/>
<path d="M401 774L401 785" stroke="#858585" stroke-width="1"/>
<path d="M333.5 735L333.5 786" stroke="#7d3a3a" stroke-width="0.9"/>
<path d="M360 735L360 786" stroke="#7d3a3a" stroke-width="0.9"/>
<path d="M386 735L386 786" stroke="#7d3a3a" stroke-width="0.9"/>
<path d="M412 735L412 786" stroke="#7d3a3a" stroke-width="0.9"/>
<path d="M332 741H338L340 739.500L342 741H358L360 739.500L362 741H384L386 739.500L388 741H410" fill="none" stroke="#858585" stroke-width="1"/>
<rect x="247.4" y="786" width="164.4" height="32" fill="none" stroke="#ffff00" stroke-width="1.3"/>
<path d="M247.4 788.3L411.8 788.3" stroke="#ffff00" stroke-width="0.9"/>
<path d="M247.4 811L362 811" stroke="#ffff00" stroke-width="1"/>
<path d="M247.4 815.5L411.8 815.5" stroke="#ffff00" stroke-width="0.8"/>
<path d="M256 788L256 818" stroke="#ffff00" stroke-width="1.2"/>
<path d="M281 788L281 818" stroke="#ffff00" stroke-width="1.2"/>
<path d="M307 788L307 818" stroke="#ffff00" stroke-width="1.2"/>
<path d="M333 788L333 818" stroke="#ffff00" stroke-width="1.2"/>
<path d="M360 788L360 811" stroke="#ffff00" stroke-width="1.2"/>
<path d="M386 788L386 811" stroke="#ffff00" stroke-width="1.2"/>
<rect x="257" y="789" width="23" height="8.5" fill="url(#hh)"/>
<rect x="282.5" y="789" width="23.5" height="8.5" fill="url(#hh)"/>
<rect x="308.5" y="789" width="23.5" height="8.5" fill="url(#hh)"/>
<rect x="334.5" y="789" width="24.5" height="8.5" fill="url(#hh)"/>
<rect x="361.5" y="789" width="23.5" height="22" fill="url(#hh)"/>
<rect x="387.5" y="789" width="24" height="22" fill="url(#hh)"/>
<rect x="340" y="792.5" width="14" height="13.5" fill="#fff"/>
<rect x="341" y="796" width="12" height="10" fill="none" stroke="#858585" stroke-width="1.1"/>
<path d="M345 796L345 806" stroke="#858585" stroke-width="0.8"/>
<path d="M349 796L349 806" stroke="#858585" stroke-width="0.8"/>
<rect x="255" y="805" width="104" height="7.5" fill="#c4c4c4"/>
<path d="M255 805L359 805" stroke="#858585" stroke-width="1.2"/>
<path d="M255 812.5L359 812.5" stroke="#858585" stroke-width="1"/>
<path d="M257 806L257 812" stroke="#777" stroke-width="0.8"/>
<path d="M260 806L260 812" stroke="#a8a8a8" stroke-width="0.8"/>
<path d="M263 806L263 812" stroke="#777" stroke-width="0.8"/>
<path d="M266 806L266 812" stroke="#a8a8a8" stroke-width="0.8"/>
<path d="M269 806L269 812" stroke="#777" stroke-width="0.8"/>
<path d="M272 806L272 812" stroke="#a8a8a8" stroke-width="0.8"/>
<path d="M275 806L275 812" stroke="#777" stroke-width="0.8"/>
<path d="M278 806L278 812" stroke="#a8a8a8" stroke-width="0.8"/>
<path d="M281 806L281 812" stroke="#777" stroke-width="0.8"/>
<path d="M284 806L284 812" stroke="#a8a8a8" stroke-width="0.8"/>
<path d="M287 806L287 812" stroke="#777" stroke-width="0.8"/>
<path d="M290 806L290 812" stroke="#a8a8a8" stroke-width="0.8"/>
<path d="M293 806L293 812" stroke="#777" stroke-width="0.8"/>
<path d="M296 806L296 812" stroke="#a8a8a8" stroke-width="0.8"/>
<path d="M299 806L299 812" stroke="#777" stroke-width="0.8"/>
<path d="M302 806L302 812" stroke="#a8a8a8" stroke-width="0.8"/>
<path d="M305 806L305 812" stroke="#777" stroke-width="0.8"/>
<path d="M308 806L308 812" stroke="#a8a8a8" stroke-width="0.8"/>
<path d="M311 806L311 812" stroke="#777" stroke-width="0.8"/>
<path d="M314 806L314 812" stroke="#a8a8a8" stroke-width="0.8"/>
<path d="M317 806L317 812" stroke="#777" stroke-width="0.8"/>
<path d="M320 806L320 812" stroke="#a8a8a8" stroke-width="0.8"/>
<path d="M323 806L323 812" stroke="#777" stroke-width="0.8"/>
<path d="M326 806L326 812" stroke="#a8a8a8" stroke-width="0.8"/>
<path d="M329 806L329 812" stroke="#777" stroke-width="0.8"/>
<path d="M332 806L332 812" stroke="#a8a8a8" stroke-width="0.8"/>
<path d="M335 806L335 812" stroke="#777" stroke-width="0.8"/>
<path d="M338 806L338 812" stroke="#a8a8a8" stroke-width="0.8"/>
<path d="M341 806L341 812" stroke="#777" stroke-width="0.8"/>
<path d="M344 806L344 812" stroke="#a8a8a8" stroke-width="0.8"/>
<path d="M347 806L347 812" stroke="#777" stroke-width="0.8"/>
<path d="M350 806L350 812" stroke="#a8a8a8" stroke-width="0.8"/>
<path d="M353 806L353 812" stroke="#777" stroke-width="0.8"/>
<path d="M356 806L356 812" stroke="#a8a8a8" stroke-width="0.8"/>
<rect x="212" y="812" width="20.8" height="56" fill="none" stroke="#7d3a3a" stroke-width="0.9"/>
<path d="M215 812L215 868" stroke="#7d3a3a" stroke-width="0.7"/>
<rect x="217" y="820" width="13" height="20" fill="none" stroke="#7d3a3a" stroke-width="1"/>
<path d="M221 820L221 840" stroke="#7d3a3a" stroke-width="0.7"/>
<path d="M225.5 820L225.5 840" stroke="#7d3a3a" stroke-width="0.7"/>
<path d="M217.5 818L217.5 855" stroke="#ff1a1a" stroke-width="1"/>
<path d="M223 818L223 855" stroke="#ff1a1a" stroke-width="1"/>
<path d="M212 818.5L232.8 818.5" stroke="#7d3a3a" stroke-width="0.8"/>
<rect x="235" y="822" width="11" height="12" fill="none" stroke="#7d3a3a" stroke-width="0.8"/>
<rect x="234.8" y="826" width="7.2" height="12" fill="url(#hh)"/>
<rect x="246" y="842" width="10" height="10" fill="#8a5a5a"/>
<path d="M255.5 818L255.5 850" stroke="#7d3a3a" stroke-width="0.8"/>
<path d="M250 826L250 850" stroke="#7d3a3a" stroke-width="0.8"/>
<path d="M247 819.5L411 819.5" stroke="#ffff00" stroke-width="1.3"/>
<path d="M340 823.5L411 823.5" stroke="#ffff00" stroke-width="1"/>
<path d="M371 818L371 836" stroke="#ffe000" stroke-width="1.2"/>
<path d="M389 812L389 836" stroke="#ffe000" stroke-width="1.2"/>
<path d="M393.5 818L393.5 840" stroke="#ff6b6b" stroke-width="0.8"/>
<path d="M210 855.5L366 855.5" stroke="#1a2ae0" stroke-width="2.2"/>
<path d="M208.5 802.4L208.5 901.6" stroke="#1414ff" stroke-width="1.2" stroke-dasharray="2 1.2"/>
<path d="M363.5 818L365.5 822L365.5 852L368 855L376 855" fill="none" stroke="#858585" stroke-width="1.1" />
<path d="M366 833L371 829L386 829L389 833L389 838" fill="none" stroke="#858585" stroke-width="1" />
<rect x="378" y="825" width="10" height="4.5" fill="none" stroke="#e8e020" stroke-width="0.8"/>
<path d="M366 852L372 848L374 851" fill="none" stroke="#0a0" stroke-width="0.9" />
<path d="M369 853L371 850L373 853" fill="none" stroke="#2a3aff" stroke-width="1" />
<rect x="377.8" y="842.3" width="28.2" height="23.3" fill="none" stroke="#858585" stroke-width="2.2"/>
<rect x="380.5" y="845" width="23" height="17" fill="none" stroke="#999" stroke-width="0.8"/>
<rect x="378" y="862" width="28" height="7" fill="#a07070"/>
<text x="392" y="858.7" font-size="2.81" fill="#00f000" font-weight="bold" text-anchor="middle"  stroke="#00f000" stroke-width=".35">SU DEPOSU</text>
<path d="M380.5 859.5L403.5 859.5" stroke="#0c0" stroke-width="0.7"/>
<path d="M411.8 787.8L537.3 787.8" stroke="#858585" stroke-width="1.8"/>
<path d="M411.8 786.6L537.3 786.6" stroke="#1414ff" stroke-width="0.8" stroke-dasharray="1.2 1.2"/>
<path d="M411.8 789.8L537.3 789.8" stroke="#7d3a3a" stroke-width="0.7"/>
<path d="M411.8 809.2L537.3 809.2" stroke="#858585" stroke-width="1.8"/>
<path d="M411.8 808L537.3 808" stroke="#1414ff" stroke-width="0.8" stroke-dasharray="1.2 1.2"/>
<path d="M411.8 811.2L537.3 811.2" stroke="#7d3a3a" stroke-width="0.7"/>
<path d="M406 842.3L662.8 842.3" stroke="#858585" stroke-width="2.2"/>
<path d="M411.8 840.8L662.8 840.8" stroke="#1414ff" stroke-width="0.8" stroke-dasharray="1.2 1.2"/>
<path d="M411.8 844.4L662.8 844.4" stroke="#ff1a1a" stroke-width="0.9"/>
<path d="M406 869.5L662.8 869.5" stroke="#858585" stroke-width="2.4"/>
<path d="M406 871.3L662.8 871.3" stroke="#1414ff" stroke-width="0.7" stroke-dasharray="1.2 1.2"/>
<path d="M412.8 787L412.8 869" stroke="#858585" stroke-width="2"/>
<path d="M437.5 787L437.5 869" stroke="#1414ff" stroke-width="1" stroke-dasharray="1.5 1.2"/>
<path d="M465 787L465 869" stroke="#858585" stroke-width="1.3"/>
<path d="M504 787L504 869" stroke="#858585" stroke-width="1.3"/>
<path d="M537.3 787L537.3 869" stroke="#858585" stroke-width="1.3"/>
<path d="M463 788L463 869" stroke="#ff1a1a" stroke-width="0.9"/>
<path d="M467 788L467 869" stroke="#ff1a1a" stroke-width="0.9"/>
<path d="M502 788L502 869" stroke="#ff1a1a" stroke-width="0.9"/>
<path d="M506.5 788L506.5 869" stroke="#ff1a1a" stroke-width="0.9"/>
<path d="M535.2 788L535.2 869" stroke="#ff1a1a" stroke-width="0.9"/>
<path d="M417.7 777.2L450.7 736.7L483.8 775.2" fill="none" stroke="#8a7a30" stroke-width="2.8" />
<path d="M417.7 777.2L450.7 736.7L483.8 775.2" fill="none" stroke="#ffff00" stroke-width="2" />
<path d="M417.7 777.2L450.7 736.7L483.8 775.2" fill="none" stroke="#1a1aa0" stroke-width="0.9" stroke-dasharray="1.5 2" />
<rect x="447" y="733.5" width="7.5" height="5.5" fill="none" stroke="#858585" stroke-width="0.8"/>
<text x="439" y="731.5" font-size="2.5" fill="#1414ff" font-weight="bold"  stroke="#1414ff" stroke-width=".35">mahya</text>
<text x="443" y="735" font-size="2.81" fill="#00f000" font-weight="bold" text-anchor="middle"  stroke="#00f000" stroke-width=".35">+17</text>
<path d="M448.5 763L448.5 787" stroke="#858585" stroke-width="1.4"/>
<path d="M461 769L461 787" stroke="#858585" stroke-width="1.2"/>
<path d="M426 770L426 787" stroke="#858585" stroke-width="1.2"/>
<path d="M469.5 762L469.5 787" stroke="#ff1a1a" stroke-width="0.9"/>
<path d="M466 766L466 787" stroke="#ff1a1a" stroke-width="0.9"/>
<rect x="456.5" y="771" width="5.5" height="15" fill="none" stroke="#858585" stroke-width="1"/>
<rect x="420" y="759" width="8" height="13" fill="none" stroke="#ff6b6b" stroke-width="0.8"/>
<text x="432" y="781" font-size="2.81" fill="#00f000" font-weight="bold" text-anchor="middle"  stroke="#00f000" stroke-width=".35">ÇATI ARASI</text>
<text x="432" y="784.5" font-size="2.81" fill="#00f000" font-weight="bold" text-anchor="middle"  stroke="#00f000" stroke-width=".35">+17.7</text>
<text x="474" y="770" font-size="2.81" fill="#00f000" font-weight="bold" text-anchor="middle"  stroke="#00f000" stroke-width=".35">8.1</text>
<text x="459" y="769.5" font-size="2.81" fill="#00f000" font-weight="bold" text-anchor="middle"  stroke="#00f000" stroke-width=".35">YD</text>
<rect x="415" y="790.5" width="21" height="16.5" fill="none" stroke="#ff1a1a" stroke-width="0.9"/>
<text x="444" y="796.5" font-size="2.81" fill="#00f000" font-weight="bold" text-anchor="middle"  stroke="#00f000" stroke-width=".35">ODA</text>
<text x="444" y="802" font-size="2.81" fill="#00f000" font-weight="bold" text-anchor="middle"  stroke="#00f000" stroke-width=".35">YATAK ODASI</text>
<text x="444" y="806" font-size="2.81" fill="#00f000" font-weight="bold" text-anchor="middle"  stroke="#00f000" stroke-width=".35">24m²</text>
<rect x="473" y="793" width="4" height="14.5" fill="none" stroke="#858585" stroke-width="1.1"/>
<rect x="496" y="793" width="4" height="14.5" fill="none" stroke="#858585" stroke-width="1.1"/>
<rect x="517" y="793" width="4" height="14.5" fill="none" stroke="#858585" stroke-width="1.1"/>
<path d="M470 789L470 808" stroke="#ff10ff" stroke-width="1.4"/>
<path d="M518 789L518 808" stroke="#ff10ff" stroke-width="1.4"/>
<path d="M464 789L464 808" stroke="#ff1a1a" stroke-width="1.2"/>
<text x="486" y="795" font-size="2.81" fill="#00f000" font-weight="bold" text-anchor="middle"  stroke="#00f000" stroke-width=".35">WC</text>
<text x="486" y="803" font-size="2.81" fill="#00f000" font-weight="bold" text-anchor="middle"  stroke="#00f000" stroke-width=".35">KORİDOR</text>
<text x="527" y="797" font-size="2.81" fill="#00f000" font-weight="bold" text-anchor="middle"  stroke="#00f000" stroke-width=".35">ODA</text>
<text x="527" y="805" font-size="2.81" fill="#00f000" font-weight="bold" text-anchor="middle"  stroke="#00f000" stroke-width=".35">YATAK OD.</text>
<text x="498" y="785" font-size="2.81" fill="#00f000" font-weight="bold" text-anchor="middle"  stroke="#00f000" stroke-width=".35">+14</text>
<text x="512" y="785" font-size="2.81" fill="#00f000" font-weight="bold" text-anchor="middle"  stroke="#00f000" stroke-width=".35">+14</text>
<text x="526" y="785" font-size="2.81" fill="#00f000" font-weight="bold" text-anchor="middle"  stroke="#00f000" stroke-width=".35">+14</text>
<path d="M415 812L465 812" stroke="#ff1a1a" stroke-width="1"/>
<path d="M440 818.5L465 818.5" stroke="#ff1a1a" stroke-width="0.9"/>
<path d="M478 822L537 822" stroke="#858585" stroke-width="1.2"/>
<rect x="441" y="822" width="21" height="18" fill="none" stroke="#ff1a1a" stroke-width="1"/>
<rect x="462.5" y="825" width="7.5" height="15" fill="none" stroke="#ff1a1a" stroke-width="1"/>
<rect x="441" y="834.5" width="25" height="5.5" fill="url(#hs)"/>
<rect x="460" y="834" width="4.5" height="7" fill="#f0ff40"/>
<text x="451" y="827.5" font-size="2.81" fill="#00f000" font-weight="bold" text-anchor="middle"  stroke="#00f000" stroke-width=".35">MUTFAK</text>
<text x="451" y="831" font-size="2.81" fill="#00f000" font-weight="bold" text-anchor="middle"  stroke="#00f000" stroke-width=".35">18m²</text>
<text x="427" y="821" font-size="2.81" fill="#00f000" font-weight="bold" text-anchor="middle"  stroke="#00f000" stroke-width=".35">ODA</text>
<text x="427" y="825" font-size="2.81" fill="#00f000" font-weight="bold" text-anchor="middle"  stroke="#00f000" stroke-width=".35">YEMEK</text>
<rect x="479" y="826" width="5" height="15" fill="none" stroke="#858585" stroke-width="1.1"/>
<rect x="474" y="829" width="4" height="12" fill="url(#hh)"/>
<path d="M476 822L476 841" stroke="#7d3a3a" stroke-width="0.9"/>
<rect x="512" y="826" width="15" height="15" fill="none" stroke="#858585" stroke-width="1"/>
<path d="M517 826L517 841" stroke="#858585" stroke-width="0.8"/>
<path d="M522 826L522 841" stroke="#858585" stroke-width="0.8"/>
<path d="M505.5 822L505.5 841" stroke="#858585" stroke-width="1"/>
<text x="493" y="824.5" font-size="2.81" fill="#00f000" font-weight="bold" text-anchor="middle"  stroke="#00f000" stroke-width=".35">SALON</text>
<text x="493" y="832" font-size="2.81" fill="#00f000" font-weight="bold" text-anchor="middle"  stroke="#00f000" stroke-width=".35">OTURMA</text>
<text x="493" y="835" font-size="2.81" fill="#00f000" font-weight="bold" text-anchor="middle"  stroke="#00f000" stroke-width=".35">+10.8</text>
<text x="493" y="838.5" font-size="2.81" fill="#00f000" font-weight="bold" text-anchor="middle"  stroke="#00f000" stroke-width=".35">32m²</text>
<text x="519" y="824.5" font-size="2.81" fill="#00f000" font-weight="bold" text-anchor="middle"  stroke="#00f000" stroke-width=".35">ODA</text>
<text x="519" y="836" font-size="2.81" fill="#00f000" font-weight="bold" text-anchor="middle"  stroke="#00f000" stroke-width=".35">ÇALIŞMA</text>
<text x="412.5" y="817" font-size="3.12" fill="#fff" font-weight="bold"  stroke="#fff" stroke-width=".35">■</text>
<rect x="416.5" y="812" width="2.5" height="4" fill="none" stroke="#858585" stroke-width="1"/>
<path d="M463 844L463 868" stroke="#ff1a1a" stroke-width="1.2"/>
<path d="M467 844L467 868" stroke="#ff1a1a" stroke-width="1.2"/>
<path d="M502 844L502 868" stroke="#ff1a1a" stroke-width="1.2"/>
<path d="M506.5 844L506.5 868" stroke="#ff1a1a" stroke-width="1.2"/>
<rect x="470" y="850" width="6" height="16" fill="none" stroke="#858585" stroke-width="1.1"/>
<rect x="463.5" y="863" width="12.5" height="5" fill="#a06060"/>
<text x="445" y="862" font-size="2.81" fill="#00f000" font-weight="bold" text-anchor="middle"  stroke="#00f000" stroke-width=".35">+7.6</text>
<text x="491" y="862.5" font-size="2.81" fill="#00f000" font-weight="bold" text-anchor="middle"  stroke="#00f000" stroke-width=".35">TEKNİK HACİM</text>
<text x="491" y="866" font-size="2.81" fill="#00f000" font-weight="bold" text-anchor="middle"  stroke="#00f000" stroke-width=".35">-0.05</text>
<text x="560" y="862.5" font-size="2.81" fill="#00f000" font-weight="bold" text-anchor="middle"  stroke="#00f000" stroke-width=".35">OTOPARK</text>
<text x="560" y="866" font-size="2.81" fill="#00f000" font-weight="bold" text-anchor="middle"  stroke="#00f000" stroke-width=".35">-0.05</text>
<path d="M421 859.5L431 859.5L436 866" fill="none" stroke="#ff6b6b" stroke-width="0.7" />
<text x="426" y="858.5" font-size="2.81" fill="#00f000" font-weight="bold" text-anchor="middle"  stroke="#00f000" stroke-width=".35">yangın</text>
<path d="M440 864L450 862L462 868" fill="none" stroke="#858585" stroke-width="0.8" />
<path d="M542.2 766.5L542.2 842" stroke="#7d3a3a" stroke-width="1"/>
<path d="M548 766.5L548 842" stroke="#7d3a3a" stroke-width="1"/>
<path d="M574.3 766.5L574.3 842" stroke="#7d3a3a" stroke-width="1"/>
<path d="M578.2 766.5L578.2 842" stroke="#7d3a3a" stroke-width="1"/>
<path d="M601.5 766.5L601.5 842" stroke="#7d3a3a" stroke-width="1"/>
<path d="M605.4 766.5L605.4 842" stroke="#7d3a3a" stroke-width="1"/>
<path d="M634.6 766.5L634.6 842" stroke="#7d3a3a" stroke-width="1"/>
<path d="M638.5 766.5L638.5 842" stroke="#7d3a3a" stroke-width="1"/>
<path d="M537.3 785.6L662 785.6" stroke="#7d3a3a" stroke-width="1"/>
<path d="M537.3 800.4L662 800.4" stroke="#7d3a3a" stroke-width="1"/>
<path d="M537.3 809.2L662 809.2" stroke="#7d3a3a" stroke-width="1"/>
<path d="M537.3 812.1L662 812.1" stroke="#7d3a3a" stroke-width="1"/>
<path d="M537.3 801.4L662 801.4" stroke="#858585" stroke-width="0.8" stroke-dasharray="1 1"/>
<path d="M537.3 766.5L537.3 869" stroke="#ff1a1a" stroke-width="1.1"/>
<path d="M540 766.5L540 869" stroke="#ff1a1a" stroke-width="0.8"/>
<path d="M553.5 800L553.5 842" stroke="#ff6b6b" stroke-width="0.8"/>
<path d="M571.5 800L571.5 842" stroke="#ff6b6b" stroke-width="0.8"/>
<text x="552" y="806" font-size="3.12" fill="#00f000" font-weight="bold"  stroke="#00f000" stroke-width=".35">I</text>
<text x="552" y="813" font-size="3.12" fill="#00f000" font-weight="bold"  stroke="#00f000" stroke-width=".35">I</text>
<text x="569" y="794" font-size="3.12" fill="#00f000" font-weight="bold"  stroke="#00f000" stroke-width=".35">I</text>
<text x="569" y="821" font-size="3.12" fill="#00f000" font-weight="bold"  stroke="#00f000" stroke-width=".35">I</text>
<text x="552" y="827" font-size="3.12" fill="#00f000" font-weight="bold"  stroke="#00f000" stroke-width=".35">I</text>
<text x="599" y="804" font-size="2.91" fill="#00f000" font-weight="bold" text-anchor="middle"  stroke="#00f000" stroke-width=".35">AA</text>
<text x="599" y="835" font-size="2.81" fill="#00f000" font-weight="bold" text-anchor="middle"  stroke="#00f000" stroke-width=".35">SPOR SALONU</text>
<text x="599" y="839" font-size="2.81" fill="#00f000" font-weight="bold" text-anchor="middle"  stroke="#00f000" stroke-width=".35">+3.4</text>
<path d="M576 844L576 868" stroke="#ff1a1a" stroke-width="1.1"/>
<path d="M604.5 844L604.5 868" stroke="#ff1a1a" stroke-width="1.1"/>
<path d="M637 844L637 868" stroke="#ff1a1a" stroke-width="1.1"/>
<path d="M589 844L589 868" stroke="#ff1a1a" stroke-width="0.9"/>
<path d="M594.5 844L594.5 868" stroke="#ff1a1a" stroke-width="0.9"/>
<path d="M624.5 844L624.5 868" stroke="#c8c020" stroke-width="0.9"/>
<path d="M635 844L635 868" stroke="#858585" stroke-width="1"/>
<rect x="618.5" y="854" width="5.5" height="14" fill="none" stroke="#858585" stroke-width="1.1"/>
<text x="608" y="859.5" font-size="2.81" fill="#00f000" font-weight="bold" text-anchor="middle"  stroke="#00f000" stroke-width=".35">SOYUNMA</text>
<text x="608" y="863" font-size="2.81" fill="#00f000" font-weight="bold" text-anchor="middle"  stroke="#00f000" stroke-width=".35">ODASI</text>
<text x="608" y="866.5" font-size="2.81" fill="#00f000" font-weight="bold" text-anchor="middle"  stroke="#00f000" stroke-width=".35">-0.05</text>
<text x="645" y="866.5" font-size="2.81" fill="#00f000" font-weight="bold" text-anchor="middle"  stroke="#00f000" stroke-width=".35">-0.1</text>
<text x="572" y="856" font-size="3.12" fill="#00f000" font-weight="bold"  stroke="#00f000" stroke-width=".35">I</text>
<text x="592.5" y="856" font-size="3.12" fill="#00f000" font-weight="bold"  stroke="#00f000" stroke-width=".35">I</text>
<path d="M511 771L537.3 766.5L663.8 789.8" fill="none" stroke="#00e8f8" stroke-width="2.4" />
<path d="M537.3 766.5L663.8 789.8" fill="none" stroke="#ff1a1a" stroke-width="0.8" stroke-dasharray="3 1.5" />
<path d="M511 770L537.3 765.3" fill="none" stroke="#ff1a1a" stroke-width="0.8" />
<path d="M512 773L526 771" fill="none" stroke="#00e8f8" stroke-width="1" />
<path d="M520 777L520 790" stroke="#00e8f8" stroke-width="1.6"/>
<path d="M537 770L537 788" stroke="#00e8f8" stroke-width="2.2"/>
<path d="M513 776L524 776" fill="none" stroke="#00e8f8" stroke-width="0.8" />
<rect x="535.5" y="765.5" width="3.5" height="3" fill="#222"/>
<text x="545" y="770.72" font-size="1.87" fill="#0c0" font-weight="bold"  stroke="#0c0" stroke-width=".35">■</text>
<text x="553.5" y="772.28" font-size="1.87" fill="#0c0" font-weight="bold"  stroke="#0c0" stroke-width=".35">■</text>
<text x="562" y="773.85" font-size="1.87" fill="#0c0" font-weight="bold"  stroke="#0c0" stroke-width=".35">■</text>
<text x="570.5" y="775.42" font-size="1.87" fill="#0c0" font-weight="bold"  stroke="#0c0" stroke-width=".35">■</text>
<text x="579" y="776.98" font-size="1.87" fill="#0c0" font-weight="bold"  stroke="#0c0" stroke-width=".35">■</text>
<text x="587.5" y="778.55" font-size="1.87" fill="#0c0" font-weight="bold"  stroke="#0c0" stroke-width=".35">■</text>
<text x="596" y="780.11" font-size="1.87" fill="#0c0" font-weight="bold"  stroke="#0c0" stroke-width=".35">■</text>
<text x="604.5" y="781.68" font-size="1.87" fill="#0c0" font-weight="bold"  stroke="#0c0" stroke-width=".35">■</text>
<text x="613" y="783.24" font-size="1.87" fill="#0c0" font-weight="bold"  stroke="#0c0" stroke-width=".35">■</text>
<text x="621.5" y="784.81" font-size="1.87" fill="#0c0" font-weight="bold"  stroke="#0c0" stroke-width=".35">■</text>
<text x="630" y="786.38" font-size="1.87" fill="#0c0" font-weight="bold"  stroke="#0c0" stroke-width=".35">■</text>
<text x="638.5" y="787.94" font-size="1.87" fill="#0c0" font-weight="bold"  stroke="#0c0" stroke-width=".35">■</text>
<text x="647" y="789.51" font-size="1.87" fill="#0c0" font-weight="bold"  stroke="#0c0" stroke-width=".35">■</text>
<text x="655.5" y="791.07" font-size="1.87" fill="#0c0" font-weight="bold"  stroke="#0c0" stroke-width=".35">■</text>
<path d="M642 792L660 795" fill="none" stroke="#7d3a3a" stroke-width="0.9" />
<path d="M642 794.5L642 790.5" fill="none" stroke="#7d3a3a" stroke-width="0.9" />
<path d="M662.5 766L662.5 869" stroke="#858585" stroke-width="2"/>
<path d="M660 790L660 869" stroke="#ff1a1a" stroke-width="1"/>
<rect x="660" y="790" width="4.5" height="6" fill="#777"/>
<rect x="660" y="808" width="4.5" height="5" fill="#777"/>
<rect x="660" y="842" width="4.5" height="6" fill="#777"/>
<rect x="650.2" y="776.2" width="32.6" height="104.3" fill="none" stroke="#1414ff" stroke-width="1.1" stroke-dasharray="1.6 1.2" rx="3"/>
<rect x="651.5" y="821" width="7" height="21" fill="none" stroke="#858585" stroke-width="1.2"/>
<path d="M655 821L655 842" stroke="#858585" stroke-width="0.8"/>
<path d="M664.5 821L678 821L678 842" fill="none" stroke="#ff1a1a" stroke-width="0.9" />
<path d="M678.5 822L678.5 858" stroke="#00e8f8" stroke-width="1.4"/>
<path d="M680 836L680 858" stroke="#ff1a1a" stroke-width="1.1"/>
<path d="M681.5 836L681.5 852" stroke="#ff10ff" stroke-width="1"/>
<rect x="664.5" y="854" width="14" height="14" fill="none" stroke="#858585" stroke-width="1.1"/>
<rect x="666.5" y="856" width="10" height="10" fill="none" stroke="#aab8ff" stroke-width="0.9"/>
<path d="M664.5 853.5L678 853.5" stroke="#ff10ff" stroke-width="1.2"/>
<rect x="661.5" y="847.5" width="3" height="5.5" fill="#ff10ff"/>
<circle cx="679.5" cy="858.5" r="1.2" fill="none" stroke="#ff1a1a" stroke-width="0.8"/>
<path d="M679.5 853L679.5 861" stroke="#ff1a1a" stroke-width="0.9"/>
<text x="670" y="811.5" font-size="2.81" fill="#00f000" font-weight="bold"  stroke="#00f000" stroke-width=".35">alüm. doğrama</text>
<text x="670" y="814.5" font-size="2.81" fill="#00f000" font-weight="bold"  stroke="#00f000" stroke-width=".35">çift cam</text>
<rect x="681" y="813" width="4" height="3" fill="#f0ff40"/>
<path d="M663 811.5L669.5 811.5" stroke="#ff6b6b" stroke-width="0.7"/>
<path d="M692.4 718.8L692.4 870" stroke="#ff6b6b" stroke-width="0.9"/>
<path d="M688 785L688 870" stroke="#ff6b6b" stroke-width="0.7"/>
<path d="M684 718.8L697 718.8" stroke="#111" stroke-width="0.8"/>
<path d="M693.5 718.8L695.5 716.5L697.5 718.8Z" fill="#fff" stroke="#111" stroke-width="0.8" />
<text x="695.5" y="712.6" font-size="2.91" fill="#1414ff" font-weight="bold"  stroke="#1414ff" stroke-width=".35">18.900</text>
<text x="697.5" y="716" font-size="2.81" fill="#00f000" font-weight="bold"  stroke="#00f000" stroke-width=".35">+17.7</text>
<path d="M684 765.9L697 765.9" stroke="#111" stroke-width="0.8"/>
<path d="M693.5 765.9L695.5 763.6L697.5 765.9Z" fill="#fff" stroke="#111" stroke-width="0.8" />
<text x="695.5" y="759.7" font-size="2.91" fill="#1414ff" font-weight="bold"  stroke="#1414ff" stroke-width=".35">12.100</text>
<text x="697.5" y="763.1" font-size="2.81" fill="#00f000" font-weight="bold"  stroke="#00f000" stroke-width=".35">+10.8</text>
<path d="M684 785.6L697 785.6" stroke="#111" stroke-width="0.8"/>
<path d="M693.5 785.6L695.5 783.3L697.5 785.6Z" fill="#fff" stroke="#111" stroke-width="0.8" />
<text x="695.5" y="779.4" font-size="2.91" fill="#1414ff" font-weight="bold"  stroke="#1414ff" stroke-width=".35">10.800</text>
<text x="697.5" y="782.8" font-size="2.81" fill="#00f000" font-weight="bold"  stroke="#00f000" stroke-width=".35">+8.0</text>
<path d="M684 807.3L697 807.3" stroke="#111" stroke-width="0.8"/>
<path d="M693.5 807.3L695.5 805L697.5 807.3Z" fill="#fff" stroke="#111" stroke-width="0.8" />
<text x="695.5" y="801.1" font-size="2.91" fill="#1414ff" font-weight="bold"  stroke="#1414ff" stroke-width=".35">8.100</text>
<text x="697.5" y="804.5" font-size="2.81" fill="#00f000" font-weight="bold"  stroke="#00f000" stroke-width=".35">+4.8</text>
<path d="M684 840.6L697 840.6" stroke="#111" stroke-width="0.8"/>
<path d="M693.5 840.6L695.5 838.3L697.5 840.6Z" fill="#fff" stroke="#111" stroke-width="0.8" />
<text x="695.5" y="834.4" font-size="2.91" fill="#1414ff" font-weight="bold"  stroke="#1414ff" stroke-width=".35">±0.000</text>
<text x="697.5" y="837.8" font-size="2.81" fill="#00f000" font-weight="bold"  stroke="#00f000" stroke-width=".35">+0.0</text>
<path d="M684 855L697 855" stroke="#111" stroke-width="0.8"/>
<path d="M693.5 855L695.5 852.7L697.5 855Z" fill="#fff" stroke="#111" stroke-width="0.8" />
<text x="695.5" y="848.8" font-size="2.91" fill="#1414ff" font-weight="bold"  stroke="#1414ff" stroke-width=".35">-1.60</text>
<text x="697.5" y="852.2" font-size="2.81" fill="#00f000" font-weight="bold"  stroke="#00f000" stroke-width=".35">+-2.1</text>
<path d="M684 869.5L697 869.5" stroke="#111" stroke-width="0.8"/>
<path d="M693.5 869.5L695.5 867.2L697.5 869.5Z" fill="#fff" stroke="#111" stroke-width="0.8" />
<text x="695.5" y="863.3" font-size="2.91" fill="#1414ff" font-weight="bold"  stroke="#1414ff" stroke-width=".35">BODRUM</text>
<text x="697.5" y="866.7" font-size="2.81" fill="#00f000" font-weight="bold"  stroke="#00f000" stroke-width=".35">+-4.2</text>
<text x="690.3" y="743" font-size="3.12" fill="#00f000" font-weight="bold"  stroke="#00f000" stroke-width=".35">I</text>
<text x="686.3" y="743" font-size="3.12" fill="#00f000" font-weight="bold"  stroke="#00f000" stroke-width=".35">I</text>
<text x="690.3" y="777" font-size="3.12" fill="#00f000" font-weight="bold"  stroke="#00f000" stroke-width=".35">I</text>
<text x="686.3" y="777" font-size="3.12" fill="#00f000" font-weight="bold"  stroke="#00f000" stroke-width=".35">I</text>
<text x="690.3" y="797" font-size="3.12" fill="#00f000" font-weight="bold"  stroke="#00f000" stroke-width=".35">I</text>
<text x="686.3" y="797" font-size="3.12" fill="#00f000" font-weight="bold"  stroke="#00f000" stroke-width=".35">I</text>
<text x="690.3" y="825" font-size="3.12" fill="#00f000" font-weight="bold"  stroke="#00f000" stroke-width=".35">I</text>
<text x="686.3" y="825" font-size="3.12" fill="#00f000" font-weight="bold"  stroke="#00f000" stroke-width=".35">I</text>
<text x="690.3" y="849" font-size="3.12" fill="#00f000" font-weight="bold"  stroke="#00f000" stroke-width=".35">I</text>
<text x="686.3" y="849" font-size="3.12" fill="#00f000" font-weight="bold"  stroke="#00f000" stroke-width=".35">I</text>
<text x="690.3" y="863" font-size="3.12" fill="#00f000" font-weight="bold"  stroke="#00f000" stroke-width=".35">I</text>
<text x="686.3" y="863" font-size="3.12" fill="#00f000" font-weight="bold"  stroke="#00f000" stroke-width=".35">I</text>
<path d="M644 765.9L692.4 765.9" stroke="#ff6b6b" stroke-width="0.7"/>
<path d="M662 785.6L692.4 785.6" stroke="#ff6b6b" stroke-width="0.7"/>
<path d="M662 801.5L692.4 801.5" stroke="#ff6b6b" stroke-width="0.7"/>
<path d="M662 807.3L692.4 807.3" stroke="#ff6b6b" stroke-width="0.7"/>
<path d="M664 840.6L692.4 840.6" stroke="#ff6b6b" stroke-width="0.7"/>
<path d="M680 855L692.4 855" stroke="#ff6b6b" stroke-width="0.7"/>
<path d="M664 869.5L692.4 869.5" stroke="#ff6b6b" stroke-width="0.7"/>
<text x="683.5" y="803.5" font-size="4" fill="#111" >›</text>
<text x="211" y="737.5" font-size="2.81" fill="#00f000" font-weight="bold"  stroke="#00f000" stroke-width=".35">kotu</text>
<text x="211" y="740.5" font-size="2.81" fill="#00f000" font-weight="bold"  stroke="#00f000" stroke-width=".35">+21</text>
<path d="M216 739.2L292 739.2" stroke="#ff6b6b" stroke-width="0.8"/>
<path d="M252 739.2L265 759L310 759" fill="none" stroke="#ff6b6b" stroke-width="0.8" />
<circle cx="292" cy="739.2" r="0.7" fill="none" stroke="#0a0" stroke-width="0.6"/>
<text x="211" y="787" font-size="3.12" fill="#0c0" font-weight="bold"  stroke="#0c0" stroke-width=".35">→</text>
<text x="211" y="793" font-size="3.12" fill="#e8ff30" font-weight="bold"  stroke="#e8ff30" stroke-width=".35">■</text>
<path d="M437 874.4L381 874.4" fill="none" stroke="#1414ff" stroke-width="1.1" stroke-dasharray="1.6 1.2" />
<rect x="375.8" y="751.3" width="61.2" height="123.1" fill="none" stroke="#1414ff" stroke-width="1.1" stroke-dasharray="1.6 1.2" rx="4"/>
<path d="M375.8 874.4L373 885L366 885" fill="none" stroke="#1414ff" stroke-width="1.2" />
<circle cx="361.6" cy="885" r="4.6" fill="#ffffff" stroke="#1414ff" stroke-width="1.1"/>
<path d="M357 885A4.6 4.6 0 0 0 366.2 885Z" fill="#d8ff40"/>
<path d="M357 885L366.2 885" stroke="#1414ff" stroke-width="0.8"/>
<circle cx="361.6" cy="885" r="4.6" fill="none" stroke="#1414ff" stroke-width="1.1"/>
<text x="361.6" y="884.2" font-size="3.33" fill="#1414ff" font-weight="bold" text-anchor="middle"  stroke="#1414ff" stroke-width=".35">1</text>
<text x="361.6" y="888.2" font-size="2.81" fill="#00f000" font-weight="bold" text-anchor="middle"  stroke="#00f000" stroke-width=".35">A3-1</text>
<circle cx="695.5" cy="885" r="4.6" fill="#ffffff" stroke="#1414ff" stroke-width="1.1"/>
<path d="M690.9 885A4.6 4.6 0 0 0 700.1 885Z" fill="#d8ff40"/>
<path d="M690.9 885L700.1 885" stroke="#1414ff" stroke-width="0.8"/>
<circle cx="695.5" cy="885" r="4.6" fill="none" stroke="#1414ff" stroke-width="1.1"/>
<text x="695.5" y="884.2" font-size="3.33" fill="#1414ff" font-weight="bold" text-anchor="middle"  stroke="#1414ff" stroke-width=".35">1</text>
<text x="695.5" y="888.2" font-size="2.81" fill="#00f000" font-weight="bold" text-anchor="middle"  stroke="#00f000" stroke-width=".35">A3-1</text>
<path d="M682 881L686 884.6L691 885" fill="none" stroke="#1414ff" stroke-width="1.1" />
<path d="M401 658.4L334 658.4L334 735" fill="none" stroke="#ff6b6b" stroke-width="0.9" />
<text x="401.5" y="658.1" font-size="2.81" fill="#00f000" font-weight="bold"  stroke="#00f000" stroke-width=".35">ahşap kapl. lam.</text>
<text x="401.5" y="661.1" font-size="2.81" fill="#00f000" font-weight="bold"  stroke="#00f000" stroke-width=".35">çatı  kiremit</text>
<rect x="419.1" y="658.5" width="5" height="2.6" fill="#f0ff40"/>
<circle cx="334" cy="735" r="0.7" fill="none" stroke="#0a0" stroke-width="0.6"/>
<path d="M401 665L344.5 665L344.5 736" fill="none" stroke="#ff6b6b" stroke-width="0.9" />
<text x="401.5" y="665.8" font-size="2.81" fill="#00f000" font-weight="bold"  stroke="#00f000" stroke-width=".35">çatı kapl.</text>
<rect x="412.5" y="663.6" width="5" height="2.6" fill="#f0ff40"/>
<circle cx="344.5" cy="736" r="0.7" fill="none" stroke="#0a0" stroke-width="0.6"/>
<path d="M401 671.5L347 671.5L347 733" fill="none" stroke="#ff6b6b" stroke-width="0.9" />
<text x="401.5" y="672.3" font-size="2.81" fill="#00f000" font-weight="bold"  stroke="#00f000" stroke-width=".35">oluk sac</text>
<rect x="410.3" y="670.1" width="5" height="2.6" fill="#f0ff40"/>
<circle cx="347" cy="733" r="0.7" fill="none" stroke="#0a0" stroke-width="0.6"/>
<path d="M401 678L363 678L363 713.5" fill="none" stroke="#ff6b6b" stroke-width="0.9" />
<text x="401.5" y="678.8" font-size="2.81" fill="#00f000" font-weight="bold"  stroke="#00f000" stroke-width=".35">PP  boru</text>
<rect x="410.3" y="676.6" width="5" height="2.6" fill="#f0ff40"/>
<circle cx="363" cy="713.5" r="0.7" fill="none" stroke="#0a0" stroke-width="0.6"/>
<path d="M401 685L386.5 685L386.5 745" fill="none" stroke="#ff6b6b" stroke-width="0.9" />
<text x="401.5" y="684.7" font-size="2.81" fill="#00f000" font-weight="bold"  stroke="#00f000" stroke-width=".35">baca şapkası alm.</text>
<text x="401.5" y="687.7" font-size="2.81" fill="#00f000" font-weight="bold"  stroke="#00f000" stroke-width=".35">çatı  kiremit</text>
<rect x="420.2" y="685.1" width="5" height="2.6" fill="#f0ff40"/>
<circle cx="386.5" cy="745" r="0.7" fill="none" stroke="#0a0" stroke-width="0.6"/>
<path d="M233.5 688.5L253 688.5L258.5 698.5" fill="none" stroke="#ff6b6b" stroke-width="0.9" />
<path d="M253 688.5L262 688" fill="none" stroke="#ff6b6b" stroke-width="0.9" />
<text x="234" y="689.3" font-size="2.81" fill="#00f000" font-weight="bold"  stroke="#00f000" stroke-width=".35">çatı</text>
<rect x="240" y="686.7" width="6" height="3.3" fill="#f0ff40"/>
<path d="M465 658.8L449.5 658.8L449.5 753" fill="none" stroke="#ff6b6b" stroke-width="0.9" />
<text x="466" y="658.3" font-size="2.81" fill="#00f000" font-weight="bold"  stroke="#00f000" stroke-width=".35">ahşap kapl. lam.</text>
<text x="466" y="661.3" font-size="2.81" fill="#00f000" font-weight="bold"  stroke="#00f000" stroke-width=".35">çatı  kiremit</text>
<rect x="483.6" y="658.7" width="5" height="2.6" fill="#f0ff40"/>
<path d="M526 661.5L511 661.5L483.5 712" fill="none" stroke="#ff6b6b" stroke-width="0.9" />
<text x="526.5" y="661.3" font-size="2.81" fill="#00f000" font-weight="bold"  stroke="#00f000" stroke-width=".35">baca</text>
<text x="526.5" y="664.3" font-size="2.81" fill="#00f000" font-weight="bold"  stroke="#00f000" stroke-width=".35">taş  kapl.</text>
<path d="M526 669.5L514 669.5L483.5 726" fill="none" stroke="#ff6b6b" stroke-width="0.9" />
<text x="526.5" y="669.3" font-size="2.81" fill="#00f000" font-weight="bold"  stroke="#00f000" stroke-width=".35">sıva+boya</text>
<text x="526.5" y="672.3" font-size="2.81" fill="#00f000" font-weight="bold"  stroke="#00f000" stroke-width=".35">dış  cephe</text>
<rect x="536.4" y="669.7" width="5" height="2.6" fill="#f0ff40"/>
<path d="M604 665L587 665L574.5 704.5" fill="none" stroke="#ff6b6b" stroke-width="0.9" />
<text x="605" y="666" font-size="2.81" fill="#00f000" font-weight="bold"  stroke="#00f000" stroke-width=".35">çatı kiremit</text>
<rect x="618.2" y="663.8" width="5" height="2.6" fill="#f0ff40"/>
<path d="M604 671L592.5 671L611 689.5" fill="none" stroke="#ff6b6b" stroke-width="0.9" />
<path d="M592.5 671L578 681" fill="none" stroke="#ff6b6b" stroke-width="0.01" />
<text x="605" y="670.6" font-size="2.81" fill="#00f000" font-weight="bold"  stroke="#00f000" stroke-width=".35">ahşap kaplama lam.</text>
<text x="605" y="673.6" font-size="2.81" fill="#00f000" font-weight="bold"  stroke="#00f000" stroke-width=".35">çatı</text>
<rect x="624.8" y="671" width="5" height="2.6" fill="#f0ff40"/>
<path d="M630 682.5L624 682.5L614 699" fill="none" stroke="#ff6b6b" stroke-width="0.9" />
<text x="631" y="682.3" font-size="2.81" fill="#00f000" font-weight="bold"  stroke="#00f000" stroke-width=".35">alüminyum oluk</text>
<text x="631" y="685.3" font-size="2.81" fill="#00f000" font-weight="bold"  stroke="#00f000" stroke-width=".35">boyalı</text>
<rect x="646.4" y="682.7" width="5" height="2.6" fill="#f0ff40"/>
<path d="M642 706L609 706L592 736.5" fill="none" stroke="#ff6b6b" stroke-width="0.9" />
<text x="643" y="707" font-size="2.81" fill="#00f000" font-weight="bold"  stroke="#00f000" stroke-width=".35">pencere doğr.</text>
<path d="M668 735.3L627.5 735.3" fill="none" stroke="#ff6b6b" stroke-width="0.8" />
<path d="M661 735.3L644 775" fill="none" stroke="#ff6b6b" stroke-width="0.9" />
<text x="670" y="735.3" font-size="2.81" fill="#00f000" font-weight="bold"  stroke="#00f000" stroke-width=".35">sıva üzeri boya</text>
<text x="670" y="738.3" font-size="2.81" fill="#00f000" font-weight="bold"  stroke="#00f000" stroke-width=".35">dış cephe</text>
<rect x="686.5" y="735.7" width="5" height="2.6" fill="#f0ff40"/>
<path d="M282.5 715L277.6 715" fill="none" stroke="#ff6b6b" stroke-width="0.01" />
<text x="285" y="726.5" font-size="2.81" fill="#00f000" font-weight="bold"  stroke="#00f000" stroke-width=".35">mah.</text>
<path d="M278 725.6L285 725.6" stroke="#0c0" stroke-width="0.8"/>
<path d="M215 870.6L266 870.6L341 766" fill="none" stroke="#ff6b6b" stroke-width="0.9" />
<text x="215.5" y="871" font-size="2.81" fill="#00f000" font-weight="bold"  stroke="#00f000" stroke-width=".35">ahşap kaplama lam.</text>
<text x="215.5" y="874" font-size="2.81" fill="#00f000" font-weight="bold"  stroke="#00f000" stroke-width=".35">pergole</text>
<rect x="235.3" y="871.4" width="5" height="2.6" fill="#f0ff40"/>
<path d="M232 879.5L275 879.5L375 805" fill="none" stroke="#ff6b6b" stroke-width="0.9" />
<text x="215.5" y="877.5" font-size="2.81" fill="#00f000" font-weight="bold"  stroke="#00f000" stroke-width=".35">alüminyum doğr.</text>
<text x="215.5" y="880.5" font-size="2.81" fill="#00f000" font-weight="bold"  stroke="#00f000" stroke-width=".35">çift cam</text>
<text x="215.5" y="883.5" font-size="2.81" fill="#00f000" font-weight="bold"  stroke="#00f000" stroke-width=".35">ısıcam 4+12+4</text>
<rect x="224" y="878.5" width="6" height="6" fill="#f0ff40"/>
<path d="M227 815L253 828L286.5 828L286.5 811" fill="none" stroke="#ff6b6b" stroke-width="0.8" />
<text x="260" y="829" font-size="2.81" fill="#00f000" font-weight="bold"  stroke="#00f000" stroke-width=".35">ahşap korkuluk</text>
<rect x="273.5" y="826.5" width="5.5" height="3" fill="#f0ff40"/>
<path d="M362 826.5L358.5 826.5" fill="none" stroke="#ff6b6b" stroke-width="0.7" />
<text x="342" y="826" font-size="2.81" fill="#00f000" font-weight="bold"  stroke="#00f000" stroke-width=".35">ALÜM. DOĞR.</text>
<text x="342" y="831.5" font-size="2.81" fill="#00f000" font-weight="bold"  stroke="#00f000" stroke-width=".35">çift cam 4+12</text>
<rect x="342" y="824" width="16" height="3" fill="none"/>
<path d="M342 826.7L358 826.7" stroke="#0c0" stroke-width="0.6"/>
<path d="M358.5 826.5L362.5 826L365.5 820" fill="none" stroke="#ff6b6b" stroke-width="0.8" />
<path d="M210 892.9L682 892.9" stroke="#ff6b6b" stroke-width="1"/>
<path d="M249 829L249 897" stroke="#b0b0b0" stroke-width="0.8" stroke-dasharray="3 1.2"/>
<path d="M249 886L249 894.5" stroke="#ff6b6b" stroke-width="0.9"/>
<circle cx="249" cy="892.9" r="0.9" fill="#fff" stroke="#7d3a3a" stroke-width="0.7"/>
<circle cx="249" cy="901.8" r="4.2" fill="#fffff0" stroke="#ffff00" stroke-width="1.4"/>
<text x="249" y="903.9" font-size="5.8" fill="#1414ff" text-anchor="middle" stroke="#1414ff" stroke-width=".2" textLength="5.4" lengthAdjust="spacingAndGlyphs">21</text>
<path d="M281.5 829L281.5 897" stroke="#b0b0b0" stroke-width="0.8" stroke-dasharray="3 1.2"/>
<path d="M281.5 886L281.5 894.5" stroke="#ff6b6b" stroke-width="0.9"/>
<circle cx="281.5" cy="892.9" r="0.9" fill="#fff" stroke="#7d3a3a" stroke-width="0.7"/>
<circle cx="281.5" cy="901.8" r="4.2" fill="#fffff0" stroke="#ffff00" stroke-width="1.4"/>
<text x="281.5" y="903.9" font-size="5.8" fill="#1414ff" text-anchor="middle" stroke="#1414ff" stroke-width=".2" textLength="5.4" lengthAdjust="spacingAndGlyphs">19</text>
<path d="M307.5 829L307.5 897" stroke="#b0b0b0" stroke-width="0.8" stroke-dasharray="3 1.2"/>
<path d="M307.5 886L307.5 894.5" stroke="#ff6b6b" stroke-width="0.9"/>
<circle cx="307.5" cy="892.9" r="0.9" fill="#fff" stroke="#7d3a3a" stroke-width="0.7"/>
<circle cx="307.5" cy="901.8" r="4.2" fill="#fffff0" stroke="#ffff00" stroke-width="1.4"/>
<text x="307.5" y="903.9" font-size="5.8" fill="#1414ff" text-anchor="middle" stroke="#1414ff" stroke-width=".2" textLength="5.4" lengthAdjust="spacingAndGlyphs">17</text>
<path d="M333.6 829L333.6 897" stroke="#b0b0b0" stroke-width="0.8" stroke-dasharray="3 1.2"/>
<path d="M333.6 886L333.6 894.5" stroke="#ff6b6b" stroke-width="0.9"/>
<circle cx="333.6" cy="892.9" r="0.9" fill="#fff" stroke="#7d3a3a" stroke-width="0.7"/>
<circle cx="333.6" cy="901.8" r="4.2" fill="#fffff0" stroke="#ffff00" stroke-width="1.4"/>
<text x="333.6" y="903.9" font-size="5.8" fill="#1414ff" text-anchor="middle" stroke="#1414ff" stroke-width=".2" textLength="5.4" lengthAdjust="spacingAndGlyphs">16</text>
<path d="M359.9 829L359.9 897" stroke="#b0b0b0" stroke-width="0.8" stroke-dasharray="3 1.2"/>
<path d="M359.9 886L359.9 894.5" stroke="#ff6b6b" stroke-width="0.9"/>
<circle cx="359.9" cy="892.9" r="0.9" fill="#fff" stroke="#7d3a3a" stroke-width="0.7"/>
<circle cx="359.9" cy="901.8" r="4.2" fill="#fffff0" stroke="#ffff00" stroke-width="1.4"/>
<text x="359.9" y="903.9" font-size="5.8" fill="#1414ff" text-anchor="middle" stroke="#1414ff" stroke-width=".2" textLength="5.4" lengthAdjust="spacingAndGlyphs">15</text>
<path d="M386.1 872L386.1 897" stroke="#b0b0b0" stroke-width="0.8" stroke-dasharray="3 1.2"/>
<path d="M386.1 886L386.1 894.5" stroke="#ff6b6b" stroke-width="0.9"/>
<circle cx="386.1" cy="892.9" r="0.9" fill="#fff" stroke="#7d3a3a" stroke-width="0.7"/>
<circle cx="386.1" cy="901.8" r="4.2" fill="#fffff0" stroke="#ffff00" stroke-width="1.4"/>
<text x="386.1" y="903.9" font-size="5.8" fill="#1414ff" text-anchor="middle" stroke="#1414ff" stroke-width=".2" textLength="5.4" lengthAdjust="spacingAndGlyphs">14</text>
<path d="M406 872L406 897" stroke="#b0b0b0" stroke-width="0.8" stroke-dasharray="3 1.2"/>
<path d="M406 886L406 894.5" stroke="#ff6b6b" stroke-width="0.9"/>
<circle cx="406" cy="892.9" r="0.9" fill="#fff" stroke="#7d3a3a" stroke-width="0.7"/>
<circle cx="406" cy="901.8" r="4.2" fill="#fffff0" stroke="#ffff00" stroke-width="1.4"/>
<text x="406" y="903.9" font-size="5.8" fill="#1414ff" text-anchor="middle" stroke="#1414ff" stroke-width=".2" textLength="5.4" lengthAdjust="spacingAndGlyphs">13</text>
<path d="M438.5 872L438.5 897" stroke="#b0b0b0" stroke-width="0.8" stroke-dasharray="3 1.2"/>
<path d="M438.5 886L438.5 894.5" stroke="#ff6b6b" stroke-width="0.9"/>
<circle cx="438.5" cy="892.9" r="0.9" fill="#fff" stroke="#7d3a3a" stroke-width="0.7"/>
<circle cx="438.5" cy="901.8" r="4.2" fill="#fffff0" stroke="#ffff00" stroke-width="1.4"/>
<text x="438.5" y="903.9" font-size="5.8" fill="#1414ff" text-anchor="middle" stroke="#1414ff" stroke-width=".2" textLength="5.4" lengthAdjust="spacingAndGlyphs">12</text>
<path d="M465.3 872L465.3 897" stroke="#b0b0b0" stroke-width="0.8" stroke-dasharray="3 1.2"/>
<path d="M465.3 886L465.3 894.5" stroke="#ff6b6b" stroke-width="0.9"/>
<circle cx="465.3" cy="892.9" r="0.9" fill="#fff" stroke="#7d3a3a" stroke-width="0.7"/>
<circle cx="465.3" cy="901.8" r="4.2" fill="#fffff0" stroke="#ffff00" stroke-width="1.4"/>
<text x="465.3" y="903.9" font-size="5.8" fill="#1414ff" text-anchor="middle" stroke="#1414ff" stroke-width=".2" textLength="5.4" lengthAdjust="spacingAndGlyphs">11</text>
<path d="M504.2 872L504.2 897" stroke="#b0b0b0" stroke-width="0.8" stroke-dasharray="3 1.2"/>
<path d="M504.2 886L504.2 894.5" stroke="#ff6b6b" stroke-width="0.9"/>
<circle cx="504.2" cy="892.9" r="0.9" fill="#fff" stroke="#7d3a3a" stroke-width="0.7"/>
<circle cx="504.2" cy="901.8" r="4.2" fill="#fffff0" stroke="#ffff00" stroke-width="1.4"/>
<text x="504.2" y="903.9" font-size="5.8" fill="#1414ff" text-anchor="middle" stroke="#1414ff" stroke-width=".2">9</text>
<path d="M543.5 872L543.5 897" stroke="#b0b0b0" stroke-width="0.8" stroke-dasharray="3 1.2"/>
<path d="M543.5 886L543.5 894.5" stroke="#ff6b6b" stroke-width="0.9"/>
<circle cx="543.5" cy="892.9" r="0.9" fill="#fff" stroke="#7d3a3a" stroke-width="0.7"/>
<circle cx="543.5" cy="901.8" r="4.2" fill="#fffff0" stroke="#ffff00" stroke-width="1.4"/>
<text x="543.5" y="903.9" font-size="5.8" fill="#1414ff" text-anchor="middle" stroke="#1414ff" stroke-width=".2">8</text>
<path d="M576.2 872L576.2 897" stroke="#b0b0b0" stroke-width="0.8" stroke-dasharray="3 1.2"/>
<path d="M576.2 886L576.2 894.5" stroke="#ff6b6b" stroke-width="0.9"/>
<circle cx="576.2" cy="892.9" r="0.9" fill="#fff" stroke="#7d3a3a" stroke-width="0.7"/>
<circle cx="576.2" cy="901.8" r="4.2" fill="#fffff0" stroke="#ffff00" stroke-width="1.4"/>
<text x="576.2" y="903.9" font-size="5.8" fill="#1414ff" text-anchor="middle" stroke="#1414ff" stroke-width=".2">7</text>
<path d="M603 872L603 897" stroke="#b0b0b0" stroke-width="0.8" stroke-dasharray="3 1.2"/>
<path d="M603 886L603 894.5" stroke="#ff6b6b" stroke-width="0.9"/>
<circle cx="603" cy="892.9" r="0.9" fill="#fff" stroke="#7d3a3a" stroke-width="0.7"/>
<circle cx="603" cy="901.8" r="4.2" fill="#fffff0" stroke="#ffff00" stroke-width="1.4"/>
<text x="603" y="903.9" font-size="5.8" fill="#1414ff" text-anchor="middle" stroke="#1414ff" stroke-width=".2">5</text>
<path d="M633 872L633 897" stroke="#b0b0b0" stroke-width="0.8" stroke-dasharray="3 1.2"/>
<path d="M633 886L633 894.5" stroke="#ff6b6b" stroke-width="0.9"/>
<circle cx="633" cy="892.9" r="0.9" fill="#fff" stroke="#7d3a3a" stroke-width="0.7"/>
<circle cx="633" cy="901.8" r="4.2" fill="#fffff0" stroke="#ffff00" stroke-width="1.4"/>
<text x="633" y="903.9" font-size="5.8" fill="#1414ff" text-anchor="middle" stroke="#1414ff" stroke-width=".2">3</text>
<path d="M661.4 872L661.4 897" stroke="#b0b0b0" stroke-width="0.8" stroke-dasharray="3 1.2"/>
<path d="M661.4 886L661.4 894.5" stroke="#ff6b6b" stroke-width="0.9"/>
<circle cx="661.4" cy="892.9" r="0.9" fill="#fff" stroke="#7d3a3a" stroke-width="0.7"/>
<circle cx="661.4" cy="901.8" r="4.2" fill="#fffff0" stroke="#ffff00" stroke-width="1.4"/>
<text x="661.4" y="903.9" font-size="5.8" fill="#1414ff" text-anchor="middle" stroke="#1414ff" stroke-width=".2">1</text>
<path d="M680.7 872L680.7 897" stroke="#b0b0b0" stroke-width="0.8" stroke-dasharray="3 1.2"/>
<path d="M680.7 886L680.7 894.5" stroke="#ff6b6b" stroke-width="0.9"/>
<circle cx="680.7" cy="892.9" r="0.9" fill="#fff" stroke="#7d3a3a" stroke-width="0.7"/>
<circle cx="680.7" cy="901.8" r="4.2" fill="#fffff0" stroke="#ffff00" stroke-width="1.4"/>
<text x="680.7" y="903.9" font-size="5.8" fill="#1414ff" text-anchor="middle" stroke="#1414ff" stroke-width=".2">0</text>
<text x="229.5" y="891.8" font-size="2.81" fill="#00f000" font-weight="bold" text-anchor="middle"  stroke="#00f000" stroke-width=".35">566</text>
<text x="265.25" y="891.8" font-size="2.81" fill="#00f000" font-weight="bold" text-anchor="middle"  stroke="#00f000" stroke-width=".35">471</text>
<text x="294.5" y="891.8" font-size="2.81" fill="#00f000" font-weight="bold" text-anchor="middle"  stroke="#00f000" stroke-width=".35">377</text>
<text x="320.55" y="891.8" font-size="2.81" fill="#00f000" font-weight="bold" text-anchor="middle"  stroke="#00f000" stroke-width=".35">378</text>
<text x="346.75" y="891.8" font-size="2.81" fill="#00f000" font-weight="bold" text-anchor="middle"  stroke="#00f000" stroke-width=".35">381</text>
<text x="373" y="891.8" font-size="2.81" fill="#00f000" font-weight="bold" text-anchor="middle"  stroke="#00f000" stroke-width=".35">380</text>
<text x="396.05" y="891.8" font-size="2.81" fill="#00f000" font-weight="bold" text-anchor="middle"  stroke="#00f000" stroke-width=".35">289</text>
<text x="422.25" y="891.8" font-size="2.81" fill="#00f000" font-weight="bold" text-anchor="middle"  stroke="#00f000" stroke-width=".35">471</text>
<text x="451.9" y="891.8" font-size="2.81" fill="#00f000" font-weight="bold" text-anchor="middle"  stroke="#00f000" stroke-width=".35">389</text>
<text x="484.75" y="891.8" font-size="2.81" fill="#00f000" font-weight="bold" text-anchor="middle"  stroke="#00f000" stroke-width=".35">564</text>
<text x="523.85" y="891.8" font-size="2.81" fill="#00f000" font-weight="bold" text-anchor="middle"  stroke="#00f000" stroke-width=".35">570</text>
<text x="559.85" y="891.8" font-size="2.81" fill="#00f000" font-weight="bold" text-anchor="middle"  stroke="#00f000" stroke-width=".35">474</text>
<text x="589.6" y="891.8" font-size="2.81" fill="#00f000" font-weight="bold" text-anchor="middle"  stroke="#00f000" stroke-width=".35">389</text>
<text x="618" y="891.8" font-size="2.81" fill="#00f000" font-weight="bold" text-anchor="middle"  stroke="#00f000" stroke-width=".35">435</text>
<text x="647.2" y="891.8" font-size="2.81" fill="#00f000" font-weight="bold" text-anchor="middle"  stroke="#00f000" stroke-width=".35">412</text>
<text x="671.05" y="891.8" font-size="2.81" fill="#00f000" font-weight="bold" text-anchor="middle"  stroke="#00f000" stroke-width=".35">280</text>
<path d="M404 883L413 883" stroke="#ff6b6b" stroke-width="0.8"/>
<path d="M413 883L439 883" stroke="#ff6b6b" stroke-width="0.8"/>
<path d="M463 883.3L545 883.3" stroke="#ff6b6b" stroke-width="0.8"/>
<path d="M406 872L406 885" stroke="#ff6b6b" stroke-width="0.7"/>
<circle cx="406" cy="883.2" r="0.8" fill="none" stroke="#7d3a3a" stroke-width="0.6"/>
<path d="M412.5 872L412.5 885" stroke="#ff6b6b" stroke-width="0.7"/>
<circle cx="412.5" cy="883.2" r="0.8" fill="none" stroke="#7d3a3a" stroke-width="0.6"/>
<path d="M438.5 872L438.5 885" stroke="#ff6b6b" stroke-width="0.7"/>
<circle cx="438.5" cy="883.2" r="0.8" fill="none" stroke="#7d3a3a" stroke-width="0.6"/>
<path d="M465.3 872L465.3 885" stroke="#ff6b6b" stroke-width="0.7"/>
<circle cx="465.3" cy="883.2" r="0.8" fill="none" stroke="#7d3a3a" stroke-width="0.6"/>
<path d="M477 872L477 885" stroke="#ff6b6b" stroke-width="0.7"/>
<circle cx="477" cy="883.2" r="0.8" fill="none" stroke="#7d3a3a" stroke-width="0.6"/>
<path d="M504.2 872L504.2 885" stroke="#ff6b6b" stroke-width="0.7"/>
<circle cx="504.2" cy="883.2" r="0.8" fill="none" stroke="#7d3a3a" stroke-width="0.6"/>
<path d="M537 872L537 885" stroke="#ff6b6b" stroke-width="0.7"/>
<circle cx="537" cy="883.2" r="0.8" fill="none" stroke="#7d3a3a" stroke-width="0.6"/>
<path d="M543.5 872L543.5 885" stroke="#ff6b6b" stroke-width="0.7"/>
<circle cx="543.5" cy="883.2" r="0.8" fill="none" stroke="#7d3a3a" stroke-width="0.6"/>
<text x="409" y="882.2" font-size="2.81" fill="#00f000" font-weight="bold" text-anchor="middle"  stroke="#00f000" stroke-width=".35">330</text>
<text x="426" y="882.2" font-size="2.81" fill="#00f000" font-weight="bold" text-anchor="middle"  stroke="#00f000" stroke-width=".35">150</text>
<text x="471" y="882.2" font-size="2.81" fill="#00f000" font-weight="bold" text-anchor="middle"  stroke="#00f000" stroke-width=".35">150</text>
<text x="490" y="882.2" font-size="2.81" fill="#00f000" font-weight="bold" text-anchor="middle"  stroke="#00f000" stroke-width=".35">90</text>
<text x="520" y="882.2" font-size="2.81" fill="#00f000" font-weight="bold" text-anchor="middle"  stroke="#00f000" stroke-width=".35">90</text>
<text x="540" y="882.2" font-size="2.81" fill="#00f000" font-weight="bold" text-anchor="middle"  stroke="#00f000" stroke-width=".35">90</text>
<path d="M589 872L589 894" stroke="#b0b0b0" stroke-width="0.8" stroke-dasharray="3 1.2"/>
<path d="M621 872L621 894" stroke="#b0b0b0" stroke-width="0.8" stroke-dasharray="3 1.2"/>
<path d="M627 872L627 894" stroke="#b0b0b0" stroke-width="0.8" stroke-dasharray="3 1.2"/>
<path d="M635 872L635 894" stroke="#b0b0b0" stroke-width="0.8" stroke-dasharray="3 1.2"/>
<circle cx="439.7" cy="923" r="5.8" fill="#fff" stroke="#1414ff" stroke-width="1.3"/>
<path d="M433.9 923.5L473.5 923.5" stroke="#1414ff" stroke-width="1.1"/>
<text x="439.7" y="921.8" font-size="4.2" fill="#1414ff" font-weight="bold" text-anchor="middle"  stroke="#1414ff" stroke-width=".35">1</text>
<text x="439.7" y="927.2" font-size="3.33" fill="#00f000" font-weight="bold" text-anchor="middle" stroke="#00f000" stroke-width=".2">A3-10</text>
<text x="448.9" y="922" font-size="5.4" fill="#1414ff" font-weight="bold" stroke="#1414ff" stroke-width=".3" textLength="24.6" lengthAdjust="spacingAndGlyphs">BODRUM 4</text>
<text x="448.9" y="927.4" font-size="3.6" fill="#00f000" font-weight="bold" stroke="#00f000" stroke-width=".25">ÖLÇEK 1 / 100</text></svg>
<div style="left:533px;top:918.5px;width:788px;height:14.5px;background:rgba(118,118,118,.95);border-radius:2px;"></div>
<span style="left:535.20px;top:920.56px;font:11.55px/11.55px 'DejaVu Sans Mono','Liberation Mono',monospace;color:#ffffff;white-space:pre;letter-spacing:0.04px;">Autodesk DWG.  This file is a TrustedDWG last saved by an Autodesk application or Autodesk licensed application.</span>
<div style="left:533px;top:938.5px;width:60px;height:14.5px;background:rgba(118,118,118,.95);border-radius:2px;"></div>
<span style="left:535.20px;top:940.56px;font:11.55px/11.55px 'DejaVu Sans Mono','Liberation Mono',monospace;color:#ffffff;white-space:pre;letter-spacing:0.04px;">Command:</span>
<div style="left:533px;top:958.5px;width:60px;height:14.5px;background:rgba(118,118,118,.95);border-radius:2px;"></div>
<span style="left:535.20px;top:960.56px;font:11.55px/11.55px 'DejaVu Sans Mono','Liberation Mono',monospace;color:#ffffff;white-space:pre;letter-spacing:0.04px;">Command:</span>
<div style="left:473px;top:976px;width:55px;height:26px;background:rgba(108,108,108,.9);border-radius:3px 0 0 3px;"></div>
<div style="left:528px;top:976px;width:917px;height:25px;background:rgba(255,255,255,.84);border-radius:0 3px 3px 0;border-top:1px solid #8a8a8a;border-bottom:1px solid rgba(140,140,140,.55);border-right:1px solid #aaa;box-sizing:border-box;"></div>
<svg style="left:476px;top:980px;" width="7" height="19" viewBox="0 0 7 19"><path d="M1.500 0V19M5 0V19" stroke="#d4d4d4" stroke-width="2" stroke-dasharray="2 1.400"/></svg>
<svg style="left:488px;top:984px;" width="10" height="10" viewBox="0 0 10 10"><path d="M1 1L9 9M9 1L1 9" stroke="#fff" stroke-width="2"/></svg>
<svg style="left:507px;top:981px;" width="16" height="16" viewBox="0 0 16 16"><path d="M3 1.500A4.200 4.200 0 0 0 1.500 7.500Q3.500 9 5.500 8L12 15Q14 16 15 14L8 6.500Q9 4 7.500 2L5 4.500L3.200 3.800Z" fill="#fff" stroke="#555" stroke-width=".5"/></svg>
<div style="left:531px;top:981px;width:15px;height:14px;background:#e4e4e4;border:1px solid #9a9a9a;box-sizing:border-box;border-radius:2px;"></div>
<svg style="left:533px;top:984px;" width="11" height="9" viewBox="0 0 11 9"><path d="M1 1L4.500 4L1 7" fill="none" stroke="#555" stroke-width="1.2"/><path d="M6 7.500H10" stroke="#555" stroke-width="1.2"/></svg>
<svg style="left:550px;top:988px;" width="5" height="3" viewBox="0 0 5 3"><path d="M0 0H5L2.5 3Z" fill="#8a8a8a"/></svg>
<span style="left:563.50px;top:983.76px;font:italic 11.55px/11.55px 'DejaVu Sans Mono','Liberation Mono',monospace;color:#a2a2a2;letter-spacing:0.04px;">Type a command</span>
<svg style="left:1434px;top:986px;" width="9" height="6" viewBox="0 0 9 6"><path d="M0 5.500H9L4.500 0Z" fill="#222"/></svg>
<div style="left:0px;top:0px;width:1919px;height:24px;background:#5e2116;"></div>
<div style="left:41px;top:0px;width:262px;height:24px;background:linear-gradient(#b4b4b4,#a7a7a7 3px);"></div>
<div style="left:41px;top:23px;width:262px;height:1px;background:#8f8f8f;"></div>
<div style="left:0px;top:0px;width:41px;height:41px;background:linear-gradient(#d4d4d4,#c2c2c2 20%,#a0a0a0 55%,#7e7e7e);border:1px solid #0c0c0c;border-top-color:#555;box-sizing:border-box;z-index:5;"></div>
<svg style="left:4px;top:2px;z-index:6;" width="26" height="28" viewBox="0 0 26 28"><path d="M1 27L9.500 1.500H14.500L24 27H18L16.500 20.500H8.500L7 27Z M10 15.500H15.300L13 6.500Z" fill="#c4203f" fill-rule="evenodd"/><path d="M1 27L9.500 1.500L11.500 3L4.500 27Z" fill="#8e1a2a"/><path d="M3 22Q9 15 19 14.500L20 18Q11 18.500 4.500 25Z" fill="#7a1622" fill-opacity=".55"/><path d="M14.500 1.500L24 27H22L12.500 2Z" fill="#e8283c"/><path d="M2.500 24.500H6.500V27H1.500ZM19 24.500H22.500L24 27H19Z" fill="#e88a7a" fill-opacity=".8"/></svg>
<svg style="left:31px;top:18px;z-index:6;" width="8" height="5" viewBox="0 0 8 5"><path d="M0 0H8L4 5Z" fill="#262626"/></svg>
<svg style="left:50px;top:4px;" width="16" height="16" viewBox="0 0 16 16"><path d="M0 1H11L16 6V15H0Z" fill="#fff"/><path d="M11 1V6H16Z" fill="#d8d8d8"/></svg>
<svg style="left:73px;top:4px;" width="18" height="16" viewBox="0 0 18 16"><path d="M1 2H7L9 4H13V7H5L1 15Z" fill="#f4f4f4"/><path d="M5 8H17L13 15H1Z" fill="#e6e6e6"/></svg>
<svg style="left:98px;top:3px;" width="16" height="18" viewBox="0 0 16 18"><path d="M0 0H16V17H2L0 15Z" fill="#d4d4d4"/><rect x="3" y="0" width="10" height="7" fill="#fff"/><rect x="4" y="12" width="8" height="5" fill="#fff"/><rect x="5" y="13.5" width="2" height="2.5" fill="#aaa"/></svg>
<svg style="left:122px;top:3px;" width="17" height="18" viewBox="0 0 17 18"><path d="M0 0H16V17H2L0 15Z" fill="#d4d4d4"/><rect x="3" y="0" width="9" height="7" fill="#fff"/><rect x="4" y="12" width="5" height="5" fill="#fff"/><path d="M8 14L14 8L17 11L11 17H8Z" fill="#f0b760"/><path d="M14 8L15.5 6.5L18 9L17 11Z" fill="#e0504a"/></svg>
<svg style="left:147px;top:4px;" width="18" height="17" viewBox="0 0 18 17"><rect x="0" y="0" width="10" height="16" rx="1" fill="#e2e2e2"/><rect x="1.5" y="1.5" width="7" height="11" fill="#666"/><path d="M7 9H11L12 10H17V16H7Z" fill="#f2b75f"/></svg>
<svg style="left:171px;top:4px;" width="16" height="17" viewBox="0 0 16 17"><rect x="5" y="0" width="10" height="16" rx="1" fill="#e2e2e2"/><rect x="6.5" y="1.5" width="7" height="11" fill="#666"/><path d="M0 5H5V3L9 6.5L5 10V8H0Z" fill="#2f9be0"/></svg>
<svg style="left:194px;top:4px;" width="17" height="16" viewBox="0 0 17 16"><rect x="4" y="0" width="9" height="5" fill="#fff"/><rect x="0" y="5" width="17" height="8" rx="1" fill="#e0e0e0"/><rect x="3.5" y="10" width="10" height="6" fill="#fff"/><rect x="4.5" y="11" width="8" height="4.5" fill="#5ab4ea"/></svg>
<svg style="left:218px;top:6px;" width="16" height="11" viewBox="0 0 16 11"><path d="M0 5L6 0V3H10Q16 3 16 11Q14 7 10 7H6V10Z" fill="#bcbcbc"/></svg>
<svg style="left:241px;top:10px;" width="5" height="3" viewBox="0 0 5 3"><path d="M0 0H5L2.5 3Z" fill="#d0d0d0"/></svg>
<svg style="left:254px;top:6px;" width="16" height="11" viewBox="0 0 16 11"><path d="M16 5L10 0V3H6Q0 3 0 11Q2 7 6 7H10V10Z" fill="#bcbcbc"/></svg>
<svg style="left:277px;top:10px;" width="5" height="3" viewBox="0 0 5 3"><path d="M0 0H5L2.5 3Z" fill="#d0d0d0"/></svg>
<svg style="left:290px;top:8px;" width="8" height="8" viewBox="0 0 8 8"><rect x="0" y="0" width="8" height="1.5" fill="#fff"/><path d="M0 3.5H8L4 8Z" fill="#fff"/></svg>
<span style="left:656.00px;top:5.84px;font:12px/12px 'Liberation Sans',sans-serif;color:#0e0808;letter-spacing:-0.146px;">Autodesk AutoCAD 2019</span>
<span style="left:798.30px;top:5.84px;font:12px/12px 'Liberation Sans',sans-serif;color:#0e0808;letter-spacing:-0.116px;">A3-104 - A3-105 - A3-106.dwg</span>
<div style="left:1310px;top:0px;width:447px;height:24px;background:linear-gradient(#b4b4b4,#a7a7a7 3px);"></div>
<div style="left:1311px;top:23px;width:446px;height:1px;background:#8f8f8f;"></div>
<svg style="left:1314px;top:8px;" width="5" height="8" viewBox="0 0 5 8"><path d="M0 0L4.5 4L0 8Z" fill="#fff"/></svg>
<div style="left:1324px;top:1px;width:180px;height:22px;background:#7b7b7b;border:1px solid #4a4a4a;box-sizing:border-box;"></div>
<span style="left:1328.00px;top:6.77px;font:italic 11.5px/11.5px 'Liberation Sans',sans-serif;color:#d8d8d8;letter-spacing:-0.504px;">Type a keyword or phrase</span>
<svg style="left:1508px;top:4px;" width="17" height="17" viewBox="0 0 17 17"><path d="M3 6L4.500 1.500H7V6M10 6V1.500H12.500L14 6" fill="#f4f4f4" stroke="#222" stroke-width="1.100"/><rect x="1" y="6" width="6.200" height="9.500" rx="1.500" fill="#f4f4f4" stroke="#222" stroke-width="1.200"/><rect x="9.800" y="6" width="6.200" height="9.500" rx="1.500" fill="#f4f4f4" stroke="#222" stroke-width="1.200"/><rect x="7" y="6.500" width="3" height="3.500" fill="#222"/><rect x="2.500" y="10" width="3.200" height="4" fill="#cfcfcf"/><rect x="11.300" y="10" width="3.200" height="4" fill="#cfcfcf"/></svg>
<svg style="left:1532px;top:3px;" width="16" height="17" viewBox="0 0 16 17"><circle cx="8" cy="5" r="4" fill="#f4f4f4" stroke="#333" stroke-width="1"/><path d="M0.5 16.5Q1 10 5.5 9.5L8 11.5L10.5 9.5Q15 10 15.5 16.5Z" fill="#f4f4f4" stroke="#333" stroke-width="1"/></svg>
<span style="left:1553.50px;top:6.92px;font:12.5px/12.5px 'Liberation Sans',sans-serif;color:#ffffff;transform:scaleX(0.8994);transform-origin:0 0;">Sign In</span>
<svg style="left:1638px;top:11px;" width="5" height="3" viewBox="0 0 5 3"><path d="M0 0H5L2.5 3Z" fill="#fff"/></svg>
<svg style="left:1653px;top:4px;" width="18" height="16" viewBox="0 0 18 16"><path d="M0 1H3L6 10H15L17 4H4.5" fill="none" stroke="#222" stroke-width="1.5"/><circle cx="7" cy="13.5" r="1.6" fill="#222"/><circle cx="14" cy="13.5" r="1.6" fill="#222"/></svg>
<svg style="left:1678px;top:3px;" width="18" height="16" viewBox="0 0 18 16"><path d="M9 1.5L16.5 14H1.5Z" fill="none" stroke="#222" stroke-width="1.6"/><path d="M9 6L12.5 12H5.5Z" fill="#fff" stroke="#222" stroke-width="1"/></svg>
<svg style="left:1699px;top:11px;" width="5" height="3" viewBox="0 0 5 3"><path d="M0 0H5L2.5 3Z" fill="#fff"/></svg>
<div style="left:1713px;top:3px;width:1px;height:18px;background:#bdbdbd;"></div>
<svg style="left:1723px;top:3px;" width="18" height="18" viewBox="0 0 18 18"><circle cx="9" cy="9" r="7.8" fill="#fff" stroke="#222" stroke-width="1.4"/></svg>
<span style="left:1728.33px;top:6.84px;font:bold 12px/12px 'Liberation Sans',sans-serif;color:#2a2acb;">?</span>
<svg style="left:1748px;top:11px;" width="5" height="3" viewBox="0 0 5 3"><path d="M0 0H5L2.5 3Z" fill="#fff"/></svg>
<div style="left:1799px;top:11px;width:10px;height:1px;background:#ffffff;"></div>
<svg style="left:1844px;top:5px;" width="11" height="11" viewBox="0 0 11 11"><rect x="0.5" y="2.800" width="7.500" height="7.500" rx="1" fill="none" stroke="#fff" stroke-width="1"/><path d="M2.500 2.800V1.500Q2.500 0.500 3.500 0.500H9.200Q10.200 0.500 10.200 1.500V7.300Q10.200 8.300 9.200 8.300H8" fill="none" stroke="#fff" stroke-width="1"/></svg>
<svg style="left:1890px;top:6px;" width="10" height="10" viewBox="0 0 10 10"><path d="M0.400 0.400L9.600 9.600M9.600 0.400L0.400 9.600" stroke="#fff" stroke-width="1.15"/></svg>
<div style="left:0px;top:24px;width:1919px;height:21px;background:#545454;"></div>
<div style="left:0px;top:24px;width:1919px;height:1px;background:#3e3e3e;"></div>
<div style="left:46px;top:27px;width:51px;height:18px;background:linear-gradient(#646464,#5b5b5b);border:1px solid #3a3a3a;border-bottom:none;box-sizing:border-box;border-radius:2px 2px 0 0;"></div>
<span style="left:55.00px;top:29.14px;font:12px/12px 'Liberation Sans',sans-serif;color:#f4f4f4;letter-spacing:0.322px;">Home</span>
<span style="left:107.70px;top:29.14px;font:12px/12px 'Liberation Sans',sans-serif;color:#e8e8e8;letter-spacing:-0.169px;">Insert</span>
<span style="left:156.70px;top:29.14px;font:12px/12px 'Liberation Sans',sans-serif;color:#e8e8e8;letter-spacing:0.157px;">Annotate</span>
<span style="left:226.00px;top:29.14px;font:12px/12px 'Liberation Sans',sans-serif;color:#e8e8e8;letter-spacing:-0.132px;">Parametric</span>
<span style="left:302.70px;top:29.14px;font:12px/12px 'Liberation Sans',sans-serif;color:#e8e8e8;letter-spacing:-0.199px;">View</span>
<span style="left:347.70px;top:29.14px;font:12px/12px 'Liberation Sans',sans-serif;color:#e8e8e8;letter-spacing:-0.011px;">Manage</span>
<span style="left:411.00px;top:29.14px;font:12px/12px 'Liberation Sans',sans-serif;color:#e8e8e8;letter-spacing:0.329px;">Output</span>
<span style="left:469.00px;top:29.14px;font:12px/12px 'Liberation Sans',sans-serif;color:#e8e8e8;letter-spacing:0.144px;">Add-ins</span>
<span style="left:531.00px;top:29.14px;font:12px/12px 'Liberation Sans',sans-serif;color:#e8e8e8;letter-spacing:-0.061px;">Collaborate</span>
<span style="left:611.70px;top:29.14px;font:12px/12px 'Liberation Sans',sans-serif;color:#e8e8e8;letter-spacing:-0.399px;">Express Tools</span>
<span style="left:701.00px;top:29.14px;font:12px/12px 'Liberation Sans',sans-serif;color:#e8e8e8;letter-spacing:-0.181px;">Featured Apps</span>
<div style="left:788px;top:27px;width:54px;height:16px;background:#5e5e5e;border:1px solid #4f78b0;box-sizing:border-box;border-radius:2px;"></div>
<span style="left:797.30px;top:29.14px;font:12px/12px 'Liberation Sans',sans-serif;color:#f4f4f4;letter-spacing:-0.105px;">Layout</span>
<svg style="left:865px;top:31px;" width="13" height="8" viewBox="0 0 13 8"><rect x="0" y="0" width="13" height="8" rx="2.5" fill="#f0f0f0"/><path d="M3.5 5.5H9.5L6.5 2Z" fill="#333"/></svg>
<svg style="left:884px;top:34px;" width="5" height="3" viewBox="0 0 5 3"><path d="M0 0H5L2.5 3Z" fill="#f0f0f0"/></svg>
<div style="left:0px;top:45px;width:1919px;height:98px;background:#4a4a4a;"></div>
<div style="left:1671px;top:45px;width:248px;height:98px;background:linear-gradient(#4f4f4f,#454545 40%,#3b3b3b);"></div>
<div style="left:0px;top:44px;width:1919px;height:1px;background:#353535;"></div>
<div style="left:2px;top:45px;width:222px;height:80px;background:#5b5b5b;"></div>
<div style="left:2px;top:125px;width:222px;height:17px;background:linear-gradient(#525252,#4a4a4a);"></div>
<div style="left:224px;top:45px;width:1px;height:97px;background:#3f3f3f;"></div>
<div style="left:227px;top:45px;width:247px;height:80px;background:#5b5b5b;"></div>
<div style="left:227px;top:125px;width:247px;height:17px;background:linear-gradient(#525252,#4a4a4a);"></div>
<div style="left:474px;top:45px;width:1px;height:97px;background:#3f3f3f;"></div>
<div style="left:477px;top:45px;width:186px;height:80px;background:#5b5b5b;"></div>
<div style="left:477px;top:125px;width:186px;height:17px;background:linear-gradient(#525252,#4a4a4a);"></div>
<div style="left:663px;top:45px;width:1px;height:97px;background:#3f3f3f;"></div>
<div style="left:666px;top:45px;width:270px;height:80px;background:#5b5b5b;"></div>
<div style="left:666px;top:125px;width:270px;height:17px;background:linear-gradient(#525252,#4a4a4a);"></div>
<div style="left:936px;top:45px;width:1px;height:97px;background:#3f3f3f;"></div>
<div style="left:938px;top:45px;width:159px;height:80px;background:#5b5b5b;"></div>
<div style="left:938px;top:125px;width:159px;height:17px;background:linear-gradient(#525252,#4a4a4a);"></div>
<div style="left:1097px;top:45px;width:1px;height:97px;background:#3f3f3f;"></div>
<div style="left:1099px;top:45px;width:263px;height:80px;background:#5b5b5b;"></div>
<div style="left:1099px;top:125px;width:263px;height:17px;background:linear-gradient(#525252,#4a4a4a);"></div>
<div style="left:1362px;top:45px;width:1px;height:97px;background:#3f3f3f;"></div>
<div style="left:1364px;top:45px;width:68px;height:80px;background:#5b5b5b;"></div>
<div style="left:1364px;top:125px;width:68px;height:17px;background:linear-gradient(#525252,#4a4a4a);"></div>
<div style="left:1432px;top:45px;width:1px;height:97px;background:#3f3f3f;"></div>
<div style="left:1434px;top:45px;width:94px;height:80px;background:#5b5b5b;"></div>
<div style="left:1434px;top:125px;width:94px;height:17px;background:linear-gradient(#525252,#4a4a4a);"></div>
<div style="left:1528px;top:45px;width:1px;height:97px;background:#3f3f3f;"></div>
<div style="left:1531px;top:45px;width:78px;height:80px;background:#5b5b5b;"></div>
<div style="left:1531px;top:125px;width:78px;height:17px;background:linear-gradient(#525252,#4a4a4a);"></div>
<div style="left:1609px;top:45px;width:1px;height:97px;background:#3f3f3f;"></div>
<div style="left:1611px;top:45px;width:60px;height:80px;background:#5b5b5b;"></div>
<div style="left:1611px;top:125px;width:60px;height:17px;background:linear-gradient(#525252,#4a4a4a);"></div>
<div style="left:1671px;top:45px;width:1px;height:97px;background:#3f3f3f;"></div>
<div style="left:47px;top:44px;width:49px;height:1px;background:#5b5b5b;"></div>
<div style="left:0px;top:142px;width:1919px;height:1px;background:#3a3a3a;"></div>
<div style="left:0px;top:143px;width:1919px;height:1px;background:#6a6a6a;"></div>
<div style="left:0px;top:144px;width:1919px;height:1px;background:#333;"></div>
<svg style="left:4px;top:50px;" width="36" height="36" viewBox="0 0 36 36"><path d="M5 33L32 5" stroke="#e4e4e4" stroke-width="1.2"/><rect x="3.0" y="32.0" width="3" height="3" fill="#5db4ea"/><rect x="32.0" y="3.0" width="3" height="3" fill="#5db4ea"/></svg>
<span style="left:12.00px;top:88.84px;font:12px/12px 'Liberation Sans',sans-serif;color:#f2f2f2;letter-spacing:-0.172px;">Line</span>
<svg style="left:48px;top:56px;" width="38" height="24" viewBox="0 0 38 24"><path d="M5 20H22Q33 20 33 12Q33 4.5 23 4" fill="none" stroke="#e4e4e4" stroke-width="1.2"/><rect x="2.0" y="18.5" width="3" height="3" fill="#5db4ea"/><rect x="22.0" y="18.5" width="3" height="3" fill="#5db4ea"/><rect x="22.0" y="3.0" width="3" height="3" fill="#5db4ea"/></svg>
<span style="left:45.30px;top:88.84px;font:12px/12px 'Liberation Sans',sans-serif;color:#f2f2f2;">Polyline</span>
<svg style="left:98px;top:50px;" width="36" height="36" viewBox="0 0 36 36"><circle cx="17.5" cy="17.5" r="15.2" fill="none" stroke="#e4e4e4" stroke-width="1.2"/><path d="M18 18L26 10" stroke="#5db4ea" stroke-width="1.2"/><path d="M27.5 8.5L22.5 10L26 13.5Z" fill="#5db4ea"/><rect x="16.0" y="16.0" width="3" height="3" fill="#5db4ea"/></svg>
<span style="left:101.00px;top:88.84px;font:12px/12px 'Liberation Sans',sans-serif;color:#f2f2f2;letter-spacing:-0.112px;">Circle</span>
<svg style="left:113px;top:105px;" width="5" height="3" viewBox="0 0 5 3"><path d="M0 0H5L2.5 3Z" fill="#f0f0f0"/></svg>
<svg style="left:146px;top:50px;" width="36" height="36" viewBox="0 0 36 36"><path d="M3.5 31Q6 8 30 4.5" fill="none" stroke="#e4e4e4" stroke-width="1.2"/><rect x="2.0" y="30.0" width="3" height="3" fill="#5db4ea"/><rect x="10.0" y="11.0" width="3" height="3" fill="#5db4ea"/><rect x="29.0" y="3.0" width="3" height="3" fill="#5db4ea"/></svg>
<span style="left:153.00px;top:88.84px;font:12px/12px 'Liberation Sans',sans-serif;color:#f2f2f2;">Arc</span>
<svg style="left:159px;top:105px;" width="5" height="3" viewBox="0 0 5 3"><path d="M0 0H5L2.5 3Z" fill="#f0f0f0"/></svg>
<svg style="left:186px;top:53px;" width="18" height="16" viewBox="0 0 18 16"><rect x="2.5" y="3.5" width="13" height="9" fill="none" stroke="#e4e4e4" stroke-width="1.2"/><rect x="1.3" y="2.3" width="2.4" height="2.4" fill="#5db4ea"/><rect x="14.3" y="11.3" width="2.4" height="2.4" fill="#5db4ea"/></svg>
<svg style="left:210px;top:60px;" width="5" height="3" viewBox="0 0 5 3"><path d="M0 0H5L2.5 3Z" fill="#f0f0f0"/></svg>
<svg style="left:186px;top:77px;" width="18" height="16" viewBox="0 0 18 16"><ellipse cx="8.5" cy="8" rx="7" ry="4.8" fill="none" stroke="#e4e4e4" stroke-width="1.2"/><rect x="7.5" y="7.0" width="2" height="2" fill="#5db4ea"/><rect x="14.5" y="7.0" width="2" height="2" fill="#5db4ea"/><rect x="7.5" y="2.2" width="2" height="2" fill="#5db4ea"/></svg>
<svg style="left:210px;top:84px;" width="5" height="3" viewBox="0 0 5 3"><path d="M0 0H5L2.5 3Z" fill="#f0f0f0"/></svg>
<svg style="left:186px;top:100px;" width="18" height="18" viewBox="0 0 18 18"><rect x="4" y="4" width="10" height="10" fill="#3c7fb0"/><path d="M4 9L9 4M4 14L14 4M9 14L14 9" stroke="#5db4ea" stroke-width="1"/><path d="M1 3.5H17M1 14.5H17M3.5 1V17M14.5 1V17" stroke="#e4e4e4" stroke-width="1.1"/></svg>
<svg style="left:210px;top:108px;" width="5" height="3" viewBox="0 0 5 3"><path d="M0 0H5L2.5 3Z" fill="#f0f0f0"/></svg>
<span style="left:93.00px;top:126.84px;font:12px/12px 'Liberation Sans',sans-serif;color:#f2f2f2;letter-spacing:-0.251px;">Draw</span>
<svg style="left:126px;top:131px;" width="7" height="4" viewBox="0 0 7 4"><path d="M0 0H7L3.5 4Z" fill="#f0f0f0"/></svg>
<svg style="left:232px;top:53px;" width="16" height="16" viewBox="0 0 16 16"><path d="M8 1V15M1 8H15" stroke="#e4e4e4" stroke-width="1.3"/><path d="M8 0L5 3.5H11ZM8 16L5 12.5H11ZM0 8L3.5 5V11ZM16 8L12.5 5V11Z" fill="#e4e4e4"/></svg>
<span style="left:254.00px;top:55.34px;font:12px/12px 'Liberation Sans',sans-serif;color:#f2f2f2;letter-spacing:0.164px;">Move</span>
<svg style="left:232px;top:76px;" width="17" height="18" viewBox="0 0 17 18"><circle cx="5" cy="5" r="3" fill="none" stroke="#e4e4e4" stroke-width="1.2"/><path d="M10 3H14V8" fill="none" stroke="#e4e4e4" stroke-width="1.2"/><path d="M14 9.5L12 6.5H16Z" fill="#e4e4e4"/><circle cx="7" cy="13.5" r="3" fill="none" stroke="#5db4ea" stroke-width="1.2"/><circle cx="13" cy="13.5" r="3" fill="none" stroke="#5db4ea" stroke-width="1.2"/></svg>
<span style="left:254.00px;top:79.34px;font:12px/12px 'Liberation Sans',sans-serif;color:#f2f2f2;">Copy</span>
<svg style="left:232px;top:100px;" width="18" height="18" viewBox="0 0 18 18"><path d="M1.5 1.5H7.5V15.5H1.5Z" fill="none" stroke="#e4e4e4" stroke-width="1.2"/><path d="M10 2L16 16.5H8" fill="none" stroke="#5db4ea" stroke-width="1.2"/><path d="M5 12.5H10" stroke="#e4e4e4" stroke-width="1.2"/><path d="M12 12.5L9 10.5V14.5Z" fill="#e4e4e4"/></svg>
<span style="left:254.00px;top:103.34px;font:12px/12px 'Liberation Sans',sans-serif;color:#f2f2f2;letter-spacing:-0.145px;">Stretch</span>
<svg style="left:305px;top:52px;" width="17" height="18" viewBox="0 0 17 18"><path d="M10.5 3.6A6.5 6.5 0 1 0 15 10" fill="none" stroke="#e4e4e4" stroke-width="1.3"/><path d="M9 0.5L13.5 3.5L9 6.5Z" fill="#e4e4e4"/></svg>
<span style="left:326.00px;top:55.34px;font:12px/12px 'Liberation Sans',sans-serif;color:#f2f2f2;letter-spacing:-0.143px;">Rotate</span>
<svg style="left:304px;top:77px;" width="18" height="16" viewBox="0 0 18 16"><path d="M7.5 1.5V14.5H1.5Z" fill="none" stroke="#e4e4e4" stroke-width="1.2"/><path d="M10.5 1.5V14.5H16.5Z" fill="none" stroke="#5db4ea" stroke-width="1.2"/></svg>
<span style="left:326.00px;top:79.34px;font:12px/12px 'Liberation Sans',sans-serif;color:#f2f2f2;letter-spacing:0.279px;">Mirror</span>
<svg style="left:304px;top:100px;" width="18" height="18" viewBox="0 0 18 18"><path d="M1.5 8V1.5H16.5V16.5H11" fill="none" stroke="#5db4ea" stroke-width="1.2"/><rect x="1.5" y="8.5" width="8" height="8" fill="none" stroke="#e4e4e4" stroke-width="1.2"/></svg>
<span style="left:326.00px;top:103.34px;font:12px/12px 'Liberation Sans',sans-serif;color:#f2f2f2;transform:scaleX(0.8994);transform-origin:0 0;">Scale</span>
<div style="left:370px;top:50px;width:68px;height:22px;background:linear-gradient(#6a6a6a,#5a5a5a 50%,#626262);border:1px solid #2e2e2e;box-sizing:border-box;border-radius:2px;"></div>
<div style="left:425px;top:51px;width:12px;height:20px;background:linear-gradient(#7a7a7a,#6a6a6a);border-left:1px solid #3a3a3a;"></div>
<svg style="left:375px;top:52px;" width="18" height="18" viewBox="0 0 18 18"><path d="M0 2.5H6" stroke="#5db4ea" stroke-width="1.1" stroke-dasharray="1.6 1"/><path d="M11 2.5H16" stroke="#e4e4e4" stroke-width="1.1"/><path d="M4 3L11 13M12 1L8 13" stroke="#e4e4e4" stroke-width="1.5"/><circle cx="8.5" cy="15" r="1.8" fill="none" stroke="#e4e4e4" stroke-width="1.1"/><circle cx="13" cy="13.5" r="1.8" fill="none" stroke="#e4e4e4" stroke-width="1.1"/></svg>
<span style="left:395.50px;top:55.34px;font:12px/12px 'Liberation Sans',sans-serif;color:#f2f2f2;letter-spacing:-0.261px;">Trim</span>
<svg style="left:429px;top:60px;" width="5" height="3" viewBox="0 0 5 3"><path d="M0 0H5L2.5 3Z" fill="#f0f0f0"/></svg>
<svg style="left:373px;top:76px;" width="18" height="18" viewBox="0 0 18 18"><path d="M2 17V13" stroke="#e4e4e4" stroke-width="1.2"/><path d="M2 12Q2 2 12 1.5" fill="none" stroke="#5db4ea" stroke-width="1.2"/><path d="M13 1.5H17" stroke="#e4e4e4" stroke-width="1.2"/></svg>
<span style="left:395.50px;top:79.34px;font:12px/12px 'Liberation Sans',sans-serif;color:#f2f2f2;letter-spacing:-0.139px;">Fillet</span>
<svg style="left:431px;top:84px;" width="5" height="3" viewBox="0 0 5 3"><path d="M0 0H5L2.5 3Z" fill="#f0f0f0"/></svg>
<svg style="left:374px;top:102px;" width="16" height="15" viewBox="0 0 16 15"><rect x="1" y="0.8" width="5" height="5" fill="none" stroke="#e4e4e4" stroke-width="1.1"/><rect x="9.5" y="0.8" width="5" height="5" fill="none" stroke="#5db4ea" stroke-width="1.1"/><rect x="1" y="9" width="5" height="5" fill="none" stroke="#5db4ea" stroke-width="1.1"/><rect x="9.5" y="9" width="5" height="5" fill="none" stroke="#5db4ea" stroke-width="1.1"/></svg>
<span style="left:395.50px;top:103.34px;font:12px/12px 'Liberation Sans',sans-serif;color:#f2f2f2;letter-spacing:-0.234px;">Array</span>
<svg style="left:431px;top:108px;" width="5" height="3" viewBox="0 0 5 3"><path d="M0 0H5L2.5 3Z" fill="#f0f0f0"/></svg>
<svg style="left:448px;top:52px;" width="19" height="18" viewBox="0 0 19 18"><path d="M4 13L14 1.5L18 4L9 15Z" fill="#f3bd6a"/><path d="M4 13L6.5 10L10.5 13L9 15.5Q5 17 4 13Z" fill="#e8464a"/><path d="M0 16.5H3" stroke="#e4e4e4" stroke-width="1"/><path d="M8 16.5H17" stroke="#5db4ea" stroke-width="1"/></svg>
<svg style="left:448px;top:77px;" width="18" height="16" viewBox="0 0 18 16"><rect x="3.5" y="5.5" width="9" height="9" fill="none" stroke="#e4e4e4" stroke-width="1.2"/><path d="M1 7L5 1.5H17V10L13 15M12.5 5.5L17 1.5M1 7V14.5" fill="none" stroke="#5db4ea" stroke-width="1.2"/></svg>
<svg style="left:448px;top:102px;" width="18" height="14" viewBox="0 0 18 14"><path d="M17 1H7Q1 1 1 6.5Q1 12.5 7 12.5H17" fill="none" stroke="#5db4ea" stroke-width="1.2"/><path d="M17 4H8Q4.5 4 4.5 6.5Q4.5 9.5 8 9.5H17" fill="none" stroke="#5db4ea" stroke-width="1.2"/></svg>
<span style="left:325.50px;top:126.84px;font:12px/12px 'Liberation Sans',sans-serif;color:#f2f2f2;letter-spacing:0.359px;">Modify</span>
<svg style="left:369px;top:131px;" width="7" height="4" viewBox="0 0 7 4"><path d="M0 0H7L3.5 4Z" fill="#f0f0f0"/></svg>
<span style="left:487.16px;top:49.11px;font:38.5px/38.5px 'Liberation Sans',sans-serif;color:#dcdcdc;">A</span>
<span style="left:489.60px;top:88.84px;font:12px/12px 'Liberation Sans',sans-serif;color:#f2f2f2;letter-spacing:-0.402px;">Text</span>
<svg style="left:497px;top:105px;" width="5" height="3" viewBox="0 0 5 3"><path d="M0 0H5L2.5 3Z" fill="#f0f0f0"/></svg>
<svg style="left:534px;top:51px;" width="36" height="34" viewBox="0 0 36 34"><path d="M2.5 1V33M33.5 1V33" stroke="#e4e4e4" stroke-width="1.1"/><path d="M4 8H32" stroke="#e4e4e4" stroke-width="1.1"/><path d="M3 8L7 6V10ZM33 8L29 6V10Z" fill="#e4e4e4"/><path d="M18 17V23M10 20L13.5 24.5M26 20L22.5 24.5M6.5 28L11.5 29M29.5 28L24.5 29" stroke="#f3bd6a" stroke-width="2.2" stroke-linecap="round"/></svg>
<span style="left:524.20px;top:88.84px;font:12px/12px 'Liberation Sans',sans-serif;color:#f2f2f2;letter-spacing:-0.010px;">Dimension</span>
<svg style="left:588px;top:53px;" width="18" height="16" viewBox="0 0 18 16"><path d="M1.5 0V16M16.5 0V16" stroke="#e4e4e4" stroke-width="1.1"/><path d="M3 6H15" stroke="#5db4ea" stroke-width="1.1"/><path d="M2 6L5 4.5V7.5ZM16 6L13 4.5V7.5Z" fill="#5db4ea"/></svg>
<span style="left:610.20px;top:55.34px;font:12px/12px 'Liberation Sans',sans-serif;color:#f2f2f2;letter-spacing:-0.177px;">Linear</span>
<svg style="left:650px;top:60px;" width="5" height="3" viewBox="0 0 5 3"><path d="M0 0H5L2.5 3Z" fill="#f0f0f0"/></svg>
<svg style="left:588px;top:77px;" width="18" height="16" viewBox="0 0 18 16"><circle cx="13" cy="4.5" r="3.2" fill="none" stroke="#e4e4e4" stroke-width="1.1"/><path d="M10 5Q6 5 3 13" fill="none" stroke="#e4e4e4" stroke-width="1.1"/><path d="M1.5 15.5L2 10.5L5.5 12.5Z" fill="#e4e4e4"/></svg>
<span style="left:610.20px;top:79.34px;font:12px/12px 'Liberation Sans',sans-serif;color:#f2f2f2;letter-spacing:-0.344px;">Leader</span>
<svg style="left:653px;top:84px;" width="5" height="3" viewBox="0 0 5 3"><path d="M0 0H5L2.5 3Z" fill="#f0f0f0"/></svg>
<svg style="left:588px;top:101px;" width="18" height="16" viewBox="0 0 18 16"><rect x="1.5" y="1.5" width="15" height="13" fill="none" stroke="#e4e4e4" stroke-width="1.2"/><path d="M1.5 5H16.5M1.5 8.2H16.5M1.5 11.4H16.5M6.5 5V14.5M11.5 5V14.5" stroke="#e4e4e4" stroke-width="1"/></svg>
<span style="left:611.00px;top:103.34px;font:12px/12px 'Liberation Sans',sans-serif;color:#f2f2f2;letter-spacing:-0.538px;">Table</span>
<span style="left:533.50px;top:126.84px;font:12px/12px 'Liberation Sans',sans-serif;color:#f2f2f2;letter-spacing:0.212px;">Annotation</span>
<svg style="left:599px;top:131px;" width="7" height="4" viewBox="0 0 7 4"><path d="M0 0H7L3.5 4Z" fill="#f0f0f0"/></svg>
<svg style="left:679px;top:52px;" width="34" height="33" viewBox="0 0 34 33"><path d="M10 0H28L19 7H1Z" fill="#dadada"/><path d="M10 7.5H24L19 13H1Z" fill="#d2d2d2"/><path d="M10 13.5H20L19 19H1Z" fill="#cacaca"/><rect x="19" y="14" width="14" height="18" rx="1" fill="#f0f0f0"/><rect x="21" y="16.5" width="10" height="7" fill="#4aa6e6"/><path d="M22 26.5H30M30 29H22" stroke="#555" stroke-width="1"/><path d="M30 26.5L28 25V28ZM22 29L24 27.5V30.5Z" fill="#555"/></svg>
<span style="left:681.99px;top:89.14px;font:12px/12px 'Liberation Sans',sans-serif;color:#f2f2f2;">Layer</span>
<span style="left:670.30px;top:103.84px;font:12px/12px 'Liberation Sans',sans-serif;color:#f2f2f2;letter-spacing:-0.189px;">Properties</span>
<div style="left:727px;top:50px;width:208px;height:22px;background:linear-gradient(#4c4c4c,#404040);border:1px solid #2c2c2c;box-sizing:border-box;border-radius:2px;"></div>
<svg style="left:733px;top:53px;" width="13" height="16" viewBox="0 0 13 16"><circle cx="6" cy="6" r="5" fill="#f3bd6a"/><rect x="4" y="11" width="4.4" height="3.5" fill="#f4f4f4"/></svg>
<svg style="left:750px;top:53px;" width="16" height="16" viewBox="0 0 16 16"><circle cx="8" cy="8" r="4" fill="#f3bd6a"/><path d="M8 0.5V3M8 13V15.5M0.5 8H3M13 8H15.5M2.7 2.7L4.5 4.5M11.5 11.5L13.3 13.3M2.7 13.3L4.5 11.5M11.5 4.5L13.3 2.7" stroke="#f3bd6a" stroke-width="1.2"/></svg>
<svg style="left:768px;top:53px;" width="17" height="17" viewBox="0 0 17 17"><rect x="3" y="3" width="8" height="8" fill="#777"/><path d="M1 4V1H4M9 1H12V4M1 9V12H4" fill="none" stroke="#ddd" stroke-width="1.2"/><circle cx="12" cy="12" r="2.6" fill="#f3bd6a"/><path d="M12 7.5V8.5M12 15.5V16.5M7.5 12H8.5M15.5 12H16.5M9 9L9.6 9.6M15 15L14.4 14.4M9 15L9.6 14.4M15 9L14.4 9.6" stroke="#f3bd6a" stroke-width="1"/></svg>
<svg style="left:788px;top:52px;" width="16" height="17" viewBox="0 0 16 17"><path d="M8.5 8V4.5Q8.5 1.5 11.5 1.5Q14.5 1.5 14.5 4.5" fill="none" stroke="#f3bd6a" stroke-width="1.8"/><rect x="1" y="8" width="10.5" height="8" fill="#f3bd6a"/><rect x="5.5" y="10.5" width="1.5" height="3" fill="#7a5a20"/></svg>
<div style="left:809px;top:54.5px;width:14px;height:14px;background:#ffffff;border:1.5px solid #111;box-sizing:border-box;"></div>
<span style="left:828.00px;top:55.34px;font:12px/12px 'Liberation Sans',sans-serif;color:#f2f2f2;">0</span>
<svg style="left:926px;top:60px;" width="7" height="4" viewBox="0 0 7 4"><path d="M0 0H7L3.5 4Z" fill="#f0f0f0"/></svg>
<svg style="left:731px;top:78px;" width="18" height="17" viewBox="0 0 18 17"><path d="M4 1H13L9 5H0Z" fill="#d8d8d8"/><circle cx="12" cy="8.5" r="3.3" fill="#5db4ea"/><rect x="10.6" y="11.8" width="2.8" height="2.6" fill="#f4f4f4"/></svg>
<svg style="left:755px;top:78px;" width="18" height="17" viewBox="0 0 18 17"><path d="M3 0H12L9 3H0Z" fill="#d8d8d8"/><path d="M3 3.5H12L9 6.5H0Z" fill="#5db4ea"/><path d="M3 7H12L9 10H0Z" fill="#d8d8d8"/><path d="M16 8.5L11 13.5" stroke="#e4e4e4" stroke-width="1.2"/><path d="M9.5 15L10.5 11L13.5 14Z" fill="#e4e4e4"/></svg>
<svg style="left:779px;top:78px;" width="18" height="17" viewBox="0 0 18 17"><path d="M4 1H13L9 5H0Z" fill="#d8d8d8"/><path d="M12.5 6.5V14.5M9 8.5L16 12.5M16 8.5L9 12.5" stroke="#5db4ea" stroke-width="1.3"/></svg>
<svg style="left:803px;top:78px;" width="18" height="17" viewBox="0 0 18 17"><path d="M4 1H13L9 5H0Z" fill="#d8d8d8"/><path d="M11 10V8.5Q11 6.5 13 6.5Q15 6.5 15 8.5V10" fill="none" stroke="#5db4ea" stroke-width="1.2"/><rect x="9.5" y="10" width="7" height="5.5" fill="#5db4ea"/></svg>
<svg style="left:827px;top:76px;" width="18" height="19" viewBox="0 0 18 19"><circle cx="9" cy="3.5" r="3" fill="#cfcfcf"/><path d="M5 6H17L13 10.5H1Z" fill="#5db4ea"/><path d="M3 11.5H14L11.5 14.5H0.5Z" fill="#d8d8d8"/><path d="M3 15.5H14L11.5 18.5H0.5Z" fill="#d8d8d8"/></svg>
<span style="left:848.20px;top:79.34px;font:12px/12px 'Liberation Sans',sans-serif;color:#f2f2f2;letter-spacing:-0.033px;">Make Current</span>
<svg style="left:731px;top:102px;" width="18" height="17" viewBox="0 0 18 17"><path d="M3 0H12L9 3H0Z" fill="#d8d8d8"/><path d="M3 3.5H12L9 6.5H0Z" fill="#cfcfcf"/><path d="M3 7H12L9 10H0Z" fill="#d8d8d8"/><circle cx="12.5" cy="9.5" r="3.3" fill="#f3bd6a"/><rect x="11.1" y="12.8" width="2.8" height="2.6" fill="#f4f4f4"/></svg>
<svg style="left:755px;top:102px;" width="18" height="17" viewBox="0 0 18 17"><path d="M3 0H12L9 3H0Z" fill="#d8d8d8"/><path d="M3 3.5H12L9 6.5H0Z" fill="#5db4ea"/><path d="M3 7H12L9 10H0Z" fill="#d8d8d8"/><path d="M10.5 15.5L15.5 10.5" stroke="#e4e4e4" stroke-width="1.2"/><path d="M17 9L16 13L13 10Z" fill="#e4e4e4"/></svg>
<svg style="left:779px;top:102px;" width="18" height="17" viewBox="0 0 18 17"><path d="M3 0H12L9 3H0Z" fill="#d8d8d8"/><path d="M3 3.5H12L9 6.5H0Z" fill="#cfcfcf"/><path d="M3 7H12L9 10H0Z" fill="#d8d8d8"/><circle cx="12.5" cy="11.5" r="2.4" fill="#f3bd6a"/><path d="M12.5 7.5V8.3M12.5 14.7V15.5M8.5 11.5H9.3M15.7 11.5H16.5M9.7 8.7L10.3 9.3M15.3 14.3L14.7 13.7M9.7 14.3L10.3 13.7M15.3 8.7L14.7 9.3" stroke="#f3bd6a" stroke-width="1"/></svg>
<svg style="left:803px;top:102px;" width="18" height="17" viewBox="0 0 18 17"><path d="M4 1H13L9 5H0Z" fill="#d8d8d8"/><path d="M12.5 10.5V9Q12.5 7 14.5 7Q16.5 7 16.5 9" fill="none" stroke="#f3bd6a" stroke-width="1.3"/><rect x="8" y="10.5" width="7" height="5.5" fill="#f3bd6a"/></svg>
<svg style="left:827px;top:102px;" width="19" height="18" viewBox="0 0 19 18"><path d="M3 0H12L9 3H0Z" fill="#d8d8d8"/><path d="M3 3.5H12L9 6.5H0Z" fill="#cfcfcf"/><path d="M3 7H12L9 10H0Z" fill="#d8d8d8"/><path d="M8 12L12 8.5L16 13L12 16.5Z" fill="#f3bd6a"/><path d="M12 8.5L14.5 6L18.5 10.5L16 13Z" fill="#f0f0f0"/></svg>
<span style="left:848.20px;top:103.34px;font:12px/12px 'Liberation Sans',sans-serif;color:#f2f2f2;letter-spacing:-0.066px;">Match Layer</span>
<span style="left:778.20px;top:126.84px;font:12px/12px 'Liberation Sans',sans-serif;color:#f2f2f2;letter-spacing:-0.536px;">Layers</span>
<svg style="left:818px;top:131px;" width="7" height="4" viewBox="0 0 7 4"><path d="M0 0H7L3.5 4Z" fill="#f0f0f0"/></svg>
<svg style="left:943px;top:50px;" width="33" height="33" viewBox="0 0 33 33"><path d="M15 0H28L32 4V24H15Z" fill="#5db4ea"/><path d="M28 0V4H32Z" fill="#bfe2f8"/><rect x="1.5" y="10.5" width="20" height="14" fill="#777" stroke="#dcdcdc" stroke-width="1.2"/><circle cx="22" cy="24" r="7.5" fill="#7d7d7d" fill-opacity=".75" stroke="#dcdcdc" stroke-width="1.2"/><rect x="0" y="23" width="3" height="3" fill="#dcdcdc"/></svg>
<span style="left:945.30px;top:88.34px;font:12px/12px 'Liberation Sans',sans-serif;color:#f2f2f2;letter-spacing:-0.252px;">Insert</span>
<svg style="left:957px;top:104px;" width="5" height="3" viewBox="0 0 5 3"><path d="M0 0H5L2.5 3Z" fill="#f0f0f0"/></svg>
<svg style="left:982px;top:52px;" width="18" height="18" viewBox="0 0 18 18"><rect x="2.5" y="5.5" width="8" height="7" fill="#777" stroke="#dcdcdc" stroke-width="1.1"/><circle cx="11" cy="13" r="3" fill="#7d7d7d" stroke="#dcdcdc" stroke-width="1.1"/><rect x="1" y="12" width="2" height="2" fill="#dcdcdc"/><path d="M12 0.5L13 3.2L15.8 2L14.6 4.8L17.5 6L14.6 7.2L15.8 10L13 8.8L12 11.5L11 8.8L8.2 10L9.4 7.2L6.5 6L9.4 4.8L8.2 2L11 3.2Z" fill="#f3bd6a"/></svg>
<span style="left:1004.40px;top:55.34px;font:12px/12px 'Liberation Sans',sans-serif;color:#f2f2f2;letter-spacing:-0.320px;">Create</span>
<svg style="left:982px;top:76px;" width="18" height="18" viewBox="0 0 18 18"><rect x="2.5" y="5.5" width="8" height="7" fill="#777" stroke="#dcdcdc" stroke-width="1.1"/><circle cx="11" cy="13" r="3" fill="#7d7d7d" stroke="#dcdcdc" stroke-width="1.1"/><rect x="1" y="12" width="2" height="2" fill="#dcdcdc"/><path d="M7 9L13 2.5L15.5 5L9.5 11.5L6.5 12Z" fill="#f3bd6a"/><path d="M13 2.5L14.3 1L17 3.5L15.5 5Z" fill="#e8464a"/></svg>
<span style="left:1004.40px;top:79.34px;font:12px/12px 'Liberation Sans',sans-serif;color:#f2f2f2;letter-spacing:-0.270px;">Edit</span>
<svg style="left:982px;top:100px;" width="18" height="18" viewBox="0 0 18 18"><path d="M1 2H7L9 4.5L4.5 9.5L8.5 13.5L16 6" fill="none" stroke="#e8e8e8" stroke-width="2"/><path d="M1 2V7L8.5 15.5" fill="none" stroke="#e8e8e8" stroke-width="2"/><path d="M7 9.5L13 3L15.5 5.5L9.5 12L6.5 12.5Z" fill="#f3bd6a"/><path d="M13 3L14.3 1.5L17 4L15.5 5.5Z" fill="#e8464a"/></svg>
<span style="left:1004.40px;top:103.34px;font:12px/12px 'Liberation Sans',sans-serif;color:#f2f2f2;letter-spacing:0.037px;">Edit Attributes</span>
<svg style="left:1087px;top:108px;" width="5" height="3" viewBox="0 0 5 3"><path d="M0 0H5L2.5 3Z" fill="#f0f0f0"/></svg>
<span style="left:997.00px;top:126.84px;font:12px/12px 'Liberation Sans',sans-serif;color:#f2f2f2;letter-spacing:-0.069px;">Block</span>
<svg style="left:1032px;top:131px;" width="7" height="4" viewBox="0 0 7 4"><path d="M0 0H7L3.5 4Z" fill="#f0f0f0"/></svg>
<svg style="left:1115px;top:51px;" width="32" height="33" viewBox="0 0 32 33"><rect x="0.5" y="0.5" width="20" height="27" rx="1" fill="#e4e4e4"/><rect x="3" y="3.5" width="13" height="9" fill="#5db4ea"/><path d="M3 18H12M3 23H12" stroke="#666" stroke-width="1.1"/><path d="M6 16V20M10 21V25" stroke="#666" stroke-width="1.3"/><path d="M14 24L20 18L27 25L21 31Z" fill="#f3bd6a"/><path d="M20 18L25 13L32 20L27 25Z" fill="#f4f4f4"/></svg>
<span style="left:1114.10px;top:89.14px;font:12px/12px 'Liberation Sans',sans-serif;color:#f2f2f2;letter-spacing:0.184px;">Match</span>
<span style="left:1104.40px;top:103.84px;font:12px/12px 'Liberation Sans',sans-serif;color:#f2f2f2;letter-spacing:-0.219px;">Properties</span>
<svg style="left:1162px;top:52px;" width="17" height="17" viewBox="0 0 17 17"><circle cx="8.5" cy="8.5" r="8" fill="#e85b4f"/><path d="M8.5 8.5L8.5 0.5A8 8 0 0 1 16.1 6Z" fill="#f29b38"/><path d="M8.5 8.5L16.1 6A8 8 0 0 1 13.2 15Z" fill="#e8504f"/><path d="M8.5 8.5L13.2 15A8 8 0 0 1 3.8 15Z" fill="#7a55d8"/><path d="M8.5 8.5L3.8 15A8 8 0 0 1 0.9 6Z" fill="#3f8de0"/><path d="M8.5 8.5L0.9 6A8 8 0 0 1 8.5 0.5Z" fill="#55c060"/></svg>
<svg style="left:1162px;top:75px;" width="17" height="18" viewBox="0 0 17 18"><rect x="0" y="1" width="17" height="2" fill="#e4e4e4"/><rect x="0" y="5" width="17" height="2.6" fill="#e4e4e4"/><rect x="0" y="9.5" width="17" height="3" fill="#e4e4e4"/><rect x="0" y="14" width="17" height="3.6" fill="#e4e4e4"/></svg>
<svg style="left:1162px;top:101px;" width="17" height="14" viewBox="0 0 17 14"><path d="M0 1H17" stroke="#e4e4e4" stroke-width="1" stroke-dasharray="1 1"/><path d="M0 4.5H17" stroke="#e4e4e4" stroke-width="1" stroke-dasharray="3 1"/><path d="M0 8H17" stroke="#e4e4e4" stroke-width="1" stroke-dasharray="5 1 1 1"/><path d="M0 11.5H17" stroke="#e4e4e4" stroke-width="1" stroke-dasharray="4 2"/></svg>
<div style="left:1181px;top:50px;width:180px;height:21px;background:linear-gradient(#5a5a5a,#4c4c4c);border:1px solid #2f2f2f;box-sizing:border-box;border-radius:2px;"></div>
<svg style="left:1352px;top:59px;" width="7" height="4" viewBox="0 0 7 4"><path d="M0 0H7L3.5 4Z" fill="#f0f0f0"/></svg>
<div style="left:1181px;top:74px;width:180px;height:21px;background:linear-gradient(#5a5a5a,#4c4c4c);border:1px solid #2f2f2f;box-sizing:border-box;border-radius:2px;"></div>
<svg style="left:1352px;top:83px;" width="7" height="4" viewBox="0 0 7 4"><path d="M0 0H7L3.5 4Z" fill="#f0f0f0"/></svg>
<div style="left:1181px;top:98px;width:180px;height:21px;background:linear-gradient(#5a5a5a,#4c4c4c);border:1px solid #2f2f2f;box-sizing:border-box;border-radius:2px;"></div>
<svg style="left:1352px;top:107px;" width="7" height="4" viewBox="0 0 7 4"><path d="M0 0H7L3.5 4Z" fill="#f0f0f0"/></svg>
<div style="left:1193px;top:53.5px;width:17px;height:15px;background:#0a0505;border:1px solid #cfcfcf;box-sizing:border-box;"></div>
<span style="left:1220.00px;top:55.34px;font:12px/12px 'Liberation Sans',sans-serif;color:#f2f2f2;letter-spacing:-0.360px;">ByLayer</span>
<div style="left:1185px;top:84px;width:63px;height:1px;background:#e8e8e8;"></div>
<span style="left:1250.70px;top:78.34px;font:12px/12px 'Liberation Sans',sans-serif;color:#f2f2f2;letter-spacing:-0.389px;">ByLayer</span>
<div style="left:1185px;top:108px;width:63px;height:1px;background:#e8e8e8;"></div>
<span style="left:1250.70px;top:102.34px;font:12px/12px 'Liberation Sans',sans-serif;color:#f2f2f2;transform:scaleX(0.8683);transform-origin:0 0;">BYLAYER</span>
<span style="left:1191.50px;top:126.84px;font:12px/12px 'Liberation Sans',sans-serif;color:#f2f2f2;letter-spacing:-0.169px;">Properties</span>
<svg style="left:1250px;top:131px;" width="7" height="4" viewBox="0 0 7 4"><path d="M0 0H7L3.5 4Z" fill="#f0f0f0"/></svg>
<svg style="left:1352px;top:130px;" width="7" height="7" viewBox="0 0 7 7"><path d="M0.5 0.5L5.5 5.5M6 2V6H2" fill="none" stroke="#d8d8d8" stroke-width="1.1"/></svg>
<svg style="left:1368px;top:52px;" width="33" height="32" viewBox="0 0 33 32"><path d="M6 4H1.500V30H6M19 30H23.500V20" fill="none" stroke="#e8e8e8" stroke-width="1.800"/><rect x="6" y="8" width="9" height="7" fill="#5db4ea"/><circle cx="11" cy="23" r="5" fill="#8a8a8a" stroke="#c4c4c4" stroke-width="1.400"/><path d="M23 0.500L25 6L30.500 4L28 9.500L33 11.500L28 13.500L30.500 19L25 17L23 22.500L21 17L15.500 19L18 13.500L13 11.500L18 9.500L15.500 4L21 6Z" fill="#f3bd6a"/></svg>
<span style="left:1369.30px;top:88.84px;font:12px/12px 'Liberation Sans',sans-serif;color:#f2f2f2;letter-spacing:-0.070px;">Group</span>
<svg style="left:1410px;top:53px;" width="17" height="17" viewBox="0 0 17 17"><path d="M4 1H1V16H4M11 16H14V10" fill="none" stroke="#e4e4e4" stroke-width="1.2"/><rect x="4" y="3" width="4" height="4" fill="none" stroke="#5db4ea"/><circle cx="6" cy="12" r="2.3" fill="none" stroke="#ccc"/><path d="M10 4L16 10M16 4L10 10" stroke="#e8464a" stroke-width="1.6"/></svg>
<svg style="left:1410px;top:77px;" width="17" height="17" viewBox="0 0 17 17"><path d="M4 1H1V16H4M10 16H13V13" fill="none" stroke="#e4e4e4" stroke-width="1.2"/><rect x="4" y="3" width="4" height="4" fill="none" stroke="#5db4ea"/><circle cx="6" cy="12" r="2.3" fill="none" stroke="#ccc"/><path d="M9 12L14 6L16.5 8.5L11.5 14L8.5 14.5Z" fill="#f3bd6a"/><path d="M14 6L15 4.8L17.5 7.3L16.5 8.5Z" fill="#e8464a"/></svg>
<div style="left:1406px;top:98px;width:24px;height:22px;background:#3d63a8;border:1px solid #1c1c1c;box-sizing:border-box;"></div>
<svg style="left:1410px;top:101px;" width="18" height="17" viewBox="0 0 18 17"><path d="M4 1H1V16H4M11 1H14V6" fill="none" stroke="#e4e4e4" stroke-width="1.2"/><rect x="4" y="3" width="4" height="4" fill="#5fc27a"/><circle cx="6" cy="12" r="2.3" fill="#5fc27a"/><path d="M9 5L9 16L11.8 13.2L13.8 17L15.5 16L13.6 12.4L17 12Z" fill="#fff" stroke="#333" stroke-width=".5"/></svg>
<span style="left:1372.30px;top:126.84px;font:12px/12px 'Liberation Sans',sans-serif;color:#f2f2f2;letter-spacing:-0.159px;">Groups</span>
<svg style="left:1416px;top:131px;" width="7" height="4" viewBox="0 0 7 4"><path d="M0 0H7L3.5 4Z" fill="#f0f0f0"/></svg>
<svg style="left:1454px;top:58px;" width="30" height="19" viewBox="0 0 30 19"><path d="M1.5 0V8M28.5 0V8M2 4H28" stroke="#e4e4e4" stroke-width="1.1"/><path d="M1.5 4L5 2.3V5.7ZM28.5 4L25 2.3V5.7Z" fill="#e4e4e4"/><rect x="1" y="11" width="28" height="7.5" fill="#f3bd6a"/><path d="M4 11V14M7 11V13M10 11V14M13 11V13M16 11V14M19 11V13M22 11V14M25 11V13" stroke="#8a6420" stroke-width="1"/></svg>
<span style="left:1446.70px;top:88.84px;font:12px/12px 'Liberation Sans',sans-serif;color:#f2f2f2;letter-spacing:-0.241px;">Measure</span>
<svg style="left:1466px;top:105px;" width="5" height="3" viewBox="0 0 5 3"><path d="M0 0H5L2.5 3Z" fill="#f0f0f0"/></svg>
<svg style="left:1506px;top:52px;" width="18" height="18" viewBox="0 0 18 18"><path d="M7 1L5 5H7.5L6 8.5L11 4H8.5L10 1Z" fill="#f3bd6a"/><path d="M1 5L1 15L3.5 12.5L5.5 16.5L7 15.7L5.2 12L8.5 11.5Z" fill="#fff"/><rect x="8.5" y="8" width="8.5" height="8.5" fill="#f0f0f0"/><path d="M10 10.5H15.5M10 12.5H15.5M10 14.5H15.5" stroke="#5db4ea" stroke-width="1"/></svg>
<svg style="left:1506px;top:76px;" width="18" height="18" viewBox="0 0 18 18"><rect x="1" y="1" width="14" height="14" rx="2" fill="#3a8a4a" stroke="#7fd890" stroke-dasharray="2 1.2"/><path d="M4 4H9V9H13V13H4Z" fill="#9fe0a8"/><path d="M9 6L9 16L11.5 13.5L13.5 17.5L15 16.7L13.2 13L16.5 12.5Z" fill="#fff" stroke="#333" stroke-width=".5"/></svg>
<svg style="left:1508px;top:101px;" width="14" height="17" viewBox="0 0 14 17"><rect x="0.5" y="0.5" width="12" height="15.5" rx="1" fill="#d4d4d4"/><rect x="2.2" y="2" width="8.6" height="3.2" fill="#666"/><path d="M2.5 7.5H4.5M5.5 7.5H7.5M8.5 7.5H10.5M2.5 10.3H4.5M5.5 10.3H7.5M8.5 10.3H10.5M2.5 13.1H4.5M5.5 13.1H7.5M8.5 13.1H10.5" stroke="#555" stroke-width="1.6"/></svg>
<span style="left:1454.30px;top:126.84px;font:12px/12px 'Liberation Sans',sans-serif;color:#f2f2f2;letter-spacing:0.036px;">Utilities</span>
<svg style="left:1500px;top:131px;" width="7" height="4" viewBox="0 0 7 4"><path d="M0 0H7L3.5 4Z" fill="#f0f0f0"/></svg>
<svg style="left:1543px;top:51px;" width="28" height="33" viewBox="0 0 28 33"><rect x="0.5" y="3" width="22" height="25" rx="1.5" fill="#e8b878"/><rect x="7" y="0" width="9" height="5" rx="1" fill="#f4f4f4"/><path d="M10 8H22L27 13V32H10Z" fill="#e8e8e8"/><path d="M22 8V13H27Z" fill="#bdbdbd"/></svg>
<span style="left:1543.30px;top:88.84px;font:12px/12px 'Liberation Sans',sans-serif;color:#f2f2f2;letter-spacing:-0.457px;">Paste</span>
<svg style="left:1555px;top:105px;" width="5" height="3" viewBox="0 0 5 3"><path d="M0 0H5L2.5 3Z" fill="#f0f0f0"/></svg>
<svg style="left:1586px;top:52px;" width="18" height="18" viewBox="0 0 18 18"><path d="M1 2H10M1 5H10M1 8H7M1 11H7" stroke="#e4e4e4" stroke-width="1.3"/><path d="M8 4L15 13M15 4L9 13" stroke="#e4e4e4" stroke-width="1.3"/><circle cx="9" cy="14.5" r="1.8" fill="none" stroke="#e4e4e4"/><circle cx="15" cy="14.5" r="1.8" fill="none" stroke="#e4e4e4"/></svg>
<svg style="left:1588px;top:77px;" width="15" height="17" viewBox="0 0 15 17"><path d="M0.5 0.5H7L10 3.5V12H0.5Z" fill="#cfcfcf"/><path d="M4.5 4.5H11L14 7.5V16.5H4.5Z" fill="#ececec" stroke="#777" stroke-width=".6"/></svg>
<span style="left:1544.30px;top:126.84px;font:12px/12px 'Liberation Sans',sans-serif;color:#f2f2f2;letter-spacing:0.037px;">Clipboard</span>
<svg style="left:1625px;top:56px;" width="33" height="24" viewBox="0 0 33 24"><path d="M0 0H13V10H32.5V24H0Z" fill="#e6e6e6"/></svg>
<span style="left:1629.30px;top:88.84px;font:12px/12px 'Liberation Sans',sans-serif;color:#f2f2f2;transform:scaleX(0.8774);transform-origin:0 0;">Base</span>
<svg style="left:1639px;top:105px;" width="5" height="3" viewBox="0 0 5 3"><path d="M0 0H5L2.5 3Z" fill="#f0f0f0"/></svg>
<span style="left:1615.00px;top:126.84px;font:12px/12px 'Liberation Sans',sans-serif;color:#f2f2f2;letter-spacing:-0.199px;">View</span>
<svg style="left:1646px;top:131px;" width="7" height="4" viewBox="0 0 7 4"><path d="M0 0H7L3.5 4Z" fill="#f0f0f0"/></svg>
<svg style="left:1660px;top:130px;" width="7" height="7" viewBox="0 0 7 7"><path d="M0.5 0.5L5.5 5.5M6 2V6H2" fill="none" stroke="#d8d8d8" stroke-width="1.1"/></svg>
<div style="left:0px;top:145px;width:1919px;height:24px;background:#3a3a3a;"></div>
<div style="left:0px;top:168px;width:1919px;height:5px;background:#5c5c5c;"></div>
<svg style="left:8px;top:147px;" width="137" height="22" viewBox="0 0 137 22"><defs><linearGradient id="gt0" x1="0" y1="0" x2="0" y2="1"><stop offset="0" stop-color="#565656"/><stop offset="1" stop-color="#4b4b4b"/></linearGradient></defs><path d="M0 21.5 Q6 21 8 14 L11 5 Q13 0.5 18 0.5 H127 Q134 0.5 134 7 V15 Q134 21.5 127 21.5 Z" fill="url(#gt0)" stroke="#444" stroke-width="0.6"/></svg>
<span style="left:32.50px;top:152.84px;font:12px/12px 'Liberation Sans',sans-serif;color:#cdcdcd;letter-spacing:-0.188px;">Start</span>
<svg style="left:134px;top:147px;" width="134" height="22" viewBox="0 0 134 22"><defs><linearGradient id="gt1" x1="0" y1="0" x2="0" y2="1"><stop offset="0" stop-color="#565656"/><stop offset="1" stop-color="#4b4b4b"/></linearGradient></defs><path d="M0 21.5 Q6 21 8 14 L11 5 Q13 0.5 18 0.5 H124 Q131 0.5 131 7 V15 Q131 21.5 124 21.5 Z" fill="url(#gt1)" stroke="#444" stroke-width="0.6"/></svg>
<span style="left:155.00px;top:152.84px;font:12px/12px 'Liberation Sans',sans-serif;color:#cdcdcd;letter-spacing:-0.229px;">A2-001*</span>
<svg style="left:247px;top:154px;" width="8" height="8" viewBox="0 0 8 8"><path d="M1 1L7 7M7 1L1 7" stroke="#2c2c2c" stroke-width="2"/></svg>
<svg style="left:257px;top:147px;" width="134" height="22" viewBox="0 0 134 22"><defs><linearGradient id="gt2" x1="0" y1="0" x2="0" y2="1"><stop offset="0" stop-color="#565656"/><stop offset="1" stop-color="#4b4b4b"/></linearGradient></defs><path d="M0 21.5 Q6 21 8 14 L11 5 Q13 0.5 18 0.5 H124 Q131 0.5 131 7 V15 Q131 21.5 124 21.5 Z" fill="url(#gt2)" stroke="#444" stroke-width="0.6"/></svg>
<span style="left:278.00px;top:152.84px;font:12px/12px 'Liberation Sans',sans-serif;color:#cdcdcd;letter-spacing:-0.229px;">A2-002*</span>
<svg style="left:370px;top:154px;" width="8" height="8" viewBox="0 0 8 8"><path d="M1 1L7 7M7 1L1 7" stroke="#2c2c2c" stroke-width="2"/></svg>
<svg style="left:380px;top:147px;" width="134" height="22" viewBox="0 0 134 22"><defs><linearGradient id="gt3" x1="0" y1="0" x2="0" y2="1"><stop offset="0" stop-color="#565656"/><stop offset="1" stop-color="#4b4b4b"/></linearGradient></defs><path d="M0 21.5 Q6 21 8 14 L11 5 Q13 0.5 18 0.5 H124 Q131 0.5 131 7 V15 Q131 21.5 124 21.5 Z" fill="url(#gt3)" stroke="#444" stroke-width="0.6"/></svg>
<span style="left:401.00px;top:152.84px;font:12px/12px 'Liberation Sans',sans-serif;color:#cdcdcd;letter-spacing:-0.229px;">A2-101*</span>
<svg style="left:493px;top:154px;" width="8" height="8" viewBox="0 0 8 8"><path d="M1 1L7 7M7 1L1 7" stroke="#2c2c2c" stroke-width="2"/></svg>
<svg style="left:503px;top:147px;" width="148" height="22" viewBox="0 0 148 22"><defs><linearGradient id="gt4" x1="0" y1="0" x2="0" y2="1"><stop offset="0" stop-color="#565656"/><stop offset="1" stop-color="#4b4b4b"/></linearGradient></defs><path d="M0 21.5 Q6 21 8 14 L11 5 Q13 0.5 18 0.5 H138 Q145 0.5 145 7 V15 Q145 21.5 138 21.5 Z" fill="url(#gt4)" stroke="#444" stroke-width="0.6"/></svg>
<span style="left:524.00px;top:152.84px;font:12px/12px 'Liberation Sans',sans-serif;color:#cdcdcd;letter-spacing:-0.228px;">A2-102 __A2-103*</span>
<svg style="left:630px;top:154px;" width="8" height="8" viewBox="0 0 8 8"><path d="M1 1L7 7M7 1L1 7" stroke="#2c2c2c" stroke-width="2"/></svg>
<svg style="left:640px;top:147px;" width="134" height="22" viewBox="0 0 134 22"><defs><linearGradient id="gt5" x1="0" y1="0" x2="0" y2="1"><stop offset="0" stop-color="#565656"/><stop offset="1" stop-color="#4b4b4b"/></linearGradient></defs><path d="M0 21.5 Q6 21 8 14 L11 5 Q13 0.5 18 0.5 H124 Q131 0.5 131 7 V15 Q131 21.5 124 21.5 Z" fill="url(#gt5)" stroke="#444" stroke-width="0.6"/></svg>
<span style="left:661.00px;top:152.84px;font:12px/12px 'Liberation Sans',sans-serif;color:#cdcdcd;letter-spacing:-0.231px;">A2-104b*</span>
<svg style="left:753px;top:154px;" width="8" height="8" viewBox="0 0 8 8"><path d="M1 1L7 7M7 1L1 7" stroke="#2c2c2c" stroke-width="2"/></svg>
<svg style="left:762px;top:147px;" width="147" height="22" viewBox="0 0 147 22"><defs><linearGradient id="gt6" x1="0" y1="0" x2="0" y2="1"><stop offset="0" stop-color="#565656"/><stop offset="1" stop-color="#4b4b4b"/></linearGradient></defs><path d="M0 21.5 Q6 21 8 14 L11 5 Q13 0.5 18 0.5 H137 Q144 0.5 144 7 V15 Q144 21.5 137 21.5 Z" fill="url(#gt6)" stroke="#444" stroke-width="0.6"/></svg>
<span style="left:784.00px;top:152.84px;font:12px/12px 'Liberation Sans',sans-serif;color:#cdcdcd;letter-spacing:-0.222px;">A2-105 &amp; A2-106*</span>
<svg style="left:888px;top:154px;" width="8" height="8" viewBox="0 0 8 8"><path d="M1 1L7 7M7 1L1 7" stroke="#2c2c2c" stroke-width="2"/></svg>
<svg style="left:898px;top:147px;" width="133" height="22" viewBox="0 0 133 22"><defs><linearGradient id="gt7" x1="0" y1="0" x2="0" y2="1"><stop offset="0" stop-color="#565656"/><stop offset="1" stop-color="#4b4b4b"/></linearGradient></defs><path d="M0 21.5 Q6 21 8 14 L11 5 Q13 0.5 18 0.5 H123 Q130 0.5 130 7 V15 Q130 21.5 123 21.5 Z" fill="url(#gt7)" stroke="#444" stroke-width="0.6"/></svg>
<span style="left:919.30px;top:152.84px;font:12px/12px 'Liberation Sans',sans-serif;color:#cdcdcd;letter-spacing:-0.229px;">A3-001*</span>
<svg style="left:1011px;top:154px;" width="8" height="8" viewBox="0 0 8 8"><path d="M1 1L7 7M7 1L1 7" stroke="#2c2c2c" stroke-width="2"/></svg>
<svg style="left:1021px;top:147px;" width="133" height="22" viewBox="0 0 133 22"><defs><linearGradient id="gt8" x1="0" y1="0" x2="0" y2="1"><stop offset="0" stop-color="#565656"/><stop offset="1" stop-color="#4b4b4b"/></linearGradient></defs><path d="M0 21.5 Q6 21 8 14 L11 5 Q13 0.5 18 0.5 H123 Q130 0.5 130 7 V15 Q130 21.5 123 21.5 Z" fill="url(#gt8)" stroke="#444" stroke-width="0.6"/></svg>
<span style="left:1041.70px;top:152.84px;font:12px/12px 'Liberation Sans',sans-serif;color:#cdcdcd;letter-spacing:-0.229px;">A3-002*</span>
<svg style="left:1133px;top:154px;" width="8" height="8" viewBox="0 0 8 8"><path d="M1 1L7 7M7 1L1 7" stroke="#2c2c2c" stroke-width="2"/></svg>
<svg style="left:1144px;top:147px;" width="133" height="22" viewBox="0 0 133 22"><defs><linearGradient id="gt9" x1="0" y1="0" x2="0" y2="1"><stop offset="0" stop-color="#565656"/><stop offset="1" stop-color="#4b4b4b"/></linearGradient></defs><path d="M0 21.5 Q6 21 8 14 L11 5 Q13 0.5 18 0.5 H123 Q130 0.5 130 7 V15 Q130 21.5 123 21.5 Z" fill="url(#gt9)" stroke="#444" stroke-width="0.6"/></svg>
<span style="left:1165.00px;top:152.84px;font:12px/12px 'Liberation Sans',sans-serif;color:#cdcdcd;letter-spacing:-0.229px;">A3-003*</span>
<svg style="left:1257px;top:154px;" width="8" height="8" viewBox="0 0 8 8"><path d="M1 1L7 7M7 1L1 7" stroke="#2c2c2c" stroke-width="2"/></svg>
<svg style="left:1267px;top:147px;" width="190" height="22" viewBox="0 0 190 22"><defs><linearGradient id="gt10" x1="0" y1="0" x2="0" y2="1"><stop offset="0" stop-color="#565656"/><stop offset="1" stop-color="#4b4b4b"/></linearGradient></defs><path d="M0 21.5 Q6 21 8 14 L11 5 Q13 0.5 18 0.5 H180 Q187 0.5 187 7 V15 Q187 21.5 180 21.5 Z" fill="url(#gt10)" stroke="#444" stroke-width="0.6"/></svg>
<span style="left:1288.30px;top:152.84px;font:12px/12px 'Liberation Sans',sans-serif;color:#cdcdcd;letter-spacing:-0.208px;">A3-101 - A3-102 - A3-103*</span>
<svg style="left:1435px;top:154px;" width="8" height="8" viewBox="0 0 8 8"><path d="M1 1L7 7M7 1L1 7" stroke="#2c2c2c" stroke-width="2"/></svg>
<svg style="left:1445px;top:147px;" width="193" height="23" viewBox="0 0 193 23"><defs><linearGradient id="ga" x1="0" y1="0" x2="0" y2="1"><stop offset="0" stop-color="#6e6e6e"/><stop offset=".8" stop-color="#5c5c5c"/></linearGradient></defs><path d="M0 23 Q6 22 8 14 L11 5 Q13 0.5 18 0.5 H169 Q175 0.5 177 5 L181 15 Q184 22 192 23 Z" fill="url(#ga)"/></svg>
<span style="left:1466.70px;top:152.84px;font:12px/12px 'Liberation Sans',sans-serif;color:#ffffff;letter-spacing:-0.210px;">A3-104 - A3-105 - A3-106</span>
<svg style="left:1608px;top:154px;" width="8" height="8" viewBox="0 0 8 8"><path d="M1 1L7 7M7 1L1 7" stroke="#484848" stroke-width="2"/></svg>
<svg style="left:1634px;top:151px;" width="26" height="15" viewBox="0 0 26 15"><path d="M0 14.500Q3.500 14 5 10L6.500 5Q8 0.500 12 0.500H19Q24 0.500 24 5V10Q24 14.500 19 14.500Z" fill="#4b4b4b" stroke="#5a5a5a" stroke-width=".6"/><path d="M9 8H17M13 4V12" stroke="#d4d4d4" stroke-width="2"/></svg>
<div style="left:0px;top:1003px;width:1919px;height:25px;background:#3b3b3b;"></div>
<div style="left:0px;top:1003px;width:1919px;height:1px;background:#4a4a4a;"></div>
<svg style="left:8px;top:1003px;" width="66" height="18" viewBox="0 0 66 18"><path d="M0 0H66Q60 1 58 8L56 13Q54.500 17.500 50 17.500H14Q9 17.500 7.500 13L5.500 7Q4 1 0 0Z" fill="#4b4b4b"/></svg>
<span style="left:23.30px;top:1005.92px;font:12.5px/12.5px 'Liberation Sans',sans-serif;color:#bdbdbd;letter-spacing:-0.069px;">Model</span>
<svg style="left:68px;top:1003px;" width="70" height="18" viewBox="0 0 70 18"><path d="M0 0H70Q64 1 62 8L60 13Q58.500 17.500 54 17.500H14Q9 17.500 7.500 13L5.500 7Q4 1 0 0Z" fill="#636363"/></svg>
<span style="left:80.00px;top:1005.92px;font:bold 12.5px/12.5px 'Liberation Sans',sans-serif;color:#ffffff;transform:scaleX(0.8972);transform-origin:0 0;">Layout1</span>
<svg style="left:138px;top:1004px;" width="26" height="16" viewBox="0 0 26 16"><path d="M0 15.500Q4 15 5.500 10L7 5Q8.500 0.500 13 0.500H18Q23.500 0.500 23.500 5V10Q23.500 15.500 18 15.500Z" fill="#4a4a4a" stroke="#5c5c5c" stroke-width=".6"/><path d="M9.500 8H18.500M14 3.500V12.500" stroke="#d8d8d8" stroke-width="1.5"/></svg>
<div style="left:1463px;top:1003px;width:456px;height:25px;background:#474747;"></div>
<div style="left:1463px;top:1003px;width:1px;height:25px;background:#303030;"></div>
<span style="left:1467.50px;top:1010.42px;font:12.5px/12.5px 'Liberation Sans',sans-serif;color:#f4f4f4;transform:scaleX(0.8202);transform-origin:0 0;text-shadow:0 0 .6px #fff;">PAPER</span>
<div style="left:1505px;top:1004px;width:1px;height:24px;background:#343434;"></div>
<div style="left:1506px;top:1004px;width:1px;height:24px;background:#555;"></div>
<div style="left:1609px;top:1004px;width:1px;height:24px;background:#343434;"></div>
<div style="left:1610px;top:1004px;width:1px;height:24px;background:#555;"></div>
<div style="left:1675px;top:1004px;width:1px;height:24px;background:#343434;"></div>
<div style="left:1676px;top:1004px;width:1px;height:24px;background:#555;"></div>
<div style="left:1749px;top:1004px;width:1px;height:24px;background:#343434;"></div>
<div style="left:1750px;top:1004px;width:1px;height:24px;background:#555;"></div>
<div style="left:1789px;top:1004px;width:1px;height:24px;background:#343434;"></div>
<div style="left:1790px;top:1004px;width:1px;height:24px;background:#555;"></div>
<div style="left:1816px;top:1004px;width:1px;height:24px;background:#343434;"></div>
<div style="left:1817px;top:1004px;width:1px;height:24px;background:#555;"></div>
<div style="left:1842px;top:1004px;width:1px;height:24px;background:#343434;"></div>
<div style="left:1843px;top:1004px;width:1px;height:24px;background:#555;"></div>
<div style="left:1869px;top:1004px;width:1px;height:24px;background:#343434;"></div>
<div style="left:1870px;top:1004px;width:1px;height:24px;background:#555;"></div>
<div style="left:1508px;top:1006px;width:22px;height:22px;background:#4f87c6;"></div>
<svg style="left:1511px;top:1009px;" width="16" height="16" viewBox="0 0 16 16"><path d="M2 1V14H15M2 9H7V14" fill="none" stroke="#f0f0f0" stroke-width="1.4"/></svg>
<svg style="left:1534px;top:1008px;" width="20" height="18" viewBox="0 0 20 18"><circle cx="8" cy="10" r="6.300" fill="none" stroke="#e8e8e8" stroke-width="1.3"/><path d="M8 10H17M8 10L14 2" stroke="#e8e8e8" stroke-width="1.2"/></svg>
<svg style="left:1560px;top:1015px;" width="6" height="4" viewBox="0 0 6 4"><path d="M0 0H6L3.0 4Z" fill="#e8e8e8"/></svg>
<svg style="left:1574px;top:1008px;" width="18" height="18" viewBox="0 0 18 18"><path d="M9 1V17" stroke="#4fc05a" stroke-width="1.3"/><path d="M2 2L15 16" stroke="#e06060" stroke-width="1.3"/><circle cx="9" cy="9.500" r="1.500" fill="#ddd"/></svg>
<svg style="left:1598px;top:1015px;" width="6" height="4" viewBox="0 0 6 4"><path d="M0 0H6L3.0 4Z" fill="#e8e8e8"/></svg>
<svg style="left:1613px;top:1008px;" width="18" height="18" viewBox="0 0 18 18"><path d="M2 15H16M2 15L14 4" stroke="#e8e8e8" stroke-width="1.300" fill="none"/><path d="M8 15A6 6 0 0 0 6.500 11" stroke="#e8e8e8" fill="none"/></svg>
<div style="left:1635px;top:1006px;width:22px;height:22px;background:#4f87c6;"></div>
<svg style="left:1637px;top:1008px;" width="18" height="18" viewBox="0 0 18 18"><rect x="4.500" y="4.500" width="11" height="11" fill="none" stroke="#f4f4f4" stroke-width="1.300"/><rect x="1.500" y="1.500" width="4.500" height="4.500" fill="#4f87c6" stroke="#f4f4f4" stroke-width="1.200"/></svg>
<svg style="left:1662px;top:1015px;" width="6" height="4" viewBox="0 0 6 4"><path d="M0 0H6L3.0 4Z" fill="#e8e8e8"/></svg>
<svg style="left:1679px;top:1008px;" width="20" height="18" viewBox="0 0 20 18"><rect x="2" y="2" width="14" height="14" fill="none" stroke="#e8e8e8" stroke-width="1.200" stroke-dasharray="3 2"/><rect x="6" y="7" width="7" height="7" fill="none" stroke="#e8e8e8" stroke-width="1.200"/><path d="M1 1L6 6" stroke="#e8e8e8" stroke-width="1.200"/></svg>
<svg style="left:1703px;top:1008px;" width="20" height="18" viewBox="0 0 20 18"><path d="M1 16L8 2L11 9L15 16L8 11Z" fill="#e0e0e0"/><circle cx="15.500" cy="5" r="2.200" fill="none" stroke="#e0e0e0"/></svg>
<svg style="left:1727px;top:1008px;" width="20" height="18" viewBox="0 0 20 18"><path d="M1 16L8 2L11 9L15 16L8 11Z" fill="#e0e0e0"/><path d="M15 1L16 4L19 5L16 6L15 9L14 6L11 5L14 4Z" fill="#e0e0e0"/></svg>
<svg style="left:1754px;top:1009px;" width="18" height="18" viewBox="0 0 18 18"><path d="M9 0.500L10.500 3L13.500 2L14 5L17 5.500L15.500 8L17.500 10.500L15 12L15.500 15L12.500 15L11 17.500L9 15.500L7 17.500L5.500 15L2.500 15L3 12L0.500 10.500L2.500 8L1 5.500L4 5L4.500 2L7.500 3Z" fill="#e4e4e4"/><circle cx="9" cy="9" r="3" fill="#3b3b3b"/></svg>
<svg style="left:1780px;top:1015px;" width="6" height="4" viewBox="0 0 6 4"><path d="M0 0H6L3.0 4Z" fill="#e8e8e8"/></svg>
<svg style="left:1795px;top:1009px;" width="17" height="17" viewBox="0 0 17 17"><path d="M8.500 0V17M0 8.500H17" stroke="#f0f0f0" stroke-width="1.800"/></svg>
<svg style="left:1821px;top:1008px;" width="20" height="18" viewBox="0 0 20 18"><rect x="1.500" y="1.500" width="6" height="6" fill="none" stroke="#e4e4e4" stroke-width="1.200"/><circle cx="14.500" cy="7" r="3" fill="none" stroke="#e4e4e4" stroke-width="1.200"/><path d="M7.500 11L4.500 16.500H10.500Z" fill="none" stroke="#e4e4e4" stroke-width="1.100"/></svg>
<svg style="left:1848px;top:1008px;" width="20" height="19" viewBox="0 0 20 19"><rect x="1" y="1" width="11" height="12" fill="#e8e8e8"/><rect x="1" y="11" width="8" height="6" fill="#f0d040"/><path d="M6.500 2V12M2 6.500H11" stroke="#4a9ae0" stroke-width="1.300"/><path d="M9 13.500L12 16.500L18 10" fill="none" stroke="#3fb04f" stroke-width="2"/></svg>
<svg style="left:1874px;top:1010px;" width="18" height="15" viewBox="0 0 18 15"><rect x="0.600" y="0.600" width="16.800" height="13.800" fill="none" stroke="#e4e4e4" stroke-width="1.200"/><path d="M4 11L13 4M13 4H9.500M13 4V7.500M4 11H7.500M4 11V7.500" stroke="#e4e4e4" stroke-width="1.100" fill="none"/></svg>
<svg style="left:1898px;top:1010px;" width="17" height="15" viewBox="0 0 17 15"><path d="M0 1.500H17M0 7.500H17M0 13.500H17" stroke="#f0f0f0" stroke-width="1.800"/></svg>
</div></body></html>
